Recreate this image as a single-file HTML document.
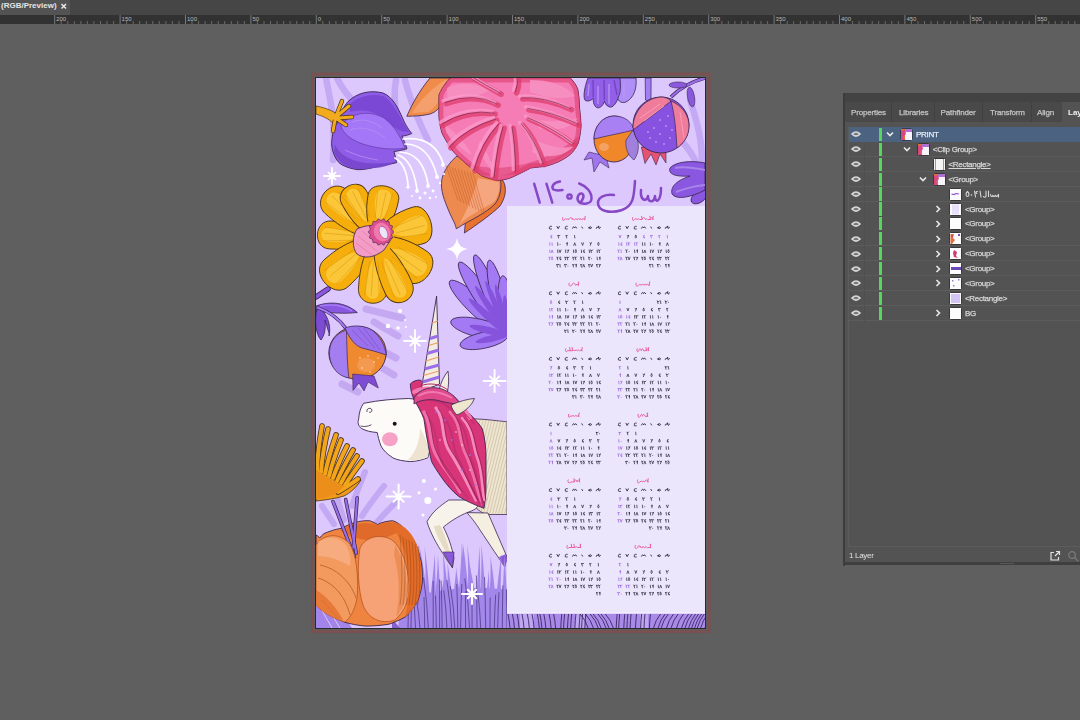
<!DOCTYPE html>
<html><head><meta charset="utf-8">
<style>
html,body{margin:0;padding:0;width:1080px;height:720px;overflow:hidden;background:#5f5f5f;font-family:"Liberation Sans",sans-serif;}
div,svg{position:absolute;}
</style></head><body>
<div style="left:0;top:0;width:1080px;height:720px;filter:blur(0.3px);">
<div style="left:0;top:0;width:1080px;height:15px;background:#464646;"></div>
<div style="left:0;top:0;width:70px;height:15px;background:#535353;"></div>
<div style="left:1px;top:-1.2px;font-size:8px;line-height:13px;font-weight:bold;color:#e4e4e4;white-space:nowrap;">(RGB/Preview)</div>
<svg width="8" height="8" style="left:59.5px;top:1.5px" viewBox="0 0 8 8"><path d="M1.5,2 L6,6.5 M6,2 L1.5,6.5" stroke="#e8e8e8" stroke-width="1.5"/></svg>
<svg width="1080" height="9" style="position:absolute;left:0;top:15px;background:#323232"><line x1="54.7" y1="0" x2="54.7" y2="9" stroke="#8a8a8a" stroke-width="0.8"/><text x="56.2" y="6.3" font-size="6" fill="#b8b8b8" font-family="Liberation Sans">200</text><line x1="61.2" y1="6" x2="61.2" y2="9" stroke="#7a7a7a" stroke-width="0.8"/><line x1="67.8" y1="6" x2="67.8" y2="9" stroke="#7a7a7a" stroke-width="0.8"/><line x1="74.3" y1="6" x2="74.3" y2="9" stroke="#7a7a7a" stroke-width="0.8"/><line x1="80.9" y1="6" x2="80.9" y2="9" stroke="#7a7a7a" stroke-width="0.8"/><line x1="87.4" y1="6" x2="87.4" y2="9" stroke="#7a7a7a" stroke-width="0.8"/><line x1="93.9" y1="6" x2="93.9" y2="9" stroke="#7a7a7a" stroke-width="0.8"/><line x1="100.5" y1="6" x2="100.5" y2="9" stroke="#7a7a7a" stroke-width="0.8"/><line x1="107.0" y1="6" x2="107.0" y2="9" stroke="#7a7a7a" stroke-width="0.8"/><line x1="113.6" y1="6" x2="113.6" y2="9" stroke="#7a7a7a" stroke-width="0.8"/><line x1="120.1" y1="0" x2="120.1" y2="9" stroke="#8a8a8a" stroke-width="0.8"/><text x="121.6" y="6.3" font-size="6" fill="#b8b8b8" font-family="Liberation Sans">150</text><line x1="126.6" y1="6" x2="126.6" y2="9" stroke="#7a7a7a" stroke-width="0.8"/><line x1="133.2" y1="6" x2="133.2" y2="9" stroke="#7a7a7a" stroke-width="0.8"/><line x1="139.7" y1="6" x2="139.7" y2="9" stroke="#7a7a7a" stroke-width="0.8"/><line x1="146.3" y1="6" x2="146.3" y2="9" stroke="#7a7a7a" stroke-width="0.8"/><line x1="152.8" y1="6" x2="152.8" y2="9" stroke="#7a7a7a" stroke-width="0.8"/><line x1="159.3" y1="6" x2="159.3" y2="9" stroke="#7a7a7a" stroke-width="0.8"/><line x1="165.9" y1="6" x2="165.9" y2="9" stroke="#7a7a7a" stroke-width="0.8"/><line x1="172.4" y1="6" x2="172.4" y2="9" stroke="#7a7a7a" stroke-width="0.8"/><line x1="179.0" y1="6" x2="179.0" y2="9" stroke="#7a7a7a" stroke-width="0.8"/><line x1="185.5" y1="0" x2="185.5" y2="9" stroke="#8a8a8a" stroke-width="0.8"/><text x="187.0" y="6.3" font-size="6" fill="#b8b8b8" font-family="Liberation Sans">100</text><line x1="192.0" y1="6" x2="192.0" y2="9" stroke="#7a7a7a" stroke-width="0.8"/><line x1="198.6" y1="6" x2="198.6" y2="9" stroke="#7a7a7a" stroke-width="0.8"/><line x1="205.1" y1="6" x2="205.1" y2="9" stroke="#7a7a7a" stroke-width="0.8"/><line x1="211.7" y1="6" x2="211.7" y2="9" stroke="#7a7a7a" stroke-width="0.8"/><line x1="218.2" y1="6" x2="218.2" y2="9" stroke="#7a7a7a" stroke-width="0.8"/><line x1="224.7" y1="6" x2="224.7" y2="9" stroke="#7a7a7a" stroke-width="0.8"/><line x1="231.3" y1="6" x2="231.3" y2="9" stroke="#7a7a7a" stroke-width="0.8"/><line x1="237.8" y1="6" x2="237.8" y2="9" stroke="#7a7a7a" stroke-width="0.8"/><line x1="244.4" y1="6" x2="244.4" y2="9" stroke="#7a7a7a" stroke-width="0.8"/><line x1="250.9" y1="0" x2="250.9" y2="9" stroke="#8a8a8a" stroke-width="0.8"/><text x="252.4" y="6.3" font-size="6" fill="#b8b8b8" font-family="Liberation Sans">50</text><line x1="257.4" y1="6" x2="257.4" y2="9" stroke="#7a7a7a" stroke-width="0.8"/><line x1="264.0" y1="6" x2="264.0" y2="9" stroke="#7a7a7a" stroke-width="0.8"/><line x1="270.5" y1="6" x2="270.5" y2="9" stroke="#7a7a7a" stroke-width="0.8"/><line x1="277.1" y1="6" x2="277.1" y2="9" stroke="#7a7a7a" stroke-width="0.8"/><line x1="283.6" y1="6" x2="283.6" y2="9" stroke="#7a7a7a" stroke-width="0.8"/><line x1="290.1" y1="6" x2="290.1" y2="9" stroke="#7a7a7a" stroke-width="0.8"/><line x1="296.7" y1="6" x2="296.7" y2="9" stroke="#7a7a7a" stroke-width="0.8"/><line x1="303.2" y1="6" x2="303.2" y2="9" stroke="#7a7a7a" stroke-width="0.8"/><line x1="309.8" y1="6" x2="309.8" y2="9" stroke="#7a7a7a" stroke-width="0.8"/><line x1="316.3" y1="0" x2="316.3" y2="9" stroke="#8a8a8a" stroke-width="0.8"/><text x="317.8" y="6.3" font-size="6" fill="#b8b8b8" font-family="Liberation Sans">0</text><line x1="322.8" y1="6" x2="322.8" y2="9" stroke="#7a7a7a" stroke-width="0.8"/><line x1="329.4" y1="6" x2="329.4" y2="9" stroke="#7a7a7a" stroke-width="0.8"/><line x1="335.9" y1="6" x2="335.9" y2="9" stroke="#7a7a7a" stroke-width="0.8"/><line x1="342.5" y1="6" x2="342.5" y2="9" stroke="#7a7a7a" stroke-width="0.8"/><line x1="349.0" y1="6" x2="349.0" y2="9" stroke="#7a7a7a" stroke-width="0.8"/><line x1="355.5" y1="6" x2="355.5" y2="9" stroke="#7a7a7a" stroke-width="0.8"/><line x1="362.1" y1="6" x2="362.1" y2="9" stroke="#7a7a7a" stroke-width="0.8"/><line x1="368.6" y1="6" x2="368.6" y2="9" stroke="#7a7a7a" stroke-width="0.8"/><line x1="375.2" y1="6" x2="375.2" y2="9" stroke="#7a7a7a" stroke-width="0.8"/><line x1="381.7" y1="0" x2="381.7" y2="9" stroke="#8a8a8a" stroke-width="0.8"/><text x="383.2" y="6.3" font-size="6" fill="#b8b8b8" font-family="Liberation Sans">50</text><line x1="388.2" y1="6" x2="388.2" y2="9" stroke="#7a7a7a" stroke-width="0.8"/><line x1="394.8" y1="6" x2="394.8" y2="9" stroke="#7a7a7a" stroke-width="0.8"/><line x1="401.3" y1="6" x2="401.3" y2="9" stroke="#7a7a7a" stroke-width="0.8"/><line x1="407.9" y1="6" x2="407.9" y2="9" stroke="#7a7a7a" stroke-width="0.8"/><line x1="414.4" y1="6" x2="414.4" y2="9" stroke="#7a7a7a" stroke-width="0.8"/><line x1="420.9" y1="6" x2="420.9" y2="9" stroke="#7a7a7a" stroke-width="0.8"/><line x1="427.5" y1="6" x2="427.5" y2="9" stroke="#7a7a7a" stroke-width="0.8"/><line x1="434.0" y1="6" x2="434.0" y2="9" stroke="#7a7a7a" stroke-width="0.8"/><line x1="440.6" y1="6" x2="440.6" y2="9" stroke="#7a7a7a" stroke-width="0.8"/><line x1="447.1" y1="0" x2="447.1" y2="9" stroke="#8a8a8a" stroke-width="0.8"/><text x="448.6" y="6.3" font-size="6" fill="#b8b8b8" font-family="Liberation Sans">100</text><line x1="453.6" y1="6" x2="453.6" y2="9" stroke="#7a7a7a" stroke-width="0.8"/><line x1="460.2" y1="6" x2="460.2" y2="9" stroke="#7a7a7a" stroke-width="0.8"/><line x1="466.7" y1="6" x2="466.7" y2="9" stroke="#7a7a7a" stroke-width="0.8"/><line x1="473.3" y1="6" x2="473.3" y2="9" stroke="#7a7a7a" stroke-width="0.8"/><line x1="479.8" y1="6" x2="479.8" y2="9" stroke="#7a7a7a" stroke-width="0.8"/><line x1="486.3" y1="6" x2="486.3" y2="9" stroke="#7a7a7a" stroke-width="0.8"/><line x1="492.9" y1="6" x2="492.9" y2="9" stroke="#7a7a7a" stroke-width="0.8"/><line x1="499.4" y1="6" x2="499.4" y2="9" stroke="#7a7a7a" stroke-width="0.8"/><line x1="506.0" y1="6" x2="506.0" y2="9" stroke="#7a7a7a" stroke-width="0.8"/><line x1="512.5" y1="0" x2="512.5" y2="9" stroke="#8a8a8a" stroke-width="0.8"/><text x="514.0" y="6.3" font-size="6" fill="#b8b8b8" font-family="Liberation Sans">150</text><line x1="519.0" y1="6" x2="519.0" y2="9" stroke="#7a7a7a" stroke-width="0.8"/><line x1="525.6" y1="6" x2="525.6" y2="9" stroke="#7a7a7a" stroke-width="0.8"/><line x1="532.1" y1="6" x2="532.1" y2="9" stroke="#7a7a7a" stroke-width="0.8"/><line x1="538.7" y1="6" x2="538.7" y2="9" stroke="#7a7a7a" stroke-width="0.8"/><line x1="545.2" y1="6" x2="545.2" y2="9" stroke="#7a7a7a" stroke-width="0.8"/><line x1="551.7" y1="6" x2="551.7" y2="9" stroke="#7a7a7a" stroke-width="0.8"/><line x1="558.3" y1="6" x2="558.3" y2="9" stroke="#7a7a7a" stroke-width="0.8"/><line x1="564.8" y1="6" x2="564.8" y2="9" stroke="#7a7a7a" stroke-width="0.8"/><line x1="571.4" y1="6" x2="571.4" y2="9" stroke="#7a7a7a" stroke-width="0.8"/><line x1="577.9" y1="0" x2="577.9" y2="9" stroke="#8a8a8a" stroke-width="0.8"/><text x="579.4" y="6.3" font-size="6" fill="#b8b8b8" font-family="Liberation Sans">200</text><line x1="584.4" y1="6" x2="584.4" y2="9" stroke="#7a7a7a" stroke-width="0.8"/><line x1="591.0" y1="6" x2="591.0" y2="9" stroke="#7a7a7a" stroke-width="0.8"/><line x1="597.5" y1="6" x2="597.5" y2="9" stroke="#7a7a7a" stroke-width="0.8"/><line x1="604.1" y1="6" x2="604.1" y2="9" stroke="#7a7a7a" stroke-width="0.8"/><line x1="610.6" y1="6" x2="610.6" y2="9" stroke="#7a7a7a" stroke-width="0.8"/><line x1="617.1" y1="6" x2="617.1" y2="9" stroke="#7a7a7a" stroke-width="0.8"/><line x1="623.7" y1="6" x2="623.7" y2="9" stroke="#7a7a7a" stroke-width="0.8"/><line x1="630.2" y1="6" x2="630.2" y2="9" stroke="#7a7a7a" stroke-width="0.8"/><line x1="636.8" y1="6" x2="636.8" y2="9" stroke="#7a7a7a" stroke-width="0.8"/><line x1="643.3" y1="0" x2="643.3" y2="9" stroke="#8a8a8a" stroke-width="0.8"/><text x="644.8" y="6.3" font-size="6" fill="#b8b8b8" font-family="Liberation Sans">250</text><line x1="649.8" y1="6" x2="649.8" y2="9" stroke="#7a7a7a" stroke-width="0.8"/><line x1="656.4" y1="6" x2="656.4" y2="9" stroke="#7a7a7a" stroke-width="0.8"/><line x1="662.9" y1="6" x2="662.9" y2="9" stroke="#7a7a7a" stroke-width="0.8"/><line x1="669.5" y1="6" x2="669.5" y2="9" stroke="#7a7a7a" stroke-width="0.8"/><line x1="676.0" y1="6" x2="676.0" y2="9" stroke="#7a7a7a" stroke-width="0.8"/><line x1="682.5" y1="6" x2="682.5" y2="9" stroke="#7a7a7a" stroke-width="0.8"/><line x1="689.1" y1="6" x2="689.1" y2="9" stroke="#7a7a7a" stroke-width="0.8"/><line x1="695.6" y1="6" x2="695.6" y2="9" stroke="#7a7a7a" stroke-width="0.8"/><line x1="702.2" y1="6" x2="702.2" y2="9" stroke="#7a7a7a" stroke-width="0.8"/><line x1="708.7" y1="0" x2="708.7" y2="9" stroke="#8a8a8a" stroke-width="0.8"/><text x="710.2" y="6.3" font-size="6" fill="#b8b8b8" font-family="Liberation Sans">300</text><line x1="715.2" y1="6" x2="715.2" y2="9" stroke="#7a7a7a" stroke-width="0.8"/><line x1="721.8" y1="6" x2="721.8" y2="9" stroke="#7a7a7a" stroke-width="0.8"/><line x1="728.3" y1="6" x2="728.3" y2="9" stroke="#7a7a7a" stroke-width="0.8"/><line x1="734.9" y1="6" x2="734.9" y2="9" stroke="#7a7a7a" stroke-width="0.8"/><line x1="741.4" y1="6" x2="741.4" y2="9" stroke="#7a7a7a" stroke-width="0.8"/><line x1="747.9" y1="6" x2="747.9" y2="9" stroke="#7a7a7a" stroke-width="0.8"/><line x1="754.5" y1="6" x2="754.5" y2="9" stroke="#7a7a7a" stroke-width="0.8"/><line x1="761.0" y1="6" x2="761.0" y2="9" stroke="#7a7a7a" stroke-width="0.8"/><line x1="767.6" y1="6" x2="767.6" y2="9" stroke="#7a7a7a" stroke-width="0.8"/><line x1="774.1" y1="0" x2="774.1" y2="9" stroke="#8a8a8a" stroke-width="0.8"/><text x="775.6" y="6.3" font-size="6" fill="#b8b8b8" font-family="Liberation Sans">350</text><line x1="780.6" y1="6" x2="780.6" y2="9" stroke="#7a7a7a" stroke-width="0.8"/><line x1="787.2" y1="6" x2="787.2" y2="9" stroke="#7a7a7a" stroke-width="0.8"/><line x1="793.7" y1="6" x2="793.7" y2="9" stroke="#7a7a7a" stroke-width="0.8"/><line x1="800.3" y1="6" x2="800.3" y2="9" stroke="#7a7a7a" stroke-width="0.8"/><line x1="806.8" y1="6" x2="806.8" y2="9" stroke="#7a7a7a" stroke-width="0.8"/><line x1="813.3" y1="6" x2="813.3" y2="9" stroke="#7a7a7a" stroke-width="0.8"/><line x1="819.9" y1="6" x2="819.9" y2="9" stroke="#7a7a7a" stroke-width="0.8"/><line x1="826.4" y1="6" x2="826.4" y2="9" stroke="#7a7a7a" stroke-width="0.8"/><line x1="833.0" y1="6" x2="833.0" y2="9" stroke="#7a7a7a" stroke-width="0.8"/><line x1="839.5" y1="0" x2="839.5" y2="9" stroke="#8a8a8a" stroke-width="0.8"/><text x="841.0" y="6.3" font-size="6" fill="#b8b8b8" font-family="Liberation Sans">400</text><line x1="846.0" y1="6" x2="846.0" y2="9" stroke="#7a7a7a" stroke-width="0.8"/><line x1="852.6" y1="6" x2="852.6" y2="9" stroke="#7a7a7a" stroke-width="0.8"/><line x1="859.1" y1="6" x2="859.1" y2="9" stroke="#7a7a7a" stroke-width="0.8"/><line x1="865.7" y1="6" x2="865.7" y2="9" stroke="#7a7a7a" stroke-width="0.8"/><line x1="872.2" y1="6" x2="872.2" y2="9" stroke="#7a7a7a" stroke-width="0.8"/><line x1="878.7" y1="6" x2="878.7" y2="9" stroke="#7a7a7a" stroke-width="0.8"/><line x1="885.3" y1="6" x2="885.3" y2="9" stroke="#7a7a7a" stroke-width="0.8"/><line x1="891.8" y1="6" x2="891.8" y2="9" stroke="#7a7a7a" stroke-width="0.8"/><line x1="898.4" y1="6" x2="898.4" y2="9" stroke="#7a7a7a" stroke-width="0.8"/><line x1="904.9" y1="0" x2="904.9" y2="9" stroke="#8a8a8a" stroke-width="0.8"/><text x="906.4" y="6.3" font-size="6" fill="#b8b8b8" font-family="Liberation Sans">450</text><line x1="911.4" y1="6" x2="911.4" y2="9" stroke="#7a7a7a" stroke-width="0.8"/><line x1="918.0" y1="6" x2="918.0" y2="9" stroke="#7a7a7a" stroke-width="0.8"/><line x1="924.5" y1="6" x2="924.5" y2="9" stroke="#7a7a7a" stroke-width="0.8"/><line x1="931.1" y1="6" x2="931.1" y2="9" stroke="#7a7a7a" stroke-width="0.8"/><line x1="937.6" y1="6" x2="937.6" y2="9" stroke="#7a7a7a" stroke-width="0.8"/><line x1="944.1" y1="6" x2="944.1" y2="9" stroke="#7a7a7a" stroke-width="0.8"/><line x1="950.7" y1="6" x2="950.7" y2="9" stroke="#7a7a7a" stroke-width="0.8"/><line x1="957.2" y1="6" x2="957.2" y2="9" stroke="#7a7a7a" stroke-width="0.8"/><line x1="963.8" y1="6" x2="963.8" y2="9" stroke="#7a7a7a" stroke-width="0.8"/><line x1="970.3" y1="0" x2="970.3" y2="9" stroke="#8a8a8a" stroke-width="0.8"/><text x="971.8" y="6.3" font-size="6" fill="#b8b8b8" font-family="Liberation Sans">500</text><line x1="976.8" y1="6" x2="976.8" y2="9" stroke="#7a7a7a" stroke-width="0.8"/><line x1="983.4" y1="6" x2="983.4" y2="9" stroke="#7a7a7a" stroke-width="0.8"/><line x1="989.9" y1="6" x2="989.9" y2="9" stroke="#7a7a7a" stroke-width="0.8"/><line x1="996.5" y1="6" x2="996.5" y2="9" stroke="#7a7a7a" stroke-width="0.8"/><line x1="1003.0" y1="6" x2="1003.0" y2="9" stroke="#7a7a7a" stroke-width="0.8"/><line x1="1009.5" y1="6" x2="1009.5" y2="9" stroke="#7a7a7a" stroke-width="0.8"/><line x1="1016.1" y1="6" x2="1016.1" y2="9" stroke="#7a7a7a" stroke-width="0.8"/><line x1="1022.6" y1="6" x2="1022.6" y2="9" stroke="#7a7a7a" stroke-width="0.8"/><line x1="1029.2" y1="6" x2="1029.2" y2="9" stroke="#7a7a7a" stroke-width="0.8"/><line x1="1035.7" y1="0" x2="1035.7" y2="9" stroke="#8a8a8a" stroke-width="0.8"/><text x="1037.2" y="6.3" font-size="6" fill="#b8b8b8" font-family="Liberation Sans">550</text><line x1="1042.2" y1="6" x2="1042.2" y2="9" stroke="#7a7a7a" stroke-width="0.8"/><line x1="1048.8" y1="6" x2="1048.8" y2="9" stroke="#7a7a7a" stroke-width="0.8"/><line x1="1055.3" y1="6" x2="1055.3" y2="9" stroke="#7a7a7a" stroke-width="0.8"/><line x1="1061.9" y1="6" x2="1061.9" y2="9" stroke="#7a7a7a" stroke-width="0.8"/><line x1="1068.4" y1="6" x2="1068.4" y2="9" stroke="#7a7a7a" stroke-width="0.8"/><line x1="1074.9" y1="6" x2="1074.9" y2="9" stroke="#7a7a7a" stroke-width="0.8"/><line x1="1081.5" y1="6" x2="1081.5" y2="9" stroke="#7a7a7a" stroke-width="0.8"/><line x1="1088.0" y1="6" x2="1088.0" y2="9" stroke="#7a7a7a" stroke-width="0.8"/><line x1="1094.6" y1="6" x2="1094.6" y2="9" stroke="#7a7a7a" stroke-width="0.8"/></svg>
<svg width="1080" height="720" style="left:0;top:0" viewBox="0 0 1080 720"><defs><clipPath id="ab"><rect x="316" y="78" width="389" height="550"/></clipPath></defs><rect x="312.6" y="74" width="396.6" height="557.5" fill="none" stroke="#7b5050" stroke-width="2.8"/><rect x="315.5" y="77.5" width="390" height="551" fill="none" stroke="#2a2a2a" stroke-width="1"/><g clip-path="url(#ab)"><rect x="316" y="78" width="389" height="550" fill="#dcc8fd"/><g fill="none" stroke="#c4a9f4" stroke-width="6.5" stroke-linecap="round"><path d="M326,78 C330,100 336,120 333,160"/><path d="M337,78 C345,95 356,104 362,110"/><path d="M396,80 C392,100 398,130 402,150"/><path d="M405,80 C410,100 420,125 428,140"/><path d="M640,110 C650,120 680,130 695,160"/><path d="M690,100 C700,130 705,150 700,190"/></g><path d="M348,101.6 C358,92 371,90 383,93 C393,97 398,108 403,119 C406,126 409,130 411.8,133.5 C408,135 405,136 402,136 C404,141 406,145 407,148.8 C402,150 398,151 394,151.6 C395,155 396,159 396.5,162.7 C391,164 386,165 381,165.5 C372,168 364,170 357.7,169.7 C347,168 340,165 336.8,160 C332,152 331,145 332,139 C333,131 334,127 336.8,123.8 C340,114 344,106 348,101.6Z" fill="#8f5ce8" stroke="#3a2550" stroke-width="0.9"/><path d="M350,104 C360,95 375,93 385,97 C394,103 400,118 409,132 C400,132 394,128 388,122 C378,112 365,108 350,112Z" fill="#7a48d4"/><path d="M341,126 C350,112 370,110 384,118 C395,126 401,138 405,148 C394,150 380,149 366,145 C352,141 343,134 341,126Z" fill="#a476f8" stroke="#5a3498" stroke-width="0.6"/><path d="M335,145 C340,155 350,161 366,163 C378,164 388,163 395,162 C388,167 374,169 358,169 C346,168 338,162 334,152Z" fill="#7646cc" opacity="0.9"/><g fill="none" stroke="#b892f0" stroke-width="1.2" opacity="0.7"><path d="M352,122 C362,118 372,120 382,128"/><path d="M350,130 C360,126 372,128 385,138"/><path d="M345,150 C355,155 365,158 378,160"/></g><path d="M316,106 C322,107 328,109 334,112 L340,118 L334,124 C328,118 322,116 316,114Z" fill="#f2ab1f" stroke="#4a3418" stroke-width="0.7"/><g fill="none" stroke="#4a3418" stroke-width="4.4" stroke-linecap="round"><path d="M336,116 L342,101"/><path d="M337,116 L349,106"/><path d="M338,118 L352,117"/><path d="M337,119 L346,125"/><path d="M335,120 L333,131"/></g><g fill="none" stroke="#f2ab1f" stroke-width="3" stroke-linecap="round"><path d="M336,116 L342,101"/><path d="M337,116 L349,106"/><path d="M338,118 L352,117"/><path d="M337,119 L346,125"/><path d="M335,120 L333,131"/></g><circle cx="336" cy="117" r="3.5" fill="#f2ab1f"/><path d="M406.8,116.3 C412,104 420,90 430,78 L452,78 C450,88 446,96 443,101 C440,108 436,112 430,114 C422,116 414,116 406.8,116.3Z" fill="#f08c4a" stroke="#3a2550" stroke-width="0.8"/><path d="M412,113 C420,100 432,88 445,80 L450,80 C445,92 438,106 428,112Z" fill="#f6a574" opacity="0.8"/><path d="M464.4,233 C475,226 492,214 500,206 C505,198 506,192 505,186 C504,182 503,180 501,179 L470,175 C468,195 466,215 464.4,233Z" fill="#e8722e" stroke="#3a2550" stroke-width="0.8"/><path d="M456.3,228.8 C455,222 452,220 446,204 C441,192 440,182 443.5,174 C447,166 452,160 457,156 L500,175 C502,186 501,196 495,204 C485,214 470,220 456.3,228.8Z" fill="#ec8a50" stroke="#3a2550" stroke-width="0.8"/><path d="M459,225 C470,214 485,208 494,202 C499,195 500,188 499,182 L478,178 C474,195 466,212 459,225Z" fill="#f6a67e"/><g stroke="#c85a24" stroke-width="0.6" opacity="0.8"><path d="M446,165.3 L458,200.5"/><path d="M449,166.2 L461,202.0"/><path d="M452,167.1 L464,203.5"/><path d="M455,168.0 L467,205.0"/><path d="M458,168.9 L470,206.5"/><path d="M461,169.8 L473,208.0"/><path d="M464,170.7 L476,209.5"/><path d="M467,171.6 L479,211.0"/><path d="M470,172.5 L482,212.5"/><path d="M473,173.4 L485,214.0"/></g><path d="M439,94.8 C441,90 443,87 445.2,84.1 C447,81 449,79 451.3,78 L570.4,78 C574,82 577,86 578,90.2 C579,96 579.5,102 579.6,108.5 C580.5,115 581,121 581,127 C580.5,133 579.5,139 578,143.7 C576,148 573,152 570.4,154.4 C566,158 562,160 558,162 C553,164 548,166 543,166.6 C539,167 535,167.5 530.7,168 C527,170 524,171.5 521.5,172.7 C517,175 512,177.5 507.8,178.8 C504,179.8 500,180.3 497,180.3 C491,179 486,177.5 481.8,175.8 C478,173 474,170.5 471,168 C467,164.5 463,161 459,157.4 C455,154 452,150 449.7,146.7 C447,142 444,137.5 442,133 C440.5,128 439.5,123 439,117.7 C438.8,113 438.8,109 439,105.5 C438.8,102 438.8,98 439,94.8Z" fill="#f67cb6" stroke="#5a1838" stroke-width="0.9"/><clipPath id="pfclip"><path d="M439,94.8 C441,90 443,87 445.2,84.1 C447,81 449,79 451.3,78 L570.4,78 C574,82 577,86 578,90.2 C579,96 579.5,102 579.6,108.5 C580.5,115 581,121 581,127 C580.5,133 579.5,139 578,143.7 C576,148 573,152 570.4,154.4 C566,158 562,160 558,162 C553,164 548,166 543,166.6 C539,167 535,167.5 530.7,168 C527,170 524,171.5 521.5,172.7 C517,175 512,177.5 507.8,178.8 C504,179.8 500,180.3 497,180.3 C491,179 486,177.5 481.8,175.8 C478,173 474,170.5 471,168 C467,164.5 463,161 459,157.4 C455,154 452,150 449.7,146.7 C447,142 444,137.5 442,133 C440.5,128 439.5,123 439,117.7 C438.8,113 438.8,109 439,105.5 C438.8,102 438.8,98 439,94.8Z"/></clipPath><g clip-path="url(#pfclip)"><path d="M439,94.8 C441,90 443,87 445.2,84.1 C447,81 449,79 451.3,78 L570.4,78 C574,82 577,86 578,90.2 C579,96 579.5,102 579.6,108.5 C580.5,115 581,121 581,127 C580.5,133 579.5,139 578,143.7 C576,148 573,152 570.4,154.4 C566,158 562,160 558,162 C553,164 548,166 543,166.6 C539,167 535,167.5 530.7,168 C527,170 524,171.5 521.5,172.7 C517,175 512,177.5 507.8,178.8 C504,179.8 500,180.3 497,180.3 C491,179 486,177.5 481.8,175.8 C478,173 474,170.5 471,168 C467,164.5 463,161 459,157.4 C455,154 452,150 449.7,146.7 C447,142 444,137.5 442,133 C440.5,128 439.5,123 439,117.7 C438.8,113 438.8,109 439,105.5 C438.8,102 438.8,98 439,94.8Z" fill="none" stroke="#e04474" stroke-width="9" opacity="0.65"/><path d="M440,150 C470,185 540,175 580,140" fill="none" stroke="#d8386a" stroke-width="8" opacity="0.5"/></g><g fill="#f891c2" opacity="0.9"><path d="M447,88 C458,82 475,82 490,90 C480,96 462,100 448,104Z"/><path d="M530,80 C548,80 565,84 575,96 C562,100 545,98 530,92Z"/><path d="M445,125 C455,132 465,142 472,155 C462,150 452,140 446,132Z"/><path d="M480,140 C486,150 492,162 496,175 C488,168 482,156 478,146Z"/><path d="M535,140 C548,146 562,150 574,146 C565,156 548,160 532,152Z"/><path d="M540,120 C552,122 566,122 578,118 C572,128 555,132 538,128Z"/></g><g fill="none" stroke="#e03c6c" stroke-width="5.5" stroke-linecap="round" opacity="0.75" transform="translate(1.2,1.2)"><path d="M497,104 Q474,91.7 445,102.4"/><path d="M494,113 Q466.5,108.5 442,124"/><path d="M495.6,119 Q466.5,128 449.7,146.7"/><path d="M498.6,124 Q481.8,142 474,169.6"/><path d="M503,127 Q497,146.7 494,177"/><path d="M512,127 Q515.4,146.7 515.4,171"/><path d="M521.5,124 Q535,139 543,163.5"/><path d="M527.6,117.7 Q550.6,127 573.5,143.7"/><path d="M527.6,108.5 Q550.6,111.6 578,124"/><path d="M521.5,97.8 Q543,96 570.4,108.5"/><path d="M515.4,91.7 Q518.5,84 517,78"/><path d="M500,93 Q486,85.6 474,78"/></g><g fill="none" stroke="#fd9fcf" stroke-width="3.5" stroke-linecap="round" opacity="0.7" transform="translate(-2,-1.5)"><path d="M497,104 Q474,91.7 445,102.4"/><path d="M494,113 Q466.5,108.5 442,124"/><path d="M495.6,119 Q466.5,128 449.7,146.7"/><path d="M498.6,124 Q481.8,142 474,169.6"/><path d="M503,127 Q497,146.7 494,177"/><path d="M512,127 Q515.4,146.7 515.4,171"/><path d="M521.5,124 Q535,139 543,163.5"/><path d="M527.6,117.7 Q550.6,127 573.5,143.7"/><path d="M527.6,108.5 Q550.6,111.6 578,124"/><path d="M521.5,97.8 Q543,96 570.4,108.5"/><path d="M515.4,91.7 Q518.5,84 517,78"/><path d="M500,93 Q486,85.6 474,78"/></g><g fill="none" stroke="#6a1c44" stroke-width="0.7" stroke-linecap="round" opacity="0.85"><path d="M497,104 Q474,91.7 445,102.4"/><path d="M494,113 Q466.5,108.5 442,124"/><path d="M495.6,119 Q466.5,128 449.7,146.7"/><path d="M498.6,124 Q481.8,142 474,169.6"/><path d="M503,127 Q497,146.7 494,177"/><path d="M512,127 Q515.4,146.7 515.4,171"/><path d="M521.5,124 Q535,139 543,163.5"/><path d="M527.6,117.7 Q550.6,127 573.5,143.7"/><path d="M527.6,108.5 Q550.6,111.6 578,124"/><path d="M521.5,97.8 Q543,96 570.4,108.5"/><path d="M515.4,91.7 Q518.5,84 517,78"/><path d="M500,93 Q486,85.6 474,78"/></g><g fill="none" stroke="#ffffff" stroke-width="1.7" stroke-linecap="round"><path d="M403,139 C420,137 436,142 443,163"/><path d="M405,144 C420,144 431,153 437,176"/><path d="M400,152 C415,153 424,162 428,184"/><path d="M398,155 C408,158 414,170 417,189"/><path d="M395,158 C402,162 407,172 408,185"/></g><g fill="#ffffff"><circle cx="443" cy="165" r="1.9"/><circle cx="437" cy="177" r="1.9"/><circle cx="428" cy="186" r="1.9"/><circle cx="417" cy="191" r="1.9"/><circle cx="408" cy="187" r="1.7"/><circle cx="425" cy="193" r="1.5"/><circle cx="433" cy="191" r="1.4"/><circle cx="440" cy="183" r="1.2"/><circle cx="430" cy="198" r="1.3"/><circle cx="420" cy="198" r="1.4"/><circle cx="412" cy="196" r="1.1"/><circle cx="444" cy="174" r="1.1"/><circle cx="436" cy="197" r="1"/></g><path d="M332.0,176.0 L340.0,176.0 M332.0,176.0 L335.4,179.4 M332.0,176.0 L332.0,184.0 M332.0,176.0 L328.6,179.4 M332.0,176.0 L324.0,176.0 M332.0,176.0 L328.6,172.6 M332.0,176.0 L332.0,168.0 M332.0,176.0 L335.4,172.6" stroke="#ffffff" stroke-width="1.9" stroke-linecap="round" fill="none"/><path d="M0.0,0 C9.1,-9.8 27.3,-14.0 45.5,-14.0 C62.5,-14.0 62.5,14.0 45.5,14.0 C27.3,14.0 9.1,9.8 0.0,0Z" transform="translate(375.6,237.8) rotate(-176.4)" fill="#f6ae0c" stroke="#4a3418" stroke-width="0.9"/><path d="M18.2,0 C23.9,-4.9 35.2,-7.0 46.5,-7.0 C57.0,-7.0 57.0,7.0 46.5,7.0 C35.2,7.0 23.9,4.9 18.2,0Z" transform="translate(375.6,237.8) rotate(-176.4)" fill="#fdd04a" stroke="none" stroke-width="0" opacity="0.7"/><path d="M0.0,0 C10.7,-11.2 32.0,-16.0 53.3,-16.0 C73.2,-16.0 73.2,16.0 53.3,16.0 C32.0,16.0 10.7,11.2 0.0,0Z" transform="translate(375.6,237.8) rotate(-137.7)" fill="#f6ae0c" stroke="#4a3418" stroke-width="0.9"/><path d="M21.3,0 C27.9,-5.6 41.2,-8.0 54.4,-8.0 C66.7,-8.0 66.7,8.0 54.4,8.0 C41.2,8.0 27.9,5.6 21.3,0Z" transform="translate(375.6,237.8) rotate(-137.7)" fill="#fdd04a" stroke="none" stroke-width="0" opacity="0.7"/><path d="M0.0,0 C9.1,-9.8 27.4,-14.0 45.7,-14.0 C62.8,-14.0 62.8,14.0 45.7,14.0 C27.4,14.0 9.1,9.8 0.0,0Z" transform="translate(375.6,237.8) rotate(-118.0)" fill="#f6ae0c" stroke="#4a3418" stroke-width="0.9"/><path d="M18.3,0 C23.9,-4.9 35.3,-7.0 46.6,-7.0 C57.2,-7.0 57.2,7.0 46.6,7.0 C35.3,7.0 23.9,4.9 18.3,0Z" transform="translate(375.6,237.8) rotate(-118.0)" fill="#fdd04a" stroke="none" stroke-width="0" opacity="0.7"/><path d="M0.0,0 C8.2,-10.8 24.7,-15.5 41.1,-15.5 C56.4,-15.5 56.4,15.5 41.1,15.5 C24.7,15.5 8.2,10.8 0.0,0Z" transform="translate(375.6,237.8) rotate(-79.1)" fill="#f6ae0c" stroke="#4a3418" stroke-width="0.9"/><path d="M16.4,0 C21.5,-5.4 31.7,-7.8 41.9,-7.8 C51.4,-7.8 51.4,7.8 41.9,7.8 C31.7,7.8 21.5,5.4 16.4,0Z" transform="translate(375.6,237.8) rotate(-79.1)" fill="#fdd04a" stroke="none" stroke-width="0" opacity="0.7"/><path d="M0.0,0 C9.0,-13.3 26.9,-19.0 44.9,-19.0 C61.6,-19.0 61.6,19.0 44.9,19.0 C26.9,19.0 9.0,13.3 0.0,0Z" transform="translate(375.6,237.8) rotate(-16.3)" fill="#f6ae0c" stroke="#4a3418" stroke-width="0.9"/><path d="M17.9,0 C23.5,-6.6 34.6,-9.5 45.8,-9.5 C56.1,-9.5 56.1,9.5 45.8,9.5 C34.6,9.5 23.5,6.6 17.9,0Z" transform="translate(375.6,237.8) rotate(-16.3)" fill="#fdd04a" stroke="none" stroke-width="0" opacity="0.7"/><path d="M0.0,0 C10.1,-12.6 30.3,-18.0 50.5,-18.0 C69.3,-18.0 69.3,18.0 50.5,18.0 C30.3,18.0 10.1,12.6 0.0,0Z" transform="translate(375.6,237.8) rotate(34.6)" fill="#f6ae0c" stroke="#4a3418" stroke-width="0.9"/><path d="M20.2,0 C26.4,-6.3 39.0,-9.0 51.5,-9.0 C63.2,-9.0 63.2,9.0 51.5,9.0 C39.0,9.0 26.4,6.3 20.2,0Z" transform="translate(375.6,237.8) rotate(34.6)" fill="#fdd04a" stroke="none" stroke-width="0" opacity="0.7"/><path d="M0.0,0 C10.6,-12.6 31.8,-18.0 53.0,-18.0 C72.8,-18.0 72.8,18.0 53.0,18.0 C31.8,18.0 10.6,12.6 0.0,0Z" transform="translate(375.6,237.8) rotate(138.1)" fill="#f6ae0c" stroke="#4a3418" stroke-width="0.9"/><path d="M21.2,0 C27.8,-6.3 40.9,-9.0 54.1,-9.0 C66.3,-9.0 66.3,9.0 54.1,9.0 C40.9,9.0 27.8,6.3 21.2,0Z" transform="translate(375.6,237.8) rotate(138.1)" fill="#fdd04a" stroke="none" stroke-width="0" opacity="0.7"/><path d="M0.0,0 C10.2,-10.1 30.7,-14.5 51.2,-14.5 C70.3,-14.5 70.3,14.5 51.2,14.5 C30.7,14.5 10.2,10.1 0.0,0Z" transform="translate(375.6,237.8) rotate(93.0)" fill="#f6ae0c" stroke="#4a3418" stroke-width="0.9"/><path d="M20.5,0 C26.8,-5.1 39.5,-7.2 52.2,-7.2 C64.1,-7.2 64.1,7.2 52.2,7.2 C39.5,7.2 26.8,5.1 20.5,0Z" transform="translate(375.6,237.8) rotate(93.0)" fill="#fdd04a" stroke="none" stroke-width="0" opacity="0.7"/><path d="M0.0,0 C10.9,-10.1 32.8,-14.5 54.6,-14.5 C75.0,-14.5 75.0,14.5 54.6,14.5 C32.8,14.5 10.9,10.1 0.0,0Z" transform="translate(375.6,237.8) rotate(65.3)" fill="#f6ae0c" stroke="#4a3418" stroke-width="0.9"/><path d="M21.9,0 C28.6,-5.1 42.2,-7.2 55.7,-7.2 C68.4,-7.2 68.4,7.2 55.7,7.2 C42.2,7.2 28.6,5.1 21.9,0Z" transform="translate(375.6,237.8) rotate(65.3)" fill="#fdd04a" stroke="none" stroke-width="0" opacity="0.7"/><circle cx="375.6" cy="237.8" r="18" fill="#f6ae0c"/><path d="M354.2,240.2 L323.7,240.9 M354.4,235.6 L324.2,233.2 M354.7,231.9 L324.6,226.9 M354.3,224.3 L326.0,202.5 M357.8,220.4 L332.0,196.0 M360.7,217.2 L336.8,190.7 M362.3,220.7 L345.7,195.0 M366.3,218.6 L352.5,191.4 M369.7,216.8 L358.1,188.5 M375.1,218.2 L377.6,190.7 M380.2,219.1 L386.0,192.4 M384.3,219.9 L392.8,193.7 M394.2,227.0 L422.0,215.3 M396.0,233.0 L424.9,225.3 M397.5,237.9 L427.3,233.5 M397.7,247.2 L427.3,263.6 M394.4,252.1 L421.7,271.8 M391.6,256.1 L417.1,278.4 M360.4,257.9 L336.3,283.9 M356.5,253.5 L329.7,276.6 M353.2,249.9 L324.3,270.6 M378.2,261.9 L379.1,296.1 M373.5,261.6 L371.1,295.7 M369.6,261.4 L364.6,295.3 M389.8,259.3 L407.4,291.3 M385.4,261.3 L400.1,294.7 M381.9,263.0 L394.2,297.4" stroke="#c98600" stroke-width="0.7" opacity="0.55" fill="none"/><path d="M357,229 C352,236 352,248 357,254 C364,259 374,258 384,250 L392,238 C385,226 372,222 357,229Z" fill="#f39cc6" stroke="#3a2550" stroke-width="0.8"/><g stroke="#e06aa0" stroke-width="0.6" opacity="0.8"><path d="M358,236 L378,252"/><path d="M356,243 L372,255"/><path d="M362,231 L382,247"/></g><path d="M393.8,232.0 L391.7,234.6 L392.6,237.9 L389.5,239.2 L389.0,242.6 L385.7,242.4 L383.9,245.2 L381.0,243.5 L378.1,245.2 L376.3,242.4 L373.0,242.6 L372.5,239.2 L369.4,237.9 L370.3,234.6 L368.2,232.0 L370.3,229.4 L369.4,226.1 L372.5,224.8 L373.0,221.4 L376.3,221.6 L378.1,218.8 L381.0,220.5 L383.9,218.8 L385.7,221.6 L389.0,221.4 L389.5,224.8 L392.6,226.1 L391.7,229.4Z" fill="#de4f92" stroke="#3a2550" stroke-width="0.6"/><ellipse cx="382" cy="232" rx="8" ry="9.5" transform="rotate(-25 382 232)" fill="#f07aae"/><ellipse cx="383.5" cy="232.5" rx="3.8" ry="6.5" transform="rotate(-25 383.5 232.5)" fill="#ece4f8" stroke="#9a3a70" stroke-width="0.5"/><ellipse cx="478.9" cy="308.0" rx="39.7" ry="9.0" transform="rotate(-137.1 478.9 308.0)" fill="#a47af4" stroke="#3a2550" stroke-width="0.8" /><ellipse cx="483.6" cy="298.6" rx="43.8" ry="8.0" transform="rotate(-123.9 483.6 298.6)" fill="#a47af4" stroke="#3a2550" stroke-width="0.8" /><ellipse cx="491.4" cy="295.0" rx="43.4" ry="7.0" transform="rotate(-112.6 491.4 295.0)" fill="#a47af4" stroke="#3a2550" stroke-width="0.8" /><ellipse cx="498.6" cy="297.6" rx="38.6" ry="7.0" transform="rotate(-104.0 498.6 297.6)" fill="#a47af4" stroke="#3a2550" stroke-width="0.8" /><ellipse cx="505.4" cy="305.4" rx="29.8" ry="7.0" transform="rotate(-95.0 505.4 305.4)" fill="#a47af4" stroke="#3a2550" stroke-width="0.8" /><ellipse cx="479.4" cy="328.2" rx="29.4" ry="9.0" transform="rotate(-166.7 479.4 328.2)" fill="#a47af4" stroke="#3a2550" stroke-width="0.8" /><ellipse cx="484.1" cy="340.2" rx="24.5" ry="8.0" transform="rotate(167.7 484.1 340.2)" fill="#a47af4" stroke="#3a2550" stroke-width="0.8" /><ellipse cx="488.4" cy="316.8" rx="26.7" ry="3.6" transform="rotate(-137.1 488.4 316.8)" fill="#8654dc" stroke="none" stroke-width="0" /><ellipse cx="491.6" cy="310.5" rx="29.5" ry="3.2" transform="rotate(-123.9 491.6 310.5)" fill="#8654dc" stroke="none" stroke-width="0" /><ellipse cx="496.8" cy="308.1" rx="29.2" ry="2.8" transform="rotate(-112.6 496.8 308.1)" fill="#8654dc" stroke="none" stroke-width="0" /><ellipse cx="501.7" cy="309.8" rx="26.0" ry="2.8" transform="rotate(-104.0 501.7 309.8)" fill="#8654dc" stroke="none" stroke-width="0" /><ellipse cx="506.2" cy="315.1" rx="20.0" ry="2.8" transform="rotate(-95.0 506.2 315.1)" fill="#8654dc" stroke="none" stroke-width="0" /><ellipse cx="488.8" cy="330.4" rx="19.8" ry="3.6" transform="rotate(-166.7 488.8 330.4)" fill="#8654dc" stroke="none" stroke-width="0" /><ellipse cx="491.9" cy="338.5" rx="16.5" ry="3.2" transform="rotate(167.7 491.9 338.5)" fill="#8654dc" stroke="none" stroke-width="0" /><path d="M457,238 Q458.1,247.9 468,249 Q458.1,250.1 457,260 Q455.9,250.1 446,249 Q455.9,247.9 457,238Z" fill="#ffffff"/><path d="M316,297 L328,289" fill="none" stroke="#3a2550" stroke-width="5.4" stroke-linecap="round"/><path d="M316,297 L328,289" fill="none" stroke="#8a58e0" stroke-width="3.8" stroke-linecap="round"/><path d="M316,306 C330,301 345,302 357.3,312.5 C345,314 330,313 316,311Z" fill="#8a58e0" stroke="#3a2550" stroke-width="0.8"/><path d="M320,306 C332,304 344,306 352,311" fill="none" stroke="#a47af4" stroke-width="1.5"/><path d="M317,309 C314,320 316,335 321,340 C324,336 326,330 325,320 C327,328 330,334 329,336 C331,328 329,318 322,310Z" fill="#7c4cd4" stroke="#3a2550" stroke-width="0.8"/><path d="M317.3,307.5 C330,312 340,320 345.7,328.3" fill="none" stroke="#3a2550" stroke-width="3.4"/><path d="M317.3,307.5 C330,312 340,320 345.7,328.3" fill="none" stroke="#a47af4" stroke-width="2"/><g fill="none" stroke="#c4a9f2" stroke-width="7" stroke-linecap="round"><path d="M366,309 L402,318"/><path d="M374,322 L398,336"/><path d="M384,352 L396,358"/><path d="M382,368 L394,375"/><path d="M342,384 L358,392"/></g><ellipse cx="357.5" cy="352.8" rx="28.7" ry="26.4" fill="#ef8a30" stroke="#3a2550" stroke-width="0.9"/><path d="M346.4,330 C347,345 347,365 349,378 C338,376 331,368 329.5,356 C328.5,344 334,334 346.4,330Z" fill="#a47ef0" stroke="#3a2550" stroke-width="0.7"/><path d="M345,328 C352,325 364,325 372,330 C380,336 385,345 386.3,355 C378,352 370,350 362,348 C356,346 350,340 345,328Z" fill="#9a70ec" stroke="#3a2550" stroke-width="0.7"/><g stroke="#7a50c4" stroke-width="0.6" fill="none"><path d="M352,330 L368,346"/><path d="M358,328 L375,348"/><path d="M364,328 L380,350"/></g><ellipse cx="366" cy="365" rx="9" ry="7" fill="#f6a466" opacity="0.6"/><g fill="#fde0c0"><circle cx="360" cy="358" r="0.8"/><circle cx="368" cy="356" r="0.8"/><circle cx="374" cy="362" r="0.8"/><circle cx="362" cy="368" r="0.8"/><circle cx="370" cy="372" r="0.8"/><circle cx="378" cy="358" r="0.7"/></g><path d="M352.7,374 L353,390.4 L359,383 L364,391 L368,382 L378.3,388 L374,376Z" fill="#7e4cd4" stroke="#3a2550" stroke-width="0.6"/><g fill="#ffffff"><circle cx="400" cy="311" r="2"/><circle cx="388" cy="326" r="2.2"/><circle cx="398" cy="328" r="1.8"/><circle cx="405" cy="320" r="1"/><circle cx="406" cy="327" r="1"/></g><path d="M415.0,341.0 L426.0,341.0 M415.0,341.0 L419.7,345.7 M415.0,341.0 L415.0,352.0 M415.0,341.0 L410.3,345.7 M415.0,341.0 L404.0,341.0 M415.0,341.0 L410.3,336.3 M415.0,341.0 L415.0,330.0 M415.0,341.0 L419.7,336.3" stroke="#ffffff" stroke-width="1.9" stroke-linecap="round" fill="none"/><path d="M494.6,381.0 L505.6,381.0 M494.6,381.0 L499.3,385.7 M494.6,381.0 L494.6,392.0 M494.6,381.0 L489.9,385.7 M494.6,381.0 L483.6,381.0 M494.6,381.0 L489.9,376.3 M494.6,381.0 L494.6,370.0 M494.6,381.0 L499.3,376.3" stroke="#ffffff" stroke-width="1.9" stroke-linecap="round" fill="none"/><path d="M474.4,418.9 C485,419 498,421 507,421.8 L507,514.5 L486,514.5 C476,510 466,500 460,480 C455,455 460,430 474.4,418.9Z" fill="#efe6d2" stroke="#3a2550" stroke-width="0.8"/><clipPath id="bodyclip"><path d="M474.4,418.9 C485,419 498,421 507,421.8 L507,514.5 L486,514.5 C476,510 466,500 460,480 C455,455 460,430 474.4,418.9Z"/></clipPath><g clip-path="url(#bodyclip)" stroke="#b8a888" stroke-width="0.6" opacity="0.8"><path d="M480,420 L455,520"/><path d="M483,420 L458,520"/><path d="M486,420 L461,520"/><path d="M489,420 L464,520"/><path d="M492,420 L467,520"/><path d="M495,420 L470,520"/><path d="M498,420 L473,520"/><path d="M501,420 L476,520"/><path d="M504,420 L479,520"/><path d="M507,420 L482,520"/><path d="M510,420 L485,520"/><path d="M513,420 L488,520"/><path d="M516,420 L491,520"/><path d="M519,420 L494,520"/><path d="M522,420 L497,520"/><path d="M525,420 L500,520"/><path d="M528,420 L503,520"/><path d="M531,420 L506,520"/><path d="M534,420 L509,520"/><path d="M537,420 L512,520"/></g><path d="M488,513 L506.6,556 L504.8,566.8 C500,560 490,545 480,530 C475,522 470,516 466.8,512.6Z" fill="#f5efe2" stroke="#3a2550" stroke-width="0.8"/><path d="M499,557 L504.8,567 L507,561 L506,554Z" fill="#8a58dc"/><path d="M448.8,500 C440,506 432,512 427,521.7 C430,532 437,545 443.4,554.2 C446,559 449,563 452.4,567.7 L454,558 C452,548 449,538 443.4,527 C452,520 462,514 472,510.8 C478,508 480,504 478,500Z" fill="#f8f3ea" stroke="#3a2550" stroke-width="0.8"/><path d="M440,525 C445,535 448,545 450,552 L446,552 C442,545 436,535 434,526Z" fill="#e6dbc4"/><path d="M443,552 L454,552 L452.4,567.7Z" fill="#8a58dc" stroke="#3a2550" stroke-width="0.6"/><path d="M363.6,403.3 C380,400 395,399 408.3,398.5 L414,399 C420,408 428,420 431.6,430.5 C432,440 430,450 427.8,457.8 C422,460 416,461.5 410.3,461.6 C403,461 397,460 392.8,457.8 C387,454 383,450 381,446 C379,441 378,436 377.2,432.5 C371,432 366,431 361.7,428.6 C358,426 357.5,422 358.7,418.9 C359,412 361,407 363.6,403.3Z" fill="#fdfbf7" stroke="#3a2550" stroke-width="0.9"/><path d="M420,428 C426,438 430,448 428,457 C422,460 414,461 408,460 C416,452 420,440 420,428Z" fill="#ebe0cb" opacity="0.9"/><ellipse cx="389.9" cy="439.3" rx="7.8" ry="7" fill="#f5a2c6"/><circle cx="394.7" cy="423.7" r="2" fill="#1a1020"/><path d="M367,412 C366,408 371,407 372,410 C372,412 370,413 369,412" fill="none" stroke="#3a2550" stroke-width="0.8"/><path d="M360.5,426 C364,427 368,426.5 371.4,424.7" fill="none" stroke="#3a2550" stroke-width="0.8"/><path d="M439,390 C441,382 444,376 448,371 C449,378 449,386 447,393Z" fill="#f3ece0" stroke="#3a2550" stroke-width="0.8"/><path d="M410.3,383.9 C413,381 417,380 420,380 C425,383 428,386 431.6,389.7 C439,391 446,393 453,395.6 C458,400 462,405 466.6,411 C472,416 478,422 482.2,428.6 C485,438 486,448 486,457.8 C486,468 486,478 486,487 C486,495 485,502 484,508.3 C475,505 466,501 458.9,496.6 C452,491 446,484 441.4,477.2 C437,471 434,466 431.6,461.6 C430,455 428.5,448 427.8,442.2 C426,434 425,426 423.9,418.9 C421,411 417,405 414,399.4 C412,395 410.5,390 410.3,383.9Z" fill="#d83478" stroke="#3a2550" stroke-width="0.9"/><path d="M436.6,296.2 L439.5,384 C434,387 427,388.5 421.4,388.8Z" fill="#f3ece0" stroke="#3a2550" stroke-width="0.9"/><g stroke="#9a6ee8" stroke-width="3"><path d="M430,338.5 L438.2,336"/><path d="M427,353.5 L438.7,350"/><path d="M424.5,369 L439,365"/><path d="M422.5,382 L439.3,377"/></g><g stroke="#f09a68" stroke-width="1.3"><path d="M432,323 L437.8,321"/><path d="M428.7,345.5 L438.5,342.5"/><path d="M425.7,361 L438.8,357"/><path d="M423.5,375.5 L439.1,371"/></g><g fill="none" stroke-linecap="round"><path d="M414,392 C425,386 440,388 452,398 C460,404 466,410 470,418" stroke="#f27ab2" stroke-width="4"/><path d="M416,402 C428,396 442,400 452,410" stroke="#c42e72" stroke-width="2.5"/><path d="M420,386 C430,382 440,384 448,390" stroke="#b8276a" stroke-width="1"/><path d="M418,396 C430,392 445,396 456,405 C462,410 468,416 474,424" stroke="#b8276a" stroke-width="1"/></g><g fill="none" stroke-linecap="round"><path d="M424,412 C432,425 428,440 436,455 C442,466 452,476 460,492" stroke="#f070a8" stroke-width="3.5"/><path d="M436,408 C446,420 440,438 450,452 C458,464 466,480 476,500" stroke="#f68cbd" stroke-width="3.2"/><path d="M450,412 C462,424 458,440 466,455 C472,468 476,486 482,504" stroke="#f070a8" stroke-width="3"/><path d="M462,418 C474,430 472,446 478,460 C482,472 482,488 484,500" stroke="#f68cbd" stroke-width="2.5"/><path d="M430,420 C440,436 434,450 444,466 C450,476 458,486 468,498" stroke="#c83274" stroke-width="2.2"/><path d="M444,418 C456,432 450,448 460,462 C466,474 472,490 480,504" stroke="#c42e72" stroke-width="2"/><path d="M458,420 C470,434 466,450 474,466 C478,478 480,492 483,506" stroke="#c42e72" stroke-width="1.8"/></g><g fill="none" stroke="#8a1c50" stroke-width="0.7" stroke-linecap="round" opacity="0.9"><path d="M424,412 C432,425 428,440 436,455 C442,466 452,476 460,492" transform="translate(2,0)"/><path d="M436,408 C446,420 440,438 450,452 C458,464 466,480 476,500" transform="translate(2,0)"/><path d="M450,412 C462,424 458,440 466,455 C472,468 476,486 482,504" transform="translate(2,0)"/><path d="M462,418 C474,430 472,446 478,460 C482,472 482,488 484,500" transform="translate(2,0)"/></g><g fill="#ffffff" opacity="0.8"><circle cx="456" cy="432" r="0.8"/><circle cx="462" cy="445" r="0.8"/><circle cx="470" cy="470" r="0.8"/><circle cx="440" cy="440" r="0.7"/></g><g fill="#9a6ae0"><circle cx="436" cy="412" r="1"/><circle cx="452" cy="440" r="1"/><circle cx="462" cy="470" r="1"/><circle cx="470" cy="455" r="1"/><circle cx="445" cy="420" r="1"/><circle cx="475" cy="485" r="1"/></g><path d="M414,398 C420,388 432,386 442,389 C450,392 456,397 460,404 C452,404 444,402 436,400 C428,399 420,400 414,404Z" fill="#e04a8a" stroke="#3a2550" stroke-width="0.8"/><path d="M418,396 C428,390 440,391 452,398" fill="none" stroke="#f27ab2" stroke-width="2"/><path d="M451,405 C460,401 468,399 474.4,398.5 C472,405 466,411 457,415 C454,412 452,409 451,405Z" fill="#efe6d0" stroke="#3a2550" stroke-width="0.8"/><g fill="none" stroke="#c3a8f3" stroke-width="6" stroke-linecap="round"><path d="M365,472 C360,484 356,494 352,506"/><path d="M384,486 C376,496 368,506 362,516"/><path d="M396,502 C388,510 380,518 374,526"/><path d="M322,506 C326,512 330,518 334,524"/><path d="M338,500 C340,508 342,514 344,520"/></g><path d="M316,458 L346,481 L361,480 C356,488 350,493 344,496 C334,499 325,500 316,501Z" fill="#ee9a1c" stroke="#4a3418" stroke-width="0.8"/><g fill="none" stroke="#4a3418" stroke-width="5.6" stroke-linecap="round"><path d="M317,472 Q317.5,451.0 322,426"/><path d="M321,472 Q322.5,452.5 328,429"/><path d="M325,474 Q328.5,456.5 336,435"/><path d="M329,476 Q333.0,460.0 341,440"/><path d="M333,478 Q338.0,464.0 347,446"/><path d="M337,481 Q343.0,467.5 353,450"/><path d="M341,483 Q347.0,471.5 357,456"/><path d="M345,485 Q351.5,475.0 362,461"/><path d="M338,492 Q346.0,487.5 358,479"/></g><g fill="none" stroke="#f2a41a" stroke-width="4" stroke-linecap="round"><path d="M317,472 Q317.5,451.0 322,426"/><path d="M321,472 Q322.5,452.5 328,429"/><path d="M325,474 Q328.5,456.5 336,435"/><path d="M329,476 Q333.0,460.0 341,440"/><path d="M333,478 Q338.0,464.0 347,446"/><path d="M337,481 Q343.0,467.5 353,450"/><path d="M341,483 Q347.0,471.5 357,456"/><path d="M345,485 Q351.5,475.0 362,461"/><path d="M338,492 Q346.0,487.5 358,479"/></g><path d="M316,470 L344,486 C338,494 328,498 316,499Z" fill="#ec8e1a"/><path d="M398.6,496.6 L410.6,496.6 M398.6,496.6 L403.7,501.7 M398.6,496.6 L398.6,508.6 M398.6,496.6 L393.5,501.7 M398.6,496.6 L386.6,496.6 M398.6,496.6 L393.5,491.5 M398.6,496.6 L398.6,484.6 M398.6,496.6 L403.7,491.5" stroke="#ffffff" stroke-width="2" stroke-linecap="round" fill="none"/><g fill="#ffffff"><circle cx="423.9" cy="481" r="2"/><circle cx="427.8" cy="500.5" r="3.5"/><circle cx="419" cy="492.8" r="1.5"/><circle cx="435.5" cy="488.9" r="1.5"/><circle cx="423" cy="515" r="1.5"/></g><path d="M403,628 L403,600 C430,590 470,585 507,590 L507,628Z" fill="#a283e8"/><g fill="#a487ea"><path d="M398.2,628 C400.5,600 403.8,573.6 403.6,553.6 C406.7,578.6 407.5,600 409.8,628Z"/><path d="M404.4,628 C406.0,600 408.3,575.2 408.3,555.2 C410.3,580.2 410.8,600 412.4,628Z"/><path d="M409.2,628 C410.7,600 413.9,578.9 414.9,558.9 C415.6,583.9 415.2,600 416.7,628Z"/><path d="M411.6,628 C413.7,600 417.9,562.7 418.9,542.7 C420.3,567.7 420.0,600 422.1,628Z"/><path d="M414.8,628 C416.9,600 421.8,589.5 423.6,569.5 C424.0,594.5 423.0,600 425.1,628Z"/><path d="M420.0,628 C421.9,600 421.9,564.7 419.0,544.7 C424.9,569.7 427.7,600 429.6,628Z"/><path d="M424.4,628 C425.8,600 426.2,565.7 424.4,545.7 C428.3,570.7 430.1,600 431.6,628Z"/><path d="M427.6,628 C429.5,600 433.6,573.2 434.8,553.2 C435.8,578.2 435.3,600 437.2,628Z"/><path d="M432.7,628 C434.5,600 437.6,575.0 437.9,555.0 C439.9,580.0 440.1,600 441.9,628Z"/><path d="M435.5,628 C437.8,600 443.1,589.9 445.1,569.9 C445.5,594.9 444.5,600 446.7,628Z"/><path d="M442.0,628 C443.7,600 444.4,569.5 442.6,549.5 C446.9,574.5 448.8,600 450.5,628Z"/><path d="M443.9,628 C446.1,600 448.5,583.0 447.5,563.0 C451.5,588.0 452.8,600 455.1,628Z"/><path d="M450.1,628 C451.5,600 454.9,588.7 456.1,568.7 C456.4,593.7 455.7,600 457.1,628Z"/><path d="M451.3,628 C453.7,600 456.6,587.3 456.0,567.3 C459.7,592.3 460.8,600 463.2,628Z"/><path d="M456.0,628 C458.2,600 461.6,562.2 461.8,542.2 C464.3,567.2 464.7,600 466.9,628Z"/><path d="M459.4,628 C461.7,600 463.9,562.6 462.6,542.6 C467.2,567.6 468.8,600 471.2,628Z"/><path d="M466.8,628 C468.3,600 468.8,563.5 467.0,543.5 C471.0,568.5 472.8,600 474.3,628Z"/><path d="M468.8,628 C470.8,600 471.6,583.9 469.5,563.9 C474.5,588.9 476.7,600 478.6,628Z"/><path d="M474.2,628 C475.8,600 478.7,565.7 479.4,545.7 C480.5,570.7 480.4,600 481.9,628Z"/><path d="M479.0,628 C480.6,600 482.1,563.5 481.2,543.5 C484.3,568.5 485.4,600 487.0,628Z"/><path d="M482.5,628 C484.2,600 487.8,589.1 488.8,569.1 C489.7,594.1 489.4,600 491.1,628Z"/><path d="M486.8,628 C489.1,600 491.4,576.3 490.4,556.3 C494.5,581.3 495.8,600 498.1,628Z"/><path d="M493.3,628 C495.0,600 499.3,573.0 501.3,553.0 C501.0,578.0 499.8,600 501.4,628Z"/><path d="M496.9,628 C498.6,600 499.8,593.2 498.4,573.2 C502.2,598.2 503.7,600 505.4,628Z"/><path d="M500.3,628 C501.9,600 504.3,572.7 504.2,552.7 C506.4,577.7 506.8,600 508.5,628Z"/><path d="M503.3,628 C505.6,600 508.4,581.2 507.7,561.2 C511.5,586.2 512.7,600 515.1,628Z"/></g><g stroke="#3a2870" stroke-width="0.7" fill="none" opacity="0.9"><path d="M408.0,628 Q408.2,608.7 409.1,589.4"/><path d="M411.0,628 Q411.2,603.4 412.3,578.9"/><path d="M415.5,628 Q414.8,604.6 411.8,581.2"/><path d="M419.9,628 Q419.1,613.3 416.2,598.5"/><path d="M424.7,628 Q424.6,612.5 424.0,597.1"/><path d="M428.3,628 Q427.3,602.8 423.5,577.6"/><path d="M433.2,628 Q433.2,604.5 433.1,581.0"/><path d="M436.3,628 Q436.2,611.8 435.5,595.6"/><path d="M439.6,628 Q439.6,603.7 439.6,579.4"/><path d="M442.2,628 Q442.0,604.4 441.1,580.7"/><path d="M446.9,628 Q446.3,609.2 443.8,590.4"/><path d="M451.7,628 Q450.7,604.0 446.8,580.1"/><path d="M454.8,628 Q453.9,607.1 450.3,586.1"/><path d="M457.8,628 Q457.6,606.1 456.8,584.2"/><path d="M460.6,628 Q460.8,606.0 461.8,584.1"/><path d="M465.6,628 Q465.5,609.7 465.4,591.4"/><path d="M469.5,628 Q468.6,603.3 464.8,578.5"/><path d="M472.1,628 Q472.0,612.9 472.0,597.8"/><path d="M477.0,628 Q476.9,601.8 476.4,575.5"/><path d="M480.7,628 Q480.1,610.6 477.9,593.3"/><path d="M485.7,628 Q485.4,602.4 484.5,576.9"/><path d="M490.0,628 Q490.0,612.8 490.2,597.5"/><path d="M494.3,628 Q494.6,611.4 495.7,594.8"/><path d="M497.7,628 Q497.9,610.1 499.0,592.1"/><path d="M502.3,628 Q502.4,606.7 502.9,585.4"/><path d="M507.0,628 Q506.9,608.7 506.4,589.3"/></g><path d="M472.0,594.0 L482.0,594.0 M472.0,594.0 L476.2,598.2 M472.0,594.0 L472.0,604.0 M472.0,594.0 L467.8,598.2 M472.0,594.0 L462.0,594.0 M472.0,594.0 L467.8,589.8 M472.0,594.0 L472.0,584.0 M472.0,594.0 L476.2,589.8" stroke="#ffffff" stroke-width="2" stroke-linecap="round" fill="none"/><path d="M316,585 L330,600 L340,610 L352,628 L316,628Z" fill="#a284ea"/><g stroke="#f0e8ff" stroke-width="1" opacity="0.7"><path d="M316,600 L332,628"/><path d="M320,596 L340,628"/></g><path d="M392,618 C395,622 398,626 400,628 L392,628Z" fill="#8660cc"/><path d="M316,535 C318,536 319,537 319.8,538 C322,535 324,533 327.5,532.2 C333,530 337,529 341,528.4 C346,526 350,524 354.4,522.6 C360,521 365,520.5 369.7,520.7 C373,522 375,523 377.4,524.5 C382,522 388,521 392.7,520.7 C397,522 401,525 404.2,528.4 C409,533 413,538 415.7,543.7 C418,550 420,556 421.5,562.9 C422.3,569 422.6,575 422.4,582 C421.5,589 420,595 417.6,601.2 C414,607 410,612 406,616.6 C400,620 394,622.5 388.9,624.2 C381,625.5 373,626 365.9,626.1 C358,625.5 351,624 344.8,622.3 C338,619.5 332,616 327.5,612.7 C323,610 319,607 316,605Z" fill="#ef8440" stroke="#3a2550" stroke-width="0.9"/><path d="M340,530 C352,523 366,521 378,525 C386,521 396,521 404,528 C396,534 386,538 376,540 C364,541 350,538 340,530Z" fill="#e06a2a"/><g stroke="#3a2550" stroke-width="3.6" stroke-linecap="round"><path d="M333,501.5 L354.4,557"/><path d="M345.7,499.6 L356.3,553"/><path d="M357.2,497.7 L353.4,547.5"/></g><g stroke="#9a6ee8" stroke-width="2.2" stroke-linecap="round"><path d="M333,501.5 L354.4,557"/><path d="M345.7,499.6 L356.3,553"/><path d="M357.2,497.7 L353.4,547.5"/></g><path d="M316,545 C324,534 338,532 349,543 C356,553 359,575 357,598 C355,610 350,618 345,622 C332,618 322,612 316,605Z" fill="#f39a5e" stroke="#b04e18" stroke-width="0.7"/><path d="M318,542 C326,536 338,536 346,545 C350,552 351,560 350,566 C340,560 328,556 318,556Z" fill="#f8b088" opacity="0.8"/><path d="M360,548 C365,537 380,533 392,540 C402,548 408,565 409,585 C410,600 404,612 395,620 C380,625 368,618 363,605 C358,590 357,565 360,548Z" fill="#f6a276" stroke="#b04e18" stroke-width="0.7"/><path d="M395,545 C402,555 406,570 407,588 C407,600 402,610 396,617 C400,600 400,575 394,555Z" fill="#e88848" opacity="0.7"/><path d="M394,522 C405,525 414,535 418,548 C422,565 423,585 418,600 C414,608 410,613 405,617 C410,600 410,570 404,550 C400,538 396,530 390,525Z" fill="#e26c28"/><g fill="none" stroke="#8a3a10" stroke-width="0.55" opacity="0.7"><path d="M400,535 C402,560 403,585 400,605"/><path d="M403,537 C405,560 406,585 403,605"/><path d="M406,539 C408,560 409,585 406,605"/><path d="M409,540 C411,560 412,585 409,605"/><path d="M412,542 C414,560 415,585 412,605"/><path d="M415,544 C417,560 418,585 415,605"/><path d="M418,546 C420,560 421,585 418,605"/></g><g fill="none" stroke="#9a4416" stroke-width="0.7" opacity="0.8"><path d="M320,565 C335,568 350,580 356,598"/><path d="M318,578 C332,582 345,595 350,615"/><path d="M322,600 L338,618"/></g><path d="M316,590 C326,596 336,606 344,622 C334,618 324,612 316,606Z" fill="#e47030" opacity="0.8"/><path d="M618,78 L636,78 C637,88 634,98 626,102 C620,104 617,100 617,94Z" fill="#b08ef8" stroke="#3a2550" stroke-width="0.8"/><path d="M588,78 L620,78 C621,88 620,96 618.5,96 C617,104 612,108 609.6,107 C606,106 605,103 604.4,101.2 C603,106 600,108 597.8,107.9 C594,107 593,102 593.3,98.2 C590,102 586,101 585.2,100.4 C583,98 584,88 588,78Z" fill="#9260e8" stroke="#3a2550" stroke-width="0.8"/><g fill="none" stroke="#6a3cb4" stroke-width="1.3" opacity="0.8"><path d="M593,80 L593.3,97"/><path d="M604,80 L604.4,100"/><path d="M614,80 L617,95"/></g><g fill="none" stroke="#b89af4" stroke-width="1.5" opacity="0.8"><path d="M589,84 L588,96"/><path d="M598,86 L598,104"/><path d="M609,84 L609,104"/><path d="M624,82 L624,98"/></g><path d="M645.2,78 L651.1,78 L651,100.4 C649,101 647,101 645.5,100Z" fill="#a27ef2" stroke="#3a2550" stroke-width="0.7"/><path d="M671,97 C680,88 690,82 705,78" fill="none" stroke="#3a2550" stroke-width="3.6"/><path d="M671,97 C680,88 690,82 705,78" fill="none" stroke="#9a6ee8" stroke-width="2.2"/><ellipse cx="678" cy="85" rx="9" ry="3" fill="#8a58dc" stroke="#3a2550" stroke-width="0.6"/><ellipse cx="691" cy="97" rx="3.5" ry="10" transform="rotate(-10 691 97)" fill="#8a58dc" stroke="#3a2550" stroke-width="0.6"/><path d="M589,152 L584,160 L592,158 L594,172 L600,162 L609,168 L606,156Z" fill="#a076ee" stroke="#3a2550" stroke-width="0.6"/><ellipse cx="614" cy="139" rx="20" ry="23" fill="#f0882a" stroke="#3a2550" stroke-width="0.9"/><path d="M594,139 C594,126 603,116 614,116 C625,116 632,122 634,130 C622,133 606,136 594,139Z" fill="#a97ff4" stroke="#3a2550" stroke-width="0.7"/><ellipse cx="604" cy="147" rx="5" ry="4" fill="#f5a870" opacity="0.8"/><path d="M633,130 C640,140 640,152 634,160 C628,156 625,148 626,140Z" fill="#a080dc" stroke="#3a2550" stroke-width="0.6"/><path d="M641.3,147 L645,163.5 L651,154 L656,165 L660,154 L666,163 L666,147Z" fill="#e65272" stroke="#3a2550" stroke-width="0.6"/><circle cx="661" cy="125" r="28" fill="#8852e0" stroke="#3a2550" stroke-width="0.9"/><path d="M633,128 C633,112 645,98 661,97 C665,97 668,98 671,101 C660,110 646,120 634,129.3Z" fill="#f07c9c" stroke="#3a2550" stroke-width="0.7"/><path d="M671,101 C683,106 689,116 689,126 C689,136 684,143 677,148 C676,132 675,116 671,101Z" fill="#f07c9c" stroke="#3a2550" stroke-width="0.7"/><g fill="none" stroke="#fba8c0" stroke-width="1" opacity="0.8"><path d="M640,118 L660,104"/><path d="M644,121 L664,106"/><path d="M680,112 L684,138"/></g><g fill="#f0e0ff" opacity="0.9"><circle cx="648" cy="132" r="0.7"/><circle cx="654" cy="128" r="0.7"/><circle cx="660" cy="134" r="0.7"/><circle cx="666" cy="126" r="0.7"/><circle cx="670" cy="138" r="0.7"/><circle cx="656" cy="142" r="0.7"/><circle cx="664" cy="144" r="0.7"/><circle cx="650" cy="138" r="0.7"/><circle cx="672" cy="130" r="0.7"/><circle cx="660" cy="120" r="0.7"/><circle cx="668" cy="116" r="0.7"/></g><ellipse cx="699" cy="197" rx="9" ry="5.5" transform="rotate(-35 699 197)" fill="#8a58e0" stroke="#3a2550" stroke-width="0.8"/><path d="M705,163 C690,160 675,162 670,168 C668,174 675,177 690,176 C678,180 670,186 672,194 C676,200 690,198 705,190Z" fill="#8a58e0" stroke="#3a2550" stroke-width="0.8"/><path d="M675,168 C685,166 695,168 705,170 M676,192 C686,188 696,186 705,185" fill="none" stroke="#a884e8" stroke-width="2"/><rect x="507" y="206" width="198" height="407" fill="#ece6fd"/><rect x="507" y="613" width="198" height="15" fill="#a98ae9"/><g fill="#c4aef4" opacity="0.8"><rect x="520" y="614" width="14" height="14"/><rect x="575" y="614" width="10" height="14"/><rect x="640" y="614" width="8" height="14"/></g><g stroke="#2c1c52" stroke-width="0.8" fill="none"><path d="M510.0,628 Q509.4,620 508.0,614"/><path d="M514.4,628 Q513.8,620 512.4,614"/><path d="M519.1,628 Q518.5,620 517.1,614"/><path d="M524.0,628 Q523.4,620 522.0,614"/><path d="M529.3,628 Q528.7,620 527.3,614"/><path d="M534.0,628 Q533.4,620 532.0,614"/><path d="M539.3,628 Q538.7,620 537.3,614"/><path d="M541.9,628 Q541.3,620 539.9,614"/><path d="M545.8,628 Q545.2,620 543.8,614"/><path d="M551.1,628 Q550.5,620 549.1,614"/><path d="M555.6,628 Q555.0,620 553.6,614"/><path d="M560.8,628 Q561.1,620 561.8,614"/><path d="M563.6,628 Q563.9,620 564.6,614"/><path d="M567.5,628 Q567.8,620 568.5,614"/><path d="M570.7,628 Q571.0,620 571.7,614"/><path d="M574.9,628 Q575.2,620 575.9,614"/><path d="M579.1,628 Q579.4,620 580.1,614"/><path d="M581.6,628 Q581.9,620 582.6,614"/><path d="M584.8,628 Q585.1,620 585.8,614"/><path d="M588.1,628 Q585.7,620 580.1,614"/><path d="M593.4,628 Q591.0,620 585.4,614"/><path d="M598.2,628 Q595.8,620 590.2,614"/><path d="M601.1,628 Q598.7,620 593.1,614"/><path d="M606.0,628 Q603.6,620 598.0,614"/><path d="M609.0,628 Q606.6,620 601.0,614"/><path d="M613.3,628 Q610.9,620 605.3,614"/><path d="M616.2,628 Q616.5,620 617.2,614"/><path d="M618.7,628 Q619.0,620 619.7,614"/><path d="M623.8,628 Q624.1,620 624.8,614"/><path d="M626.9,628 Q627.2,620 627.9,614"/><path d="M630.1,628 Q630.4,620 631.1,614"/><path d="M635.5,628 Q635.8,620 636.5,614"/><path d="M640.6,628 Q640.9,620 641.6,614"/><path d="M644.0,628 Q644.3,620 645.0,614"/><path d="M649.4,628 Q649.7,620 650.4,614"/><path d="M653.5,628 Q655.6,620 660.5,614"/><path d="M658.1,628 Q660.2,620 665.1,614"/><path d="M661.2,628 Q663.3,620 668.2,614"/><path d="M666.5,628 Q668.6,620 673.5,614"/><path d="M671.1,628 Q673.2,620 678.1,614"/><path d="M676.5,628 Q678.6,620 683.5,614"/><path d="M681.6,628 Q683.7,620 688.6,614"/><path d="M685.0,628 Q687.1,620 692.0,614"/><path d="M688.6,628 Q690.7,620 695.6,614"/><path d="M691.6,628 Q693.7,620 698.6,614"/><path d="M694.6,628 Q696.7,620 701.6,614"/><path d="M697.3,628 Q699.4,620 704.3,614"/><path d="M700.7,628 Q702.8,620 707.7,614"/><path d="M705.0,628 Q707.1,620 712.0,614"/></g><rect x="507" y="612.5" width="198" height="1.2" fill="#f8f4ff"/><g fill="none" stroke="#8648c6" stroke-width="2.5" stroke-linecap="round" stroke-linejoin="round"><path d="M534.2,183.8 L539.7,202.6"/><path d="M546.5,183.8 L552.3,202.6 M560,181.5 C553,182.5 551,187 553.5,189.5 C556,191 559.5,190.5 562.5,190"/><circle cx="569.5" cy="196.5" r="2.1"/><path d="M579.2,183.5 C586,186 592,192 591.5,199 C591,204 583,205 579,202 C576,199 578,193 582,193.5 C585,195 583,200 580,203"/><path d="M635,181 C634,195 634,206 622,210 C610,214 598,211 598,203 C598,197 605,194 614,195"/><path d="M641,190 C640,200 646,203 648,196 C648,203 654,203 655,196 C655,204 661,202 661,188"/></g><g fill="none" stroke-width="0.85" stroke-linecap="round" stroke-linejoin="round"><path d="M653.2,216.3 L652.7,219.5 M653.2,219.5 C652.7,217.0 650.9,217.0 650.4,219.5 L649.9,216.3 M650.1,219.5 L647.5,219.5 Q646.4,218.0 645.4,219.5 C644.9,217.0 642.6,217.0 642.1,219.5 L641.6,216.3 M641.8,219.5 L639.8,219.5 Q638.4,218.0 637.1,219.5 Q635.7,218.0 634.4,219.5 C633.2,222.0 631.7,219.5 632.7,217.5" stroke="#e8609e" stroke-width="1.0" fill="none"/><g transform="translate(664.80,225.10) scale(0.85)" stroke="#2a2433" stroke-width="1.05"><path d="M0.6,3.8 C0.6,2 2,1.8 2.4,3 L3.4,1 L3.6,3.5 C3.8,4.4 5,4.2 5.4,2.6"/></g><g transform="translate(656.90,225.10) scale(0.85)" stroke="#2a2433" stroke-width="1.05"><path d="M1.2,3.2 C1.2,1.6 4.2,1.6 4.2,3.2 C4.2,4.4 1.2,4.4 1.2,3.2Z"/></g><g transform="translate(649.00,225.10) scale(0.85)" stroke="#2a2433" stroke-width="1.05"><path d="M2.2,2.2 L3,3.6"/></g><g transform="translate(641.10,225.10) scale(0.85)" stroke="#2a2433" stroke-width="1.05"><path d="M0.5,3.6 C0.8,1.6 2.8,1.6 2.9,3.4 C3.2,1.8 5,1.8 5.4,3.4"/></g><g transform="translate(633.20,225.10) scale(0.85)" stroke="#2a2433" stroke-width="1.05"><path d="M3.6,1.4 C1.4,1 0.6,2.6 1.8,3.2 C0.4,3.6 0.8,5 3.6,4.6"/></g><g transform="translate(625.30,225.10) scale(0.85)" stroke="#2a2433" stroke-width="1.05"><path d="M0.8,1.6 L2.2,4.2 L3.6,1.6"/></g><g transform="translate(617.40,225.10) scale(0.85)" stroke="#2a2433" stroke-width="1.05"><path d="M3.6,1.4 C1.4,1 0.6,2.6 1.8,3.2 C0.4,3.6 0.8,5 3.6,4.6"/></g><g stroke="#9a62dc" stroke-width="1.1"><g transform="translate(666.08,234.98) scale(0.66)"><path d="M1.8,0.6 L2.2,4.6"/></g></g><g stroke="#9a62dc" stroke-width="1.1"><g transform="translate(658.18,234.98) scale(0.66)"><path d="M0.9,0.7 C1.4,1.6 2.6,1.6 3.2,0.5 M0.9,0.7 L1.9,4.6"/></g></g><g stroke="#9a62dc" stroke-width="1.1"><g transform="translate(650.28,234.98) scale(0.66)"><path d="M0.6,0.8 L1.2,1.6 L1.9,0.7 L2.6,1.6 L3.4,0.5 M0.6,0.8 L1.6,4.6"/></g></g><g stroke="#9a62dc" stroke-width="1.1"><g transform="translate(642.38,234.98) scale(0.66)"><path d="M3.3,0.6 C1.2,0.4 1.0,2.0 2.6,2.1 C0.6,2.2 0.8,4.2 3.4,3.9 M2.6,3.9 L2.8,4.6"/></g></g><g stroke="#2a2433" stroke-width="1.1"><g transform="translate(634.48,234.98) scale(0.66)"><path d="M2,0.6 C0.4,2.2 0.6,4.5 2,4.5 C3.4,4.5 3.6,2.2 2,0.6Z"/></g></g><g stroke="#2a2433" stroke-width="1.1"><g transform="translate(626.58,234.98) scale(0.66)"><path d="M0.8,0.8 C1.0,1.9 2.8,2.0 3.1,0.8 M3.1,0.8 L1.6,4.6"/></g></g><g stroke="#9a62dc" stroke-width="1.1"><g transform="translate(618.68,234.98) scale(0.66)"><path d="M0.6,0.6 L2,4.6 L3.4,0.6"/></g></g><g stroke="#2a2433" stroke-width="1.1"><g transform="translate(666.08,242.38) scale(0.66)"><path d="M0.6,4.6 L2,0.6 L3.4,4.6"/></g></g><g stroke="#2a2433" stroke-width="1.1"><g transform="translate(658.18,242.38) scale(0.66)"><path d="M2.6,0.6 C0.8,0.6 0.8,2.6 2.6,2.2 M2.6,0.6 L2.6,4.6"/></g></g><g stroke="#2a2433" stroke-width="1.1"><g transform="translate(649.13,242.38) scale(0.66)"><path d="M1.8,0.6 L2.2,4.6"/></g><g transform="translate(651.43,242.38) scale(0.66)"><circle cx="2" cy="3" r="0.75" fill="#2a2433" stroke="none"/></g></g><g stroke="#2a2433" stroke-width="1.1"><g transform="translate(641.23,242.38) scale(0.66)"><path d="M1.8,0.6 L2.2,4.6"/></g><g transform="translate(643.53,242.38) scale(0.66)"><path d="M1.8,0.6 L2.2,4.6"/></g></g><g stroke="#9a62dc" stroke-width="1.1"><g transform="translate(633.33,242.38) scale(0.66)"><path d="M1.8,0.6 L2.2,4.6"/></g><g transform="translate(635.63,242.38) scale(0.66)"><path d="M0.9,0.7 C1.4,1.6 2.6,1.6 3.2,0.5 M0.9,0.7 L1.9,4.6"/></g></g><g stroke="#9a62dc" stroke-width="1.1"><g transform="translate(625.43,242.38) scale(0.66)"><path d="M1.8,0.6 L2.2,4.6"/></g><g transform="translate(627.73,242.38) scale(0.66)"><path d="M0.6,0.8 L1.2,1.6 L1.9,0.7 L2.6,1.6 L3.4,0.5 M0.6,0.8 L1.6,4.6"/></g></g><g stroke="#9a62dc" stroke-width="1.1"><g transform="translate(617.53,242.38) scale(0.66)"><path d="M1.8,0.6 L2.2,4.6"/></g><g transform="translate(619.83,242.38) scale(0.66)"><path d="M3.3,0.6 C1.2,0.4 1.0,2.0 2.6,2.1 C0.6,2.2 0.8,4.2 3.4,3.9 M2.6,3.9 L2.8,4.6"/></g></g><g stroke="#2a2433" stroke-width="1.1"><g transform="translate(664.93,249.58) scale(0.66)"><path d="M1.8,0.6 L2.2,4.6"/></g><g transform="translate(667.23,249.58) scale(0.66)"><path d="M2,0.6 C0.4,2.2 0.6,4.5 2,4.5 C3.4,4.5 3.6,2.2 2,0.6Z"/></g></g><g stroke="#2a2433" stroke-width="1.1"><g transform="translate(657.03,249.58) scale(0.66)"><path d="M1.8,0.6 L2.2,4.6"/></g><g transform="translate(659.33,249.58) scale(0.66)"><path d="M0.8,0.8 C1.0,1.9 2.8,2.0 3.1,0.8 M3.1,0.8 L1.6,4.6"/></g></g><g stroke="#2a2433" stroke-width="1.1"><g transform="translate(649.13,249.58) scale(0.66)"><path d="M1.8,0.6 L2.2,4.6"/></g><g transform="translate(651.43,249.58) scale(0.66)"><path d="M0.6,0.6 L2,4.6 L3.4,0.6"/></g></g><g stroke="#2a2433" stroke-width="1.1"><g transform="translate(641.23,249.58) scale(0.66)"><path d="M1.8,0.6 L2.2,4.6"/></g><g transform="translate(643.53,249.58) scale(0.66)"><path d="M0.6,4.6 L2,0.6 L3.4,4.6"/></g></g><g stroke="#2a2433" stroke-width="1.1"><g transform="translate(633.33,249.58) scale(0.66)"><path d="M1.8,0.6 L2.2,4.6"/></g><g transform="translate(635.63,249.58) scale(0.66)"><path d="M2.6,0.6 C0.8,0.6 0.8,2.6 2.6,2.2 M2.6,0.6 L2.6,4.6"/></g></g><g stroke="#2a2433" stroke-width="1.1"><g transform="translate(625.43,249.58) scale(0.66)"><path d="M0.9,0.7 C1.4,1.6 2.6,1.6 3.2,0.5 M0.9,0.7 L1.9,4.6"/></g><g transform="translate(627.73,249.58) scale(0.66)"><circle cx="2" cy="3" r="0.75" fill="#2a2433" stroke="none"/></g></g><g stroke="#9a62dc" stroke-width="1.1"><g transform="translate(617.53,249.58) scale(0.66)"><path d="M0.9,0.7 C1.4,1.6 2.6,1.6 3.2,0.5 M0.9,0.7 L1.9,4.6"/></g><g transform="translate(619.83,249.58) scale(0.66)"><path d="M1.8,0.6 L2.2,4.6"/></g></g><g stroke="#2a2433" stroke-width="1.1"><g transform="translate(664.93,256.78) scale(0.66)"><path d="M0.9,0.7 C1.4,1.6 2.6,1.6 3.2,0.5 M0.9,0.7 L1.9,4.6"/></g><g transform="translate(667.23,256.78) scale(0.66)"><path d="M0.9,0.7 C1.4,1.6 2.6,1.6 3.2,0.5 M0.9,0.7 L1.9,4.6"/></g></g><g stroke="#2a2433" stroke-width="1.1"><g transform="translate(657.03,256.78) scale(0.66)"><path d="M0.9,0.7 C1.4,1.6 2.6,1.6 3.2,0.5 M0.9,0.7 L1.9,4.6"/></g><g transform="translate(659.33,256.78) scale(0.66)"><path d="M0.6,0.8 L1.2,1.6 L1.9,0.7 L2.6,1.6 L3.4,0.5 M0.6,0.8 L1.6,4.6"/></g></g><g stroke="#2a2433" stroke-width="1.1"><g transform="translate(649.13,256.78) scale(0.66)"><path d="M0.9,0.7 C1.4,1.6 2.6,1.6 3.2,0.5 M0.9,0.7 L1.9,4.6"/></g><g transform="translate(651.43,256.78) scale(0.66)"><path d="M3.3,0.6 C1.2,0.4 1.0,2.0 2.6,2.1 C0.6,2.2 0.8,4.2 3.4,3.9 M2.6,3.9 L2.8,4.6"/></g></g><g stroke="#2a2433" stroke-width="1.1"><g transform="translate(641.23,256.78) scale(0.66)"><path d="M0.9,0.7 C1.4,1.6 2.6,1.6 3.2,0.5 M0.9,0.7 L1.9,4.6"/></g><g transform="translate(643.53,256.78) scale(0.66)"><path d="M2,0.6 C0.4,2.2 0.6,4.5 2,4.5 C3.4,4.5 3.6,2.2 2,0.6Z"/></g></g><g stroke="#2a2433" stroke-width="1.1"><g transform="translate(633.33,256.78) scale(0.66)"><path d="M0.9,0.7 C1.4,1.6 2.6,1.6 3.2,0.5 M0.9,0.7 L1.9,4.6"/></g><g transform="translate(635.63,256.78) scale(0.66)"><path d="M0.8,0.8 C1.0,1.9 2.8,2.0 3.1,0.8 M3.1,0.8 L1.6,4.6"/></g></g><g stroke="#2a2433" stroke-width="1.1"><g transform="translate(625.43,256.78) scale(0.66)"><path d="M0.9,0.7 C1.4,1.6 2.6,1.6 3.2,0.5 M0.9,0.7 L1.9,4.6"/></g><g transform="translate(627.73,256.78) scale(0.66)"><path d="M0.6,0.6 L2,4.6 L3.4,0.6"/></g></g><g stroke="#9a62dc" stroke-width="1.1"><g transform="translate(617.53,256.78) scale(0.66)"><path d="M0.9,0.7 C1.4,1.6 2.6,1.6 3.2,0.5 M0.9,0.7 L1.9,4.6"/></g><g transform="translate(619.83,256.78) scale(0.66)"><path d="M0.6,4.6 L2,0.6 L3.4,4.6"/></g></g><g stroke="#2a2433" stroke-width="1.1"><g transform="translate(664.93,263.98) scale(0.66)"><path d="M0.9,0.7 C1.4,1.6 2.6,1.6 3.2,0.5 M0.9,0.7 L1.9,4.6"/></g><g transform="translate(667.23,263.98) scale(0.66)"><path d="M2.6,0.6 C0.8,0.6 0.8,2.6 2.6,2.2 M2.6,0.6 L2.6,4.6"/></g></g><g stroke="#2a2433" stroke-width="1.1"><g transform="translate(657.03,263.98) scale(0.66)"><path d="M0.6,0.8 L1.2,1.6 L1.9,0.7 L2.6,1.6 L3.4,0.5 M0.6,0.8 L1.6,4.6"/></g><g transform="translate(659.33,263.98) scale(0.66)"><circle cx="2" cy="3" r="0.75" fill="#2a2433" stroke="none"/></g></g><g stroke="#2a2433" stroke-width="1.1"><g transform="translate(649.13,263.98) scale(0.66)"><path d="M0.6,0.8 L1.2,1.6 L1.9,0.7 L2.6,1.6 L3.4,0.5 M0.6,0.8 L1.6,4.6"/></g><g transform="translate(651.43,263.98) scale(0.66)"><path d="M1.8,0.6 L2.2,4.6"/></g></g><path d="M585.2,216.3 L584.7,219.5 M585.2,219.5 C584.2,221.0 582.6,216.5 582.6,219.5 C581.6,221.0 580.2,216.5 580.2,219.5 Q578.6,218.0 577.0,219.5 Q575.9,218.0 574.8,219.5 C573.8,221.0 572.3,216.5 572.3,219.5 C571.8,217.0 569.4,217.0 568.9,219.5 Q567.8,218.0 566.8,219.5 Q565.5,218.0 564.2,219.5 C563.2,222.0 561.7,219.5 562.7,217.5" stroke="#e8609e" stroke-width="1.0" fill="none"/><g transform="translate(595.80,225.10) scale(0.85)" stroke="#2a2433" stroke-width="1.05"><path d="M0.6,3.8 C0.6,2 2,1.8 2.4,3 L3.4,1 L3.6,3.5 C3.8,4.4 5,4.2 5.4,2.6"/></g><g transform="translate(587.90,225.10) scale(0.85)" stroke="#2a2433" stroke-width="1.05"><path d="M1.2,3.2 C1.2,1.6 4.2,1.6 4.2,3.2 C4.2,4.4 1.2,4.4 1.2,3.2Z"/></g><g transform="translate(580.00,225.10) scale(0.85)" stroke="#2a2433" stroke-width="1.05"><path d="M2.2,2.2 L3,3.6"/></g><g transform="translate(572.10,225.10) scale(0.85)" stroke="#2a2433" stroke-width="1.05"><path d="M0.5,3.6 C0.8,1.6 2.8,1.6 2.9,3.4 C3.2,1.8 5,1.8 5.4,3.4"/></g><g transform="translate(564.20,225.10) scale(0.85)" stroke="#2a2433" stroke-width="1.05"><path d="M3.6,1.4 C1.4,1 0.6,2.6 1.8,3.2 C0.4,3.6 0.8,5 3.6,4.6"/></g><g transform="translate(556.30,225.10) scale(0.85)" stroke="#2a2433" stroke-width="1.05"><path d="M0.8,1.6 L2.2,4.2 L3.6,1.6"/></g><g transform="translate(548.40,225.10) scale(0.85)" stroke="#2a2433" stroke-width="1.05"><path d="M3.6,1.4 C1.4,1 0.6,2.6 1.8,3.2 C0.4,3.6 0.8,5 3.6,4.6"/></g><g stroke="#2a2433" stroke-width="1.1"><g transform="translate(573.38,234.98) scale(0.66)"><path d="M1.8,0.6 L2.2,4.6"/></g></g><g stroke="#2a2433" stroke-width="1.1"><g transform="translate(565.48,234.98) scale(0.66)"><path d="M0.9,0.7 C1.4,1.6 2.6,1.6 3.2,0.5 M0.9,0.7 L1.9,4.6"/></g></g><g stroke="#2a2433" stroke-width="1.1"><g transform="translate(557.58,234.98) scale(0.66)"><path d="M0.6,0.8 L1.2,1.6 L1.9,0.7 L2.6,1.6 L3.4,0.5 M0.6,0.8 L1.6,4.6"/></g></g><g stroke="#9a62dc" stroke-width="1.1"><g transform="translate(549.68,234.98) scale(0.66)"><path d="M3.3,0.6 C1.2,0.4 1.0,2.0 2.6,2.1 C0.6,2.2 0.8,4.2 3.4,3.9 M2.6,3.9 L2.8,4.6"/></g></g><g stroke="#2a2433" stroke-width="1.1"><g transform="translate(597.08,242.38) scale(0.66)"><path d="M2,0.6 C0.4,2.2 0.6,4.5 2,4.5 C3.4,4.5 3.6,2.2 2,0.6Z"/></g></g><g stroke="#2a2433" stroke-width="1.1"><g transform="translate(589.18,242.38) scale(0.66)"><path d="M0.8,0.8 C1.0,1.9 2.8,2.0 3.1,0.8 M3.1,0.8 L1.6,4.6"/></g></g><g stroke="#2a2433" stroke-width="1.1"><g transform="translate(581.28,242.38) scale(0.66)"><path d="M0.6,0.6 L2,4.6 L3.4,0.6"/></g></g><g stroke="#2a2433" stroke-width="1.1"><g transform="translate(573.38,242.38) scale(0.66)"><path d="M0.6,4.6 L2,0.6 L3.4,4.6"/></g></g><g stroke="#2a2433" stroke-width="1.1"><g transform="translate(565.48,242.38) scale(0.66)"><path d="M2.6,0.6 C0.8,0.6 0.8,2.6 2.6,2.2 M2.6,0.6 L2.6,4.6"/></g></g><g stroke="#2a2433" stroke-width="1.1"><g transform="translate(556.43,242.38) scale(0.66)"><path d="M1.8,0.6 L2.2,4.6"/></g><g transform="translate(558.73,242.38) scale(0.66)"><circle cx="2" cy="3" r="0.75" fill="#2a2433" stroke="none"/></g></g><g stroke="#9a62dc" stroke-width="1.1"><g transform="translate(548.53,242.38) scale(0.66)"><path d="M1.8,0.6 L2.2,4.6"/></g><g transform="translate(550.83,242.38) scale(0.66)"><path d="M1.8,0.6 L2.2,4.6"/></g></g><g stroke="#2a2433" stroke-width="1.1"><g transform="translate(595.93,249.58) scale(0.66)"><path d="M1.8,0.6 L2.2,4.6"/></g><g transform="translate(598.23,249.58) scale(0.66)"><path d="M0.9,0.7 C1.4,1.6 2.6,1.6 3.2,0.5 M0.9,0.7 L1.9,4.6"/></g></g><g stroke="#2a2433" stroke-width="1.1"><g transform="translate(588.03,249.58) scale(0.66)"><path d="M1.8,0.6 L2.2,4.6"/></g><g transform="translate(590.33,249.58) scale(0.66)"><path d="M0.6,0.8 L1.2,1.6 L1.9,0.7 L2.6,1.6 L3.4,0.5 M0.6,0.8 L1.6,4.6"/></g></g><g stroke="#2a2433" stroke-width="1.1"><g transform="translate(580.13,249.58) scale(0.66)"><path d="M1.8,0.6 L2.2,4.6"/></g><g transform="translate(582.43,249.58) scale(0.66)"><path d="M3.3,0.6 C1.2,0.4 1.0,2.0 2.6,2.1 C0.6,2.2 0.8,4.2 3.4,3.9 M2.6,3.9 L2.8,4.6"/></g></g><g stroke="#2a2433" stroke-width="1.1"><g transform="translate(572.23,249.58) scale(0.66)"><path d="M1.8,0.6 L2.2,4.6"/></g><g transform="translate(574.53,249.58) scale(0.66)"><path d="M2,0.6 C0.4,2.2 0.6,4.5 2,4.5 C3.4,4.5 3.6,2.2 2,0.6Z"/></g></g><g stroke="#2a2433" stroke-width="1.1"><g transform="translate(564.33,249.58) scale(0.66)"><path d="M1.8,0.6 L2.2,4.6"/></g><g transform="translate(566.63,249.58) scale(0.66)"><path d="M0.8,0.8 C1.0,1.9 2.8,2.0 3.1,0.8 M3.1,0.8 L1.6,4.6"/></g></g><g stroke="#2a2433" stroke-width="1.1"><g transform="translate(556.43,249.58) scale(0.66)"><path d="M1.8,0.6 L2.2,4.6"/></g><g transform="translate(558.73,249.58) scale(0.66)"><path d="M0.6,0.6 L2,4.6 L3.4,0.6"/></g></g><g stroke="#9a62dc" stroke-width="1.1"><g transform="translate(548.53,249.58) scale(0.66)"><path d="M1.8,0.6 L2.2,4.6"/></g><g transform="translate(550.83,249.58) scale(0.66)"><path d="M0.6,4.6 L2,0.6 L3.4,4.6"/></g></g><g stroke="#2a2433" stroke-width="1.1"><g transform="translate(595.93,256.78) scale(0.66)"><path d="M1.8,0.6 L2.2,4.6"/></g><g transform="translate(598.23,256.78) scale(0.66)"><path d="M2.6,0.6 C0.8,0.6 0.8,2.6 2.6,2.2 M2.6,0.6 L2.6,4.6"/></g></g><g stroke="#2a2433" stroke-width="1.1"><g transform="translate(588.03,256.78) scale(0.66)"><path d="M0.9,0.7 C1.4,1.6 2.6,1.6 3.2,0.5 M0.9,0.7 L1.9,4.6"/></g><g transform="translate(590.33,256.78) scale(0.66)"><circle cx="2" cy="3" r="0.75" fill="#2a2433" stroke="none"/></g></g><g stroke="#2a2433" stroke-width="1.1"><g transform="translate(580.13,256.78) scale(0.66)"><path d="M0.9,0.7 C1.4,1.6 2.6,1.6 3.2,0.5 M0.9,0.7 L1.9,4.6"/></g><g transform="translate(582.43,256.78) scale(0.66)"><path d="M1.8,0.6 L2.2,4.6"/></g></g><g stroke="#2a2433" stroke-width="1.1"><g transform="translate(572.23,256.78) scale(0.66)"><path d="M0.9,0.7 C1.4,1.6 2.6,1.6 3.2,0.5 M0.9,0.7 L1.9,4.6"/></g><g transform="translate(574.53,256.78) scale(0.66)"><path d="M0.9,0.7 C1.4,1.6 2.6,1.6 3.2,0.5 M0.9,0.7 L1.9,4.6"/></g></g><g stroke="#2a2433" stroke-width="1.1"><g transform="translate(564.33,256.78) scale(0.66)"><path d="M0.9,0.7 C1.4,1.6 2.6,1.6 3.2,0.5 M0.9,0.7 L1.9,4.6"/></g><g transform="translate(566.63,256.78) scale(0.66)"><path d="M0.6,0.8 L1.2,1.6 L1.9,0.7 L2.6,1.6 L3.4,0.5 M0.6,0.8 L1.6,4.6"/></g></g><g stroke="#2a2433" stroke-width="1.1"><g transform="translate(556.43,256.78) scale(0.66)"><path d="M0.9,0.7 C1.4,1.6 2.6,1.6 3.2,0.5 M0.9,0.7 L1.9,4.6"/></g><g transform="translate(558.73,256.78) scale(0.66)"><path d="M3.3,0.6 C1.2,0.4 1.0,2.0 2.6,2.1 C0.6,2.2 0.8,4.2 3.4,3.9 M2.6,3.9 L2.8,4.6"/></g></g><g stroke="#9a62dc" stroke-width="1.1"><g transform="translate(548.53,256.78) scale(0.66)"><path d="M0.9,0.7 C1.4,1.6 2.6,1.6 3.2,0.5 M0.9,0.7 L1.9,4.6"/></g><g transform="translate(550.83,256.78) scale(0.66)"><path d="M2,0.6 C0.4,2.2 0.6,4.5 2,4.5 C3.4,4.5 3.6,2.2 2,0.6Z"/></g></g><g stroke="#2a2433" stroke-width="1.1"><g transform="translate(595.93,263.98) scale(0.66)"><path d="M0.9,0.7 C1.4,1.6 2.6,1.6 3.2,0.5 M0.9,0.7 L1.9,4.6"/></g><g transform="translate(598.23,263.98) scale(0.66)"><path d="M0.8,0.8 C1.0,1.9 2.8,2.0 3.1,0.8 M3.1,0.8 L1.6,4.6"/></g></g><g stroke="#2a2433" stroke-width="1.1"><g transform="translate(588.03,263.98) scale(0.66)"><path d="M0.9,0.7 C1.4,1.6 2.6,1.6 3.2,0.5 M0.9,0.7 L1.9,4.6"/></g><g transform="translate(590.33,263.98) scale(0.66)"><path d="M0.6,0.6 L2,4.6 L3.4,0.6"/></g></g><g stroke="#2a2433" stroke-width="1.1"><g transform="translate(580.13,263.98) scale(0.66)"><path d="M0.9,0.7 C1.4,1.6 2.6,1.6 3.2,0.5 M0.9,0.7 L1.9,4.6"/></g><g transform="translate(582.43,263.98) scale(0.66)"><path d="M0.6,4.6 L2,0.6 L3.4,4.6"/></g></g><g stroke="#2a2433" stroke-width="1.1"><g transform="translate(572.23,263.98) scale(0.66)"><path d="M0.9,0.7 C1.4,1.6 2.6,1.6 3.2,0.5 M0.9,0.7 L1.9,4.6"/></g><g transform="translate(574.53,263.98) scale(0.66)"><path d="M2.6,0.6 C0.8,0.6 0.8,2.6 2.6,2.2 M2.6,0.6 L2.6,4.6"/></g></g><g stroke="#2a2433" stroke-width="1.1"><g transform="translate(564.33,263.98) scale(0.66)"><path d="M0.6,0.8 L1.2,1.6 L1.9,0.7 L2.6,1.6 L3.4,0.5 M0.6,0.8 L1.6,4.6"/></g><g transform="translate(566.63,263.98) scale(0.66)"><circle cx="2" cy="3" r="0.75" fill="#2a2433" stroke="none"/></g></g><g stroke="#2a2433" stroke-width="1.1"><g transform="translate(556.43,263.98) scale(0.66)"><path d="M0.6,0.8 L1.2,1.6 L1.9,0.7 L2.6,1.6 L3.4,0.5 M0.6,0.8 L1.6,4.6"/></g><g transform="translate(558.73,263.98) scale(0.66)"><path d="M1.8,0.6 L2.2,4.6"/></g></g><path d="M649.7,281.9 L649.2,285.1 M649.7,285.1 C648.7,286.6 646.5,282.1 646.5,285.1 Q645.3,283.6 644.1,285.1 Q642.5,283.6 641.0,285.1 Q639.9,283.6 638.8,285.1 C636.7,287.6 635.2,285.1 636.2,283.1" stroke="#e8609e" stroke-width="1.0" fill="none"/><g transform="translate(664.80,290.70) scale(0.85)" stroke="#2a2433" stroke-width="1.05"><path d="M0.6,3.8 C0.6,2 2,1.8 2.4,3 L3.4,1 L3.6,3.5 C3.8,4.4 5,4.2 5.4,2.6"/></g><g transform="translate(656.90,290.70) scale(0.85)" stroke="#2a2433" stroke-width="1.05"><path d="M1.2,3.2 C1.2,1.6 4.2,1.6 4.2,3.2 C4.2,4.4 1.2,4.4 1.2,3.2Z"/></g><g transform="translate(649.00,290.70) scale(0.85)" stroke="#2a2433" stroke-width="1.05"><path d="M2.2,2.2 L3,3.6"/></g><g transform="translate(641.10,290.70) scale(0.85)" stroke="#2a2433" stroke-width="1.05"><path d="M0.5,3.6 C0.8,1.6 2.8,1.6 2.9,3.4 C3.2,1.8 5,1.8 5.4,3.4"/></g><g transform="translate(633.20,290.70) scale(0.85)" stroke="#2a2433" stroke-width="1.05"><path d="M3.6,1.4 C1.4,1 0.6,2.6 1.8,3.2 C0.4,3.6 0.8,5 3.6,4.6"/></g><g transform="translate(625.30,290.70) scale(0.85)" stroke="#2a2433" stroke-width="1.05"><path d="M0.8,1.6 L2.2,4.2 L3.6,1.6"/></g><g transform="translate(617.40,290.70) scale(0.85)" stroke="#2a2433" stroke-width="1.05"><path d="M3.6,1.4 C1.4,1 0.6,2.6 1.8,3.2 C0.4,3.6 0.8,5 3.6,4.6"/></g><g stroke="#9a62dc" stroke-width="1.1"><g transform="translate(618.68,300.58) scale(0.66)"><path d="M1.8,0.6 L2.2,4.6"/></g></g><g stroke="#2a2433" stroke-width="1.1"><g transform="translate(666.08,307.98) scale(0.66)"><path d="M0.9,0.7 C1.4,1.6 2.6,1.6 3.2,0.5 M0.9,0.7 L1.9,4.6"/></g></g><g stroke="#2a2433" stroke-width="1.1"><g transform="translate(658.18,307.98) scale(0.66)"><path d="M0.6,0.8 L1.2,1.6 L1.9,0.7 L2.6,1.6 L3.4,0.5 M0.6,0.8 L1.6,4.6"/></g></g><g stroke="#2a2433" stroke-width="1.1"><g transform="translate(650.28,307.98) scale(0.66)"><path d="M3.3,0.6 C1.2,0.4 1.0,2.0 2.6,2.1 C0.6,2.2 0.8,4.2 3.4,3.9 M2.6,3.9 L2.8,4.6"/></g></g><g stroke="#2a2433" stroke-width="1.1"><g transform="translate(642.38,307.98) scale(0.66)"><path d="M2,0.6 C0.4,2.2 0.6,4.5 2,4.5 C3.4,4.5 3.6,2.2 2,0.6Z"/></g></g><g stroke="#2a2433" stroke-width="1.1"><g transform="translate(634.48,307.98) scale(0.66)"><path d="M0.8,0.8 C1.0,1.9 2.8,2.0 3.1,0.8 M3.1,0.8 L1.6,4.6"/></g></g><g stroke="#2a2433" stroke-width="1.1"><g transform="translate(626.58,307.98) scale(0.66)"><path d="M0.6,0.6 L2,4.6 L3.4,0.6"/></g></g><g stroke="#9a62dc" stroke-width="1.1"><g transform="translate(618.68,307.98) scale(0.66)"><path d="M0.6,4.6 L2,0.6 L3.4,4.6"/></g></g><g stroke="#2a2433" stroke-width="1.1"><g transform="translate(666.08,315.18) scale(0.66)"><path d="M2.6,0.6 C0.8,0.6 0.8,2.6 2.6,2.2 M2.6,0.6 L2.6,4.6"/></g></g><g stroke="#2a2433" stroke-width="1.1"><g transform="translate(657.03,315.18) scale(0.66)"><path d="M1.8,0.6 L2.2,4.6"/></g><g transform="translate(659.33,315.18) scale(0.66)"><circle cx="2" cy="3" r="0.75" fill="#2a2433" stroke="none"/></g></g><g stroke="#2a2433" stroke-width="1.1"><g transform="translate(649.13,315.18) scale(0.66)"><path d="M1.8,0.6 L2.2,4.6"/></g><g transform="translate(651.43,315.18) scale(0.66)"><path d="M1.8,0.6 L2.2,4.6"/></g></g><g stroke="#2a2433" stroke-width="1.1"><g transform="translate(641.23,315.18) scale(0.66)"><path d="M1.8,0.6 L2.2,4.6"/></g><g transform="translate(643.53,315.18) scale(0.66)"><path d="M0.9,0.7 C1.4,1.6 2.6,1.6 3.2,0.5 M0.9,0.7 L1.9,4.6"/></g></g><g stroke="#2a2433" stroke-width="1.1"><g transform="translate(633.33,315.18) scale(0.66)"><path d="M1.8,0.6 L2.2,4.6"/></g><g transform="translate(635.63,315.18) scale(0.66)"><path d="M0.6,0.8 L1.2,1.6 L1.9,0.7 L2.6,1.6 L3.4,0.5 M0.6,0.8 L1.6,4.6"/></g></g><g stroke="#9a62dc" stroke-width="1.1"><g transform="translate(625.43,315.18) scale(0.66)"><path d="M1.8,0.6 L2.2,4.6"/></g><g transform="translate(627.73,315.18) scale(0.66)"><path d="M3.3,0.6 C1.2,0.4 1.0,2.0 2.6,2.1 C0.6,2.2 0.8,4.2 3.4,3.9 M2.6,3.9 L2.8,4.6"/></g></g><g stroke="#9a62dc" stroke-width="1.1"><g transform="translate(617.53,315.18) scale(0.66)"><path d="M1.8,0.6 L2.2,4.6"/></g><g transform="translate(619.83,315.18) scale(0.66)"><path d="M2,0.6 C0.4,2.2 0.6,4.5 2,4.5 C3.4,4.5 3.6,2.2 2,0.6Z"/></g></g><g stroke="#2a2433" stroke-width="1.1"><g transform="translate(664.93,322.38) scale(0.66)"><path d="M1.8,0.6 L2.2,4.6"/></g><g transform="translate(667.23,322.38) scale(0.66)"><path d="M0.8,0.8 C1.0,1.9 2.8,2.0 3.1,0.8 M3.1,0.8 L1.6,4.6"/></g></g><g stroke="#2a2433" stroke-width="1.1"><g transform="translate(657.03,322.38) scale(0.66)"><path d="M1.8,0.6 L2.2,4.6"/></g><g transform="translate(659.33,322.38) scale(0.66)"><path d="M0.6,0.6 L2,4.6 L3.4,0.6"/></g></g><g stroke="#2a2433" stroke-width="1.1"><g transform="translate(649.13,322.38) scale(0.66)"><path d="M1.8,0.6 L2.2,4.6"/></g><g transform="translate(651.43,322.38) scale(0.66)"><path d="M0.6,4.6 L2,0.6 L3.4,4.6"/></g></g><g stroke="#2a2433" stroke-width="1.1"><g transform="translate(641.23,322.38) scale(0.66)"><path d="M1.8,0.6 L2.2,4.6"/></g><g transform="translate(643.53,322.38) scale(0.66)"><path d="M2.6,0.6 C0.8,0.6 0.8,2.6 2.6,2.2 M2.6,0.6 L2.6,4.6"/></g></g><g stroke="#2a2433" stroke-width="1.1"><g transform="translate(633.33,322.38) scale(0.66)"><path d="M0.9,0.7 C1.4,1.6 2.6,1.6 3.2,0.5 M0.9,0.7 L1.9,4.6"/></g><g transform="translate(635.63,322.38) scale(0.66)"><circle cx="2" cy="3" r="0.75" fill="#2a2433" stroke="none"/></g></g><g stroke="#2a2433" stroke-width="1.1"><g transform="translate(625.43,322.38) scale(0.66)"><path d="M0.9,0.7 C1.4,1.6 2.6,1.6 3.2,0.5 M0.9,0.7 L1.9,4.6"/></g><g transform="translate(627.73,322.38) scale(0.66)"><path d="M1.8,0.6 L2.2,4.6"/></g></g><g stroke="#9a62dc" stroke-width="1.1"><g transform="translate(617.53,322.38) scale(0.66)"><path d="M0.9,0.7 C1.4,1.6 2.6,1.6 3.2,0.5 M0.9,0.7 L1.9,4.6"/></g><g transform="translate(619.83,322.38) scale(0.66)"><path d="M0.9,0.7 C1.4,1.6 2.6,1.6 3.2,0.5 M0.9,0.7 L1.9,4.6"/></g></g><g stroke="#2a2433" stroke-width="1.1"><g transform="translate(664.93,329.58) scale(0.66)"><path d="M0.9,0.7 C1.4,1.6 2.6,1.6 3.2,0.5 M0.9,0.7 L1.9,4.6"/></g><g transform="translate(667.23,329.58) scale(0.66)"><path d="M0.6,0.8 L1.2,1.6 L1.9,0.7 L2.6,1.6 L3.4,0.5 M0.6,0.8 L1.6,4.6"/></g></g><g stroke="#2a2433" stroke-width="1.1"><g transform="translate(657.03,329.58) scale(0.66)"><path d="M0.9,0.7 C1.4,1.6 2.6,1.6 3.2,0.5 M0.9,0.7 L1.9,4.6"/></g><g transform="translate(659.33,329.58) scale(0.66)"><path d="M3.3,0.6 C1.2,0.4 1.0,2.0 2.6,2.1 C0.6,2.2 0.8,4.2 3.4,3.9 M2.6,3.9 L2.8,4.6"/></g></g><g stroke="#2a2433" stroke-width="1.1"><g transform="translate(649.13,329.58) scale(0.66)"><path d="M0.9,0.7 C1.4,1.6 2.6,1.6 3.2,0.5 M0.9,0.7 L1.9,4.6"/></g><g transform="translate(651.43,329.58) scale(0.66)"><path d="M2,0.6 C0.4,2.2 0.6,4.5 2,4.5 C3.4,4.5 3.6,2.2 2,0.6Z"/></g></g><g stroke="#2a2433" stroke-width="1.1"><g transform="translate(641.23,329.58) scale(0.66)"><path d="M0.9,0.7 C1.4,1.6 2.6,1.6 3.2,0.5 M0.9,0.7 L1.9,4.6"/></g><g transform="translate(643.53,329.58) scale(0.66)"><path d="M0.8,0.8 C1.0,1.9 2.8,2.0 3.1,0.8 M3.1,0.8 L1.6,4.6"/></g></g><g stroke="#2a2433" stroke-width="1.1"><g transform="translate(633.33,329.58) scale(0.66)"><path d="M0.9,0.7 C1.4,1.6 2.6,1.6 3.2,0.5 M0.9,0.7 L1.9,4.6"/></g><g transform="translate(635.63,329.58) scale(0.66)"><path d="M0.6,0.6 L2,4.6 L3.4,0.6"/></g></g><g stroke="#2a2433" stroke-width="1.1"><g transform="translate(625.43,329.58) scale(0.66)"><path d="M0.9,0.7 C1.4,1.6 2.6,1.6 3.2,0.5 M0.9,0.7 L1.9,4.6"/></g><g transform="translate(627.73,329.58) scale(0.66)"><path d="M0.6,4.6 L2,0.6 L3.4,4.6"/></g></g><g stroke="#9a62dc" stroke-width="1.1"><g transform="translate(617.53,329.58) scale(0.66)"><path d="M0.9,0.7 C1.4,1.6 2.6,1.6 3.2,0.5 M0.9,0.7 L1.9,4.6"/></g><g transform="translate(619.83,329.58) scale(0.66)"><path d="M2.6,0.6 C0.8,0.6 0.8,2.6 2.6,2.2 M2.6,0.6 L2.6,4.6"/></g></g><g stroke="#2a2433" stroke-width="1.1"><g transform="translate(664.93,300.58) scale(0.66)"><path d="M0.6,0.8 L1.2,1.6 L1.9,0.7 L2.6,1.6 L3.4,0.5 M0.6,0.8 L1.6,4.6"/></g><g transform="translate(667.23,300.58) scale(0.66)"><circle cx="2" cy="3" r="0.75" fill="#2a2433" stroke="none"/></g></g><g stroke="#2a2433" stroke-width="1.1"><g transform="translate(657.03,300.58) scale(0.66)"><path d="M0.6,0.8 L1.2,1.6 L1.9,0.7 L2.6,1.6 L3.4,0.5 M0.6,0.8 L1.6,4.6"/></g><g transform="translate(659.33,300.58) scale(0.66)"><path d="M1.8,0.6 L2.2,4.6"/></g></g><path d="M578.7,281.9 L578.2,285.1 M578.7,285.1 Q577.1,283.6 575.4,285.1 C574.9,282.6 572.4,282.6 571.9,285.1 C569.7,287.6 568.2,285.1 569.2,283.1" stroke="#e8609e" stroke-width="1.0" fill="none"/><g transform="translate(595.80,290.70) scale(0.85)" stroke="#2a2433" stroke-width="1.05"><path d="M0.6,3.8 C0.6,2 2,1.8 2.4,3 L3.4,1 L3.6,3.5 C3.8,4.4 5,4.2 5.4,2.6"/></g><g transform="translate(587.90,290.70) scale(0.85)" stroke="#2a2433" stroke-width="1.05"><path d="M1.2,3.2 C1.2,1.6 4.2,1.6 4.2,3.2 C4.2,4.4 1.2,4.4 1.2,3.2Z"/></g><g transform="translate(580.00,290.70) scale(0.85)" stroke="#2a2433" stroke-width="1.05"><path d="M2.2,2.2 L3,3.6"/></g><g transform="translate(572.10,290.70) scale(0.85)" stroke="#2a2433" stroke-width="1.05"><path d="M0.5,3.6 C0.8,1.6 2.8,1.6 2.9,3.4 C3.2,1.8 5,1.8 5.4,3.4"/></g><g transform="translate(564.20,290.70) scale(0.85)" stroke="#2a2433" stroke-width="1.05"><path d="M3.6,1.4 C1.4,1 0.6,2.6 1.8,3.2 C0.4,3.6 0.8,5 3.6,4.6"/></g><g transform="translate(556.30,290.70) scale(0.85)" stroke="#2a2433" stroke-width="1.05"><path d="M0.8,1.6 L2.2,4.2 L3.6,1.6"/></g><g transform="translate(548.40,290.70) scale(0.85)" stroke="#2a2433" stroke-width="1.05"><path d="M3.6,1.4 C1.4,1 0.6,2.6 1.8,3.2 C0.4,3.6 0.8,5 3.6,4.6"/></g><g stroke="#2a2433" stroke-width="1.1"><g transform="translate(581.28,300.58) scale(0.66)"><path d="M1.8,0.6 L2.2,4.6"/></g></g><g stroke="#2a2433" stroke-width="1.1"><g transform="translate(573.38,300.58) scale(0.66)"><path d="M0.9,0.7 C1.4,1.6 2.6,1.6 3.2,0.5 M0.9,0.7 L1.9,4.6"/></g></g><g stroke="#2a2433" stroke-width="1.1"><g transform="translate(565.48,300.58) scale(0.66)"><path d="M0.6,0.8 L1.2,1.6 L1.9,0.7 L2.6,1.6 L3.4,0.5 M0.6,0.8 L1.6,4.6"/></g></g><g stroke="#2a2433" stroke-width="1.1"><g transform="translate(557.58,300.58) scale(0.66)"><path d="M3.3,0.6 C1.2,0.4 1.0,2.0 2.6,2.1 C0.6,2.2 0.8,4.2 3.4,3.9 M2.6,3.9 L2.8,4.6"/></g></g><g stroke="#9a62dc" stroke-width="1.1"><g transform="translate(549.68,300.58) scale(0.66)"><path d="M2,0.6 C0.4,2.2 0.6,4.5 2,4.5 C3.4,4.5 3.6,2.2 2,0.6Z"/></g></g><g stroke="#2a2433" stroke-width="1.1"><g transform="translate(597.08,307.98) scale(0.66)"><path d="M0.8,0.8 C1.0,1.9 2.8,2.0 3.1,0.8 M3.1,0.8 L1.6,4.6"/></g></g><g stroke="#2a2433" stroke-width="1.1"><g transform="translate(589.18,307.98) scale(0.66)"><path d="M0.6,0.6 L2,4.6 L3.4,0.6"/></g></g><g stroke="#2a2433" stroke-width="1.1"><g transform="translate(581.28,307.98) scale(0.66)"><path d="M0.6,4.6 L2,0.6 L3.4,4.6"/></g></g><g stroke="#2a2433" stroke-width="1.1"><g transform="translate(573.38,307.98) scale(0.66)"><path d="M2.6,0.6 C0.8,0.6 0.8,2.6 2.6,2.2 M2.6,0.6 L2.6,4.6"/></g></g><g stroke="#2a2433" stroke-width="1.1"><g transform="translate(564.33,307.98) scale(0.66)"><path d="M1.8,0.6 L2.2,4.6"/></g><g transform="translate(566.63,307.98) scale(0.66)"><circle cx="2" cy="3" r="0.75" fill="#2a2433" stroke="none"/></g></g><g stroke="#2a2433" stroke-width="1.1"><g transform="translate(556.43,307.98) scale(0.66)"><path d="M1.8,0.6 L2.2,4.6"/></g><g transform="translate(558.73,307.98) scale(0.66)"><path d="M1.8,0.6 L2.2,4.6"/></g></g><g stroke="#9a62dc" stroke-width="1.1"><g transform="translate(548.53,307.98) scale(0.66)"><path d="M1.8,0.6 L2.2,4.6"/></g><g transform="translate(550.83,307.98) scale(0.66)"><path d="M0.9,0.7 C1.4,1.6 2.6,1.6 3.2,0.5 M0.9,0.7 L1.9,4.6"/></g></g><g stroke="#2a2433" stroke-width="1.1"><g transform="translate(595.93,315.18) scale(0.66)"><path d="M1.8,0.6 L2.2,4.6"/></g><g transform="translate(598.23,315.18) scale(0.66)"><path d="M0.6,0.8 L1.2,1.6 L1.9,0.7 L2.6,1.6 L3.4,0.5 M0.6,0.8 L1.6,4.6"/></g></g><g stroke="#2a2433" stroke-width="1.1"><g transform="translate(588.03,315.18) scale(0.66)"><path d="M1.8,0.6 L2.2,4.6"/></g><g transform="translate(590.33,315.18) scale(0.66)"><path d="M3.3,0.6 C1.2,0.4 1.0,2.0 2.6,2.1 C0.6,2.2 0.8,4.2 3.4,3.9 M2.6,3.9 L2.8,4.6"/></g></g><g stroke="#2a2433" stroke-width="1.1"><g transform="translate(580.13,315.18) scale(0.66)"><path d="M1.8,0.6 L2.2,4.6"/></g><g transform="translate(582.43,315.18) scale(0.66)"><path d="M2,0.6 C0.4,2.2 0.6,4.5 2,4.5 C3.4,4.5 3.6,2.2 2,0.6Z"/></g></g><g stroke="#2a2433" stroke-width="1.1"><g transform="translate(572.23,315.18) scale(0.66)"><path d="M1.8,0.6 L2.2,4.6"/></g><g transform="translate(574.53,315.18) scale(0.66)"><path d="M0.8,0.8 C1.0,1.9 2.8,2.0 3.1,0.8 M3.1,0.8 L1.6,4.6"/></g></g><g stroke="#2a2433" stroke-width="1.1"><g transform="translate(564.33,315.18) scale(0.66)"><path d="M1.8,0.6 L2.2,4.6"/></g><g transform="translate(566.63,315.18) scale(0.66)"><path d="M0.6,0.6 L2,4.6 L3.4,0.6"/></g></g><g stroke="#2a2433" stroke-width="1.1"><g transform="translate(556.43,315.18) scale(0.66)"><path d="M1.8,0.6 L2.2,4.6"/></g><g transform="translate(558.73,315.18) scale(0.66)"><path d="M0.6,4.6 L2,0.6 L3.4,4.6"/></g></g><g stroke="#9a62dc" stroke-width="1.1"><g transform="translate(548.53,315.18) scale(0.66)"><path d="M1.8,0.6 L2.2,4.6"/></g><g transform="translate(550.83,315.18) scale(0.66)"><path d="M2.6,0.6 C0.8,0.6 0.8,2.6 2.6,2.2 M2.6,0.6 L2.6,4.6"/></g></g><g stroke="#2a2433" stroke-width="1.1"><g transform="translate(595.93,322.38) scale(0.66)"><path d="M0.9,0.7 C1.4,1.6 2.6,1.6 3.2,0.5 M0.9,0.7 L1.9,4.6"/></g><g transform="translate(598.23,322.38) scale(0.66)"><circle cx="2" cy="3" r="0.75" fill="#2a2433" stroke="none"/></g></g><g stroke="#2a2433" stroke-width="1.1"><g transform="translate(588.03,322.38) scale(0.66)"><path d="M0.9,0.7 C1.4,1.6 2.6,1.6 3.2,0.5 M0.9,0.7 L1.9,4.6"/></g><g transform="translate(590.33,322.38) scale(0.66)"><path d="M1.8,0.6 L2.2,4.6"/></g></g><g stroke="#2a2433" stroke-width="1.1"><g transform="translate(580.13,322.38) scale(0.66)"><path d="M0.9,0.7 C1.4,1.6 2.6,1.6 3.2,0.5 M0.9,0.7 L1.9,4.6"/></g><g transform="translate(582.43,322.38) scale(0.66)"><path d="M0.9,0.7 C1.4,1.6 2.6,1.6 3.2,0.5 M0.9,0.7 L1.9,4.6"/></g></g><g stroke="#2a2433" stroke-width="1.1"><g transform="translate(572.23,322.38) scale(0.66)"><path d="M0.9,0.7 C1.4,1.6 2.6,1.6 3.2,0.5 M0.9,0.7 L1.9,4.6"/></g><g transform="translate(574.53,322.38) scale(0.66)"><path d="M0.6,0.8 L1.2,1.6 L1.9,0.7 L2.6,1.6 L3.4,0.5 M0.6,0.8 L1.6,4.6"/></g></g><g stroke="#2a2433" stroke-width="1.1"><g transform="translate(564.33,322.38) scale(0.66)"><path d="M0.9,0.7 C1.4,1.6 2.6,1.6 3.2,0.5 M0.9,0.7 L1.9,4.6"/></g><g transform="translate(566.63,322.38) scale(0.66)"><path d="M3.3,0.6 C1.2,0.4 1.0,2.0 2.6,2.1 C0.6,2.2 0.8,4.2 3.4,3.9 M2.6,3.9 L2.8,4.6"/></g></g><g stroke="#2a2433" stroke-width="1.1"><g transform="translate(556.43,322.38) scale(0.66)"><path d="M0.9,0.7 C1.4,1.6 2.6,1.6 3.2,0.5 M0.9,0.7 L1.9,4.6"/></g><g transform="translate(558.73,322.38) scale(0.66)"><path d="M2,0.6 C0.4,2.2 0.6,4.5 2,4.5 C3.4,4.5 3.6,2.2 2,0.6Z"/></g></g><g stroke="#9a62dc" stroke-width="1.1"><g transform="translate(548.53,322.38) scale(0.66)"><path d="M0.9,0.7 C1.4,1.6 2.6,1.6 3.2,0.5 M0.9,0.7 L1.9,4.6"/></g><g transform="translate(550.83,322.38) scale(0.66)"><path d="M0.8,0.8 C1.0,1.9 2.8,2.0 3.1,0.8 M3.1,0.8 L1.6,4.6"/></g></g><g stroke="#2a2433" stroke-width="1.1"><g transform="translate(595.93,329.58) scale(0.66)"><path d="M0.9,0.7 C1.4,1.6 2.6,1.6 3.2,0.5 M0.9,0.7 L1.9,4.6"/></g><g transform="translate(598.23,329.58) scale(0.66)"><path d="M0.6,0.6 L2,4.6 L3.4,0.6"/></g></g><g stroke="#2a2433" stroke-width="1.1"><g transform="translate(588.03,329.58) scale(0.66)"><path d="M0.9,0.7 C1.4,1.6 2.6,1.6 3.2,0.5 M0.9,0.7 L1.9,4.6"/></g><g transform="translate(590.33,329.58) scale(0.66)"><path d="M0.6,4.6 L2,0.6 L3.4,4.6"/></g></g><g stroke="#2a2433" stroke-width="1.1"><g transform="translate(580.13,329.58) scale(0.66)"><path d="M0.9,0.7 C1.4,1.6 2.6,1.6 3.2,0.5 M0.9,0.7 L1.9,4.6"/></g><g transform="translate(582.43,329.58) scale(0.66)"><path d="M2.6,0.6 C0.8,0.6 0.8,2.6 2.6,2.2 M2.6,0.6 L2.6,4.6"/></g></g><g stroke="#2a2433" stroke-width="1.1"><g transform="translate(572.23,329.58) scale(0.66)"><path d="M0.6,0.8 L1.2,1.6 L1.9,0.7 L2.6,1.6 L3.4,0.5 M0.6,0.8 L1.6,4.6"/></g><g transform="translate(574.53,329.58) scale(0.66)"><circle cx="2" cy="3" r="0.75" fill="#2a2433" stroke="none"/></g></g><g stroke="#2a2433" stroke-width="1.1"><g transform="translate(564.33,329.58) scale(0.66)"><path d="M0.6,0.8 L1.2,1.6 L1.9,0.7 L2.6,1.6 L3.4,0.5 M0.6,0.8 L1.6,4.6"/></g><g transform="translate(566.63,329.58) scale(0.66)"><path d="M1.8,0.6 L2.2,4.6"/></g></g><path d="M648.7,347.5 L648.2,350.7 M648.7,350.7 C648.2,348.2 647.0,348.2 646.5,350.7 L646.0,347.5 M646.2,350.7 L643.5,350.7 C643.0,348.2 641.8,348.2 641.3,350.7 C640.8,348.2 639.2,348.2 638.7,350.7 C637.7,353.2 636.2,350.7 637.2,348.7" stroke="#e8609e" stroke-width="1.0" fill="none"/><g transform="translate(664.80,356.30) scale(0.85)" stroke="#2a2433" stroke-width="1.05"><path d="M0.6,3.8 C0.6,2 2,1.8 2.4,3 L3.4,1 L3.6,3.5 C3.8,4.4 5,4.2 5.4,2.6"/></g><g transform="translate(656.90,356.30) scale(0.85)" stroke="#2a2433" stroke-width="1.05"><path d="M1.2,3.2 C1.2,1.6 4.2,1.6 4.2,3.2 C4.2,4.4 1.2,4.4 1.2,3.2Z"/></g><g transform="translate(649.00,356.30) scale(0.85)" stroke="#2a2433" stroke-width="1.05"><path d="M2.2,2.2 L3,3.6"/></g><g transform="translate(641.10,356.30) scale(0.85)" stroke="#2a2433" stroke-width="1.05"><path d="M0.5,3.6 C0.8,1.6 2.8,1.6 2.9,3.4 C3.2,1.8 5,1.8 5.4,3.4"/></g><g transform="translate(633.20,356.30) scale(0.85)" stroke="#2a2433" stroke-width="1.05"><path d="M3.6,1.4 C1.4,1 0.6,2.6 1.8,3.2 C0.4,3.6 0.8,5 3.6,4.6"/></g><g transform="translate(625.30,356.30) scale(0.85)" stroke="#2a2433" stroke-width="1.05"><path d="M0.8,1.6 L2.2,4.2 L3.6,1.6"/></g><g transform="translate(617.40,356.30) scale(0.85)" stroke="#2a2433" stroke-width="1.05"><path d="M3.6,1.4 C1.4,1 0.6,2.6 1.8,3.2 C0.4,3.6 0.8,5 3.6,4.6"/></g><g stroke="#2a2433" stroke-width="1.1"><g transform="translate(626.58,366.18) scale(0.66)"><path d="M1.8,0.6 L2.2,4.6"/></g></g><g stroke="#9a62dc" stroke-width="1.1"><g transform="translate(618.68,366.18) scale(0.66)"><path d="M0.9,0.7 C1.4,1.6 2.6,1.6 3.2,0.5 M0.9,0.7 L1.9,4.6"/></g></g><g stroke="#2a2433" stroke-width="1.1"><g transform="translate(666.08,373.58) scale(0.66)"><path d="M0.6,0.8 L1.2,1.6 L1.9,0.7 L2.6,1.6 L3.4,0.5 M0.6,0.8 L1.6,4.6"/></g></g><g stroke="#2a2433" stroke-width="1.1"><g transform="translate(658.18,373.58) scale(0.66)"><path d="M3.3,0.6 C1.2,0.4 1.0,2.0 2.6,2.1 C0.6,2.2 0.8,4.2 3.4,3.9 M2.6,3.9 L2.8,4.6"/></g></g><g stroke="#2a2433" stroke-width="1.1"><g transform="translate(650.28,373.58) scale(0.66)"><path d="M2,0.6 C0.4,2.2 0.6,4.5 2,4.5 C3.4,4.5 3.6,2.2 2,0.6Z"/></g></g><g stroke="#2a2433" stroke-width="1.1"><g transform="translate(642.38,373.58) scale(0.66)"><path d="M0.8,0.8 C1.0,1.9 2.8,2.0 3.1,0.8 M3.1,0.8 L1.6,4.6"/></g></g><g stroke="#2a2433" stroke-width="1.1"><g transform="translate(634.48,373.58) scale(0.66)"><path d="M0.6,0.6 L2,4.6 L3.4,0.6"/></g></g><g stroke="#2a2433" stroke-width="1.1"><g transform="translate(626.58,373.58) scale(0.66)"><path d="M0.6,4.6 L2,0.6 L3.4,4.6"/></g></g><g stroke="#9a62dc" stroke-width="1.1"><g transform="translate(618.68,373.58) scale(0.66)"><path d="M2.6,0.6 C0.8,0.6 0.8,2.6 2.6,2.2 M2.6,0.6 L2.6,4.6"/></g></g><g stroke="#2a2433" stroke-width="1.1"><g transform="translate(664.93,380.78) scale(0.66)"><path d="M1.8,0.6 L2.2,4.6"/></g><g transform="translate(667.23,380.78) scale(0.66)"><circle cx="2" cy="3" r="0.75" fill="#2a2433" stroke="none"/></g></g><g stroke="#2a2433" stroke-width="1.1"><g transform="translate(657.03,380.78) scale(0.66)"><path d="M1.8,0.6 L2.2,4.6"/></g><g transform="translate(659.33,380.78) scale(0.66)"><path d="M1.8,0.6 L2.2,4.6"/></g></g><g stroke="#2a2433" stroke-width="1.1"><g transform="translate(649.13,380.78) scale(0.66)"><path d="M1.8,0.6 L2.2,4.6"/></g><g transform="translate(651.43,380.78) scale(0.66)"><path d="M0.9,0.7 C1.4,1.6 2.6,1.6 3.2,0.5 M0.9,0.7 L1.9,4.6"/></g></g><g stroke="#2a2433" stroke-width="1.1"><g transform="translate(641.23,380.78) scale(0.66)"><path d="M1.8,0.6 L2.2,4.6"/></g><g transform="translate(643.53,380.78) scale(0.66)"><path d="M0.6,0.8 L1.2,1.6 L1.9,0.7 L2.6,1.6 L3.4,0.5 M0.6,0.8 L1.6,4.6"/></g></g><g stroke="#2a2433" stroke-width="1.1"><g transform="translate(633.33,380.78) scale(0.66)"><path d="M1.8,0.6 L2.2,4.6"/></g><g transform="translate(635.63,380.78) scale(0.66)"><path d="M3.3,0.6 C1.2,0.4 1.0,2.0 2.6,2.1 C0.6,2.2 0.8,4.2 3.4,3.9 M2.6,3.9 L2.8,4.6"/></g></g><g stroke="#2a2433" stroke-width="1.1"><g transform="translate(625.43,380.78) scale(0.66)"><path d="M1.8,0.6 L2.2,4.6"/></g><g transform="translate(627.73,380.78) scale(0.66)"><path d="M2,0.6 C0.4,2.2 0.6,4.5 2,4.5 C3.4,4.5 3.6,2.2 2,0.6Z"/></g></g><g stroke="#9a62dc" stroke-width="1.1"><g transform="translate(617.53,380.78) scale(0.66)"><path d="M1.8,0.6 L2.2,4.6"/></g><g transform="translate(619.83,380.78) scale(0.66)"><path d="M0.8,0.8 C1.0,1.9 2.8,2.0 3.1,0.8 M3.1,0.8 L1.6,4.6"/></g></g><g stroke="#2a2433" stroke-width="1.1"><g transform="translate(664.93,387.98) scale(0.66)"><path d="M1.8,0.6 L2.2,4.6"/></g><g transform="translate(667.23,387.98) scale(0.66)"><path d="M0.6,0.6 L2,4.6 L3.4,0.6"/></g></g><g stroke="#2a2433" stroke-width="1.1"><g transform="translate(657.03,387.98) scale(0.66)"><path d="M1.8,0.6 L2.2,4.6"/></g><g transform="translate(659.33,387.98) scale(0.66)"><path d="M0.6,4.6 L2,0.6 L3.4,4.6"/></g></g><g stroke="#2a2433" stroke-width="1.1"><g transform="translate(649.13,387.98) scale(0.66)"><path d="M1.8,0.6 L2.2,4.6"/></g><g transform="translate(651.43,387.98) scale(0.66)"><path d="M2.6,0.6 C0.8,0.6 0.8,2.6 2.6,2.2 M2.6,0.6 L2.6,4.6"/></g></g><g stroke="#2a2433" stroke-width="1.1"><g transform="translate(641.23,387.98) scale(0.66)"><path d="M0.9,0.7 C1.4,1.6 2.6,1.6 3.2,0.5 M0.9,0.7 L1.9,4.6"/></g><g transform="translate(643.53,387.98) scale(0.66)"><circle cx="2" cy="3" r="0.75" fill="#2a2433" stroke="none"/></g></g><g stroke="#2a2433" stroke-width="1.1"><g transform="translate(633.33,387.98) scale(0.66)"><path d="M0.9,0.7 C1.4,1.6 2.6,1.6 3.2,0.5 M0.9,0.7 L1.9,4.6"/></g><g transform="translate(635.63,387.98) scale(0.66)"><path d="M1.8,0.6 L2.2,4.6"/></g></g><g stroke="#2a2433" stroke-width="1.1"><g transform="translate(625.43,387.98) scale(0.66)"><path d="M0.9,0.7 C1.4,1.6 2.6,1.6 3.2,0.5 M0.9,0.7 L1.9,4.6"/></g><g transform="translate(627.73,387.98) scale(0.66)"><path d="M0.9,0.7 C1.4,1.6 2.6,1.6 3.2,0.5 M0.9,0.7 L1.9,4.6"/></g></g><g stroke="#9a62dc" stroke-width="1.1"><g transform="translate(617.53,387.98) scale(0.66)"><path d="M0.9,0.7 C1.4,1.6 2.6,1.6 3.2,0.5 M0.9,0.7 L1.9,4.6"/></g><g transform="translate(619.83,387.98) scale(0.66)"><path d="M0.6,0.8 L1.2,1.6 L1.9,0.7 L2.6,1.6 L3.4,0.5 M0.6,0.8 L1.6,4.6"/></g></g><g stroke="#2a2433" stroke-width="1.1"><g transform="translate(664.93,395.18) scale(0.66)"><path d="M0.9,0.7 C1.4,1.6 2.6,1.6 3.2,0.5 M0.9,0.7 L1.9,4.6"/></g><g transform="translate(667.23,395.18) scale(0.66)"><path d="M3.3,0.6 C1.2,0.4 1.0,2.0 2.6,2.1 C0.6,2.2 0.8,4.2 3.4,3.9 M2.6,3.9 L2.8,4.6"/></g></g><g stroke="#2a2433" stroke-width="1.1"><g transform="translate(657.03,395.18) scale(0.66)"><path d="M0.9,0.7 C1.4,1.6 2.6,1.6 3.2,0.5 M0.9,0.7 L1.9,4.6"/></g><g transform="translate(659.33,395.18) scale(0.66)"><path d="M2,0.6 C0.4,2.2 0.6,4.5 2,4.5 C3.4,4.5 3.6,2.2 2,0.6Z"/></g></g><g stroke="#2a2433" stroke-width="1.1"><g transform="translate(649.13,395.18) scale(0.66)"><path d="M0.9,0.7 C1.4,1.6 2.6,1.6 3.2,0.5 M0.9,0.7 L1.9,4.6"/></g><g transform="translate(651.43,395.18) scale(0.66)"><path d="M0.8,0.8 C1.0,1.9 2.8,2.0 3.1,0.8 M3.1,0.8 L1.6,4.6"/></g></g><g stroke="#2a2433" stroke-width="1.1"><g transform="translate(641.23,395.18) scale(0.66)"><path d="M0.9,0.7 C1.4,1.6 2.6,1.6 3.2,0.5 M0.9,0.7 L1.9,4.6"/></g><g transform="translate(643.53,395.18) scale(0.66)"><path d="M0.6,0.6 L2,4.6 L3.4,0.6"/></g></g><g stroke="#2a2433" stroke-width="1.1"><g transform="translate(633.33,395.18) scale(0.66)"><path d="M0.9,0.7 C1.4,1.6 2.6,1.6 3.2,0.5 M0.9,0.7 L1.9,4.6"/></g><g transform="translate(635.63,395.18) scale(0.66)"><path d="M0.6,4.6 L2,0.6 L3.4,4.6"/></g></g><g stroke="#2a2433" stroke-width="1.1"><g transform="translate(625.43,395.18) scale(0.66)"><path d="M0.9,0.7 C1.4,1.6 2.6,1.6 3.2,0.5 M0.9,0.7 L1.9,4.6"/></g><g transform="translate(627.73,395.18) scale(0.66)"><path d="M2.6,0.6 C0.8,0.6 0.8,2.6 2.6,2.2 M2.6,0.6 L2.6,4.6"/></g></g><g stroke="#9a62dc" stroke-width="1.1"><g transform="translate(617.53,395.18) scale(0.66)"><path d="M0.6,0.8 L1.2,1.6 L1.9,0.7 L2.6,1.6 L3.4,0.5 M0.6,0.8 L1.6,4.6"/></g><g transform="translate(619.83,395.18) scale(0.66)"><circle cx="2" cy="3" r="0.75" fill="#9a62dc" stroke="none"/></g></g><g stroke="#2a2433" stroke-width="1.1"><g transform="translate(664.93,366.18) scale(0.66)"><path d="M0.6,0.8 L1.2,1.6 L1.9,0.7 L2.6,1.6 L3.4,0.5 M0.6,0.8 L1.6,4.6"/></g><g transform="translate(667.23,366.18) scale(0.66)"><path d="M1.8,0.6 L2.2,4.6"/></g></g><path d="M582.2,347.5 L581.7,350.7 M582.2,350.7 Q580.9,349.2 579.6,350.7 Q578.5,349.2 577.5,350.7 Q576.2,349.2 574.9,350.7 Q573.8,349.2 572.6,350.7 L572.1,347.5 M572.3,350.7 L570.2,350.7 L569.7,347.5 M569.9,350.7 L567.2,350.7 C566.2,353.2 564.7,350.7 565.7,348.7" stroke="#e8609e" stroke-width="1.0" fill="none"/><g transform="translate(595.80,356.30) scale(0.85)" stroke="#2a2433" stroke-width="1.05"><path d="M0.6,3.8 C0.6,2 2,1.8 2.4,3 L3.4,1 L3.6,3.5 C3.8,4.4 5,4.2 5.4,2.6"/></g><g transform="translate(587.90,356.30) scale(0.85)" stroke="#2a2433" stroke-width="1.05"><path d="M1.2,3.2 C1.2,1.6 4.2,1.6 4.2,3.2 C4.2,4.4 1.2,4.4 1.2,3.2Z"/></g><g transform="translate(580.00,356.30) scale(0.85)" stroke="#2a2433" stroke-width="1.05"><path d="M2.2,2.2 L3,3.6"/></g><g transform="translate(572.10,356.30) scale(0.85)" stroke="#2a2433" stroke-width="1.05"><path d="M0.5,3.6 C0.8,1.6 2.8,1.6 2.9,3.4 C3.2,1.8 5,1.8 5.4,3.4"/></g><g transform="translate(564.20,356.30) scale(0.85)" stroke="#2a2433" stroke-width="1.05"><path d="M3.6,1.4 C1.4,1 0.6,2.6 1.8,3.2 C0.4,3.6 0.8,5 3.6,4.6"/></g><g transform="translate(556.30,356.30) scale(0.85)" stroke="#2a2433" stroke-width="1.05"><path d="M0.8,1.6 L2.2,4.2 L3.6,1.6"/></g><g transform="translate(548.40,356.30) scale(0.85)" stroke="#2a2433" stroke-width="1.05"><path d="M3.6,1.4 C1.4,1 0.6,2.6 1.8,3.2 C0.4,3.6 0.8,5 3.6,4.6"/></g><g stroke="#2a2433" stroke-width="1.1"><g transform="translate(589.18,366.18) scale(0.66)"><path d="M1.8,0.6 L2.2,4.6"/></g></g><g stroke="#2a2433" stroke-width="1.1"><g transform="translate(581.28,366.18) scale(0.66)"><path d="M0.9,0.7 C1.4,1.6 2.6,1.6 3.2,0.5 M0.9,0.7 L1.9,4.6"/></g></g><g stroke="#2a2433" stroke-width="1.1"><g transform="translate(573.38,366.18) scale(0.66)"><path d="M0.6,0.8 L1.2,1.6 L1.9,0.7 L2.6,1.6 L3.4,0.5 M0.6,0.8 L1.6,4.6"/></g></g><g stroke="#2a2433" stroke-width="1.1"><g transform="translate(565.48,366.18) scale(0.66)"><path d="M3.3,0.6 C1.2,0.4 1.0,2.0 2.6,2.1 C0.6,2.2 0.8,4.2 3.4,3.9 M2.6,3.9 L2.8,4.6"/></g></g><g stroke="#2a2433" stroke-width="1.1"><g transform="translate(557.58,366.18) scale(0.66)"><path d="M2,0.6 C0.4,2.2 0.6,4.5 2,4.5 C3.4,4.5 3.6,2.2 2,0.6Z"/></g></g><g stroke="#9a62dc" stroke-width="1.1"><g transform="translate(549.68,366.18) scale(0.66)"><path d="M0.8,0.8 C1.0,1.9 2.8,2.0 3.1,0.8 M3.1,0.8 L1.6,4.6"/></g></g><g stroke="#2a2433" stroke-width="1.1"><g transform="translate(597.08,373.58) scale(0.66)"><path d="M0.6,0.6 L2,4.6 L3.4,0.6"/></g></g><g stroke="#2a2433" stroke-width="1.1"><g transform="translate(589.18,373.58) scale(0.66)"><path d="M0.6,4.6 L2,0.6 L3.4,4.6"/></g></g><g stroke="#2a2433" stroke-width="1.1"><g transform="translate(581.28,373.58) scale(0.66)"><path d="M2.6,0.6 C0.8,0.6 0.8,2.6 2.6,2.2 M2.6,0.6 L2.6,4.6"/></g></g><g stroke="#2a2433" stroke-width="1.1"><g transform="translate(572.23,373.58) scale(0.66)"><path d="M1.8,0.6 L2.2,4.6"/></g><g transform="translate(574.53,373.58) scale(0.66)"><circle cx="2" cy="3" r="0.75" fill="#2a2433" stroke="none"/></g></g><g stroke="#2a2433" stroke-width="1.1"><g transform="translate(564.33,373.58) scale(0.66)"><path d="M1.8,0.6 L2.2,4.6"/></g><g transform="translate(566.63,373.58) scale(0.66)"><path d="M1.8,0.6 L2.2,4.6"/></g></g><g stroke="#2a2433" stroke-width="1.1"><g transform="translate(556.43,373.58) scale(0.66)"><path d="M1.8,0.6 L2.2,4.6"/></g><g transform="translate(558.73,373.58) scale(0.66)"><path d="M0.9,0.7 C1.4,1.6 2.6,1.6 3.2,0.5 M0.9,0.7 L1.9,4.6"/></g></g><g stroke="#9a62dc" stroke-width="1.1"><g transform="translate(548.53,373.58) scale(0.66)"><path d="M1.8,0.6 L2.2,4.6"/></g><g transform="translate(550.83,373.58) scale(0.66)"><path d="M0.6,0.8 L1.2,1.6 L1.9,0.7 L2.6,1.6 L3.4,0.5 M0.6,0.8 L1.6,4.6"/></g></g><g stroke="#2a2433" stroke-width="1.1"><g transform="translate(595.93,380.78) scale(0.66)"><path d="M1.8,0.6 L2.2,4.6"/></g><g transform="translate(598.23,380.78) scale(0.66)"><path d="M3.3,0.6 C1.2,0.4 1.0,2.0 2.6,2.1 C0.6,2.2 0.8,4.2 3.4,3.9 M2.6,3.9 L2.8,4.6"/></g></g><g stroke="#2a2433" stroke-width="1.1"><g transform="translate(588.03,380.78) scale(0.66)"><path d="M1.8,0.6 L2.2,4.6"/></g><g transform="translate(590.33,380.78) scale(0.66)"><path d="M2,0.6 C0.4,2.2 0.6,4.5 2,4.5 C3.4,4.5 3.6,2.2 2,0.6Z"/></g></g><g stroke="#2a2433" stroke-width="1.1"><g transform="translate(580.13,380.78) scale(0.66)"><path d="M1.8,0.6 L2.2,4.6"/></g><g transform="translate(582.43,380.78) scale(0.66)"><path d="M0.8,0.8 C1.0,1.9 2.8,2.0 3.1,0.8 M3.1,0.8 L1.6,4.6"/></g></g><g stroke="#2a2433" stroke-width="1.1"><g transform="translate(572.23,380.78) scale(0.66)"><path d="M1.8,0.6 L2.2,4.6"/></g><g transform="translate(574.53,380.78) scale(0.66)"><path d="M0.6,0.6 L2,4.6 L3.4,0.6"/></g></g><g stroke="#2a2433" stroke-width="1.1"><g transform="translate(564.33,380.78) scale(0.66)"><path d="M1.8,0.6 L2.2,4.6"/></g><g transform="translate(566.63,380.78) scale(0.66)"><path d="M0.6,4.6 L2,0.6 L3.4,4.6"/></g></g><g stroke="#2a2433" stroke-width="1.1"><g transform="translate(556.43,380.78) scale(0.66)"><path d="M1.8,0.6 L2.2,4.6"/></g><g transform="translate(558.73,380.78) scale(0.66)"><path d="M2.6,0.6 C0.8,0.6 0.8,2.6 2.6,2.2 M2.6,0.6 L2.6,4.6"/></g></g><g stroke="#9a62dc" stroke-width="1.1"><g transform="translate(548.53,380.78) scale(0.66)"><path d="M0.9,0.7 C1.4,1.6 2.6,1.6 3.2,0.5 M0.9,0.7 L1.9,4.6"/></g><g transform="translate(550.83,380.78) scale(0.66)"><circle cx="2" cy="3" r="0.75" fill="#9a62dc" stroke="none"/></g></g><g stroke="#2a2433" stroke-width="1.1"><g transform="translate(595.93,387.98) scale(0.66)"><path d="M0.9,0.7 C1.4,1.6 2.6,1.6 3.2,0.5 M0.9,0.7 L1.9,4.6"/></g><g transform="translate(598.23,387.98) scale(0.66)"><path d="M1.8,0.6 L2.2,4.6"/></g></g><g stroke="#2a2433" stroke-width="1.1"><g transform="translate(588.03,387.98) scale(0.66)"><path d="M0.9,0.7 C1.4,1.6 2.6,1.6 3.2,0.5 M0.9,0.7 L1.9,4.6"/></g><g transform="translate(590.33,387.98) scale(0.66)"><path d="M0.9,0.7 C1.4,1.6 2.6,1.6 3.2,0.5 M0.9,0.7 L1.9,4.6"/></g></g><g stroke="#2a2433" stroke-width="1.1"><g transform="translate(580.13,387.98) scale(0.66)"><path d="M0.9,0.7 C1.4,1.6 2.6,1.6 3.2,0.5 M0.9,0.7 L1.9,4.6"/></g><g transform="translate(582.43,387.98) scale(0.66)"><path d="M0.6,0.8 L1.2,1.6 L1.9,0.7 L2.6,1.6 L3.4,0.5 M0.6,0.8 L1.6,4.6"/></g></g><g stroke="#2a2433" stroke-width="1.1"><g transform="translate(572.23,387.98) scale(0.66)"><path d="M0.9,0.7 C1.4,1.6 2.6,1.6 3.2,0.5 M0.9,0.7 L1.9,4.6"/></g><g transform="translate(574.53,387.98) scale(0.66)"><path d="M3.3,0.6 C1.2,0.4 1.0,2.0 2.6,2.1 C0.6,2.2 0.8,4.2 3.4,3.9 M2.6,3.9 L2.8,4.6"/></g></g><g stroke="#2a2433" stroke-width="1.1"><g transform="translate(564.33,387.98) scale(0.66)"><path d="M0.9,0.7 C1.4,1.6 2.6,1.6 3.2,0.5 M0.9,0.7 L1.9,4.6"/></g><g transform="translate(566.63,387.98) scale(0.66)"><path d="M2,0.6 C0.4,2.2 0.6,4.5 2,4.5 C3.4,4.5 3.6,2.2 2,0.6Z"/></g></g><g stroke="#2a2433" stroke-width="1.1"><g transform="translate(556.43,387.98) scale(0.66)"><path d="M0.9,0.7 C1.4,1.6 2.6,1.6 3.2,0.5 M0.9,0.7 L1.9,4.6"/></g><g transform="translate(558.73,387.98) scale(0.66)"><path d="M0.8,0.8 C1.0,1.9 2.8,2.0 3.1,0.8 M3.1,0.8 L1.6,4.6"/></g></g><g stroke="#9a62dc" stroke-width="1.1"><g transform="translate(548.53,387.98) scale(0.66)"><path d="M0.9,0.7 C1.4,1.6 2.6,1.6 3.2,0.5 M0.9,0.7 L1.9,4.6"/></g><g transform="translate(550.83,387.98) scale(0.66)"><path d="M0.6,0.6 L2,4.6 L3.4,0.6"/></g></g><g stroke="#2a2433" stroke-width="1.1"><g transform="translate(595.93,395.18) scale(0.66)"><path d="M0.9,0.7 C1.4,1.6 2.6,1.6 3.2,0.5 M0.9,0.7 L1.9,4.6"/></g><g transform="translate(598.23,395.18) scale(0.66)"><path d="M0.6,4.6 L2,0.6 L3.4,4.6"/></g></g><g stroke="#2a2433" stroke-width="1.1"><g transform="translate(588.03,395.18) scale(0.66)"><path d="M0.9,0.7 C1.4,1.6 2.6,1.6 3.2,0.5 M0.9,0.7 L1.9,4.6"/></g><g transform="translate(590.33,395.18) scale(0.66)"><path d="M2.6,0.6 C0.8,0.6 0.8,2.6 2.6,2.2 M2.6,0.6 L2.6,4.6"/></g></g><g stroke="#2a2433" stroke-width="1.1"><g transform="translate(580.13,395.18) scale(0.66)"><path d="M0.6,0.8 L1.2,1.6 L1.9,0.7 L2.6,1.6 L3.4,0.5 M0.6,0.8 L1.6,4.6"/></g><g transform="translate(582.43,395.18) scale(0.66)"><circle cx="2" cy="3" r="0.75" fill="#2a2433" stroke="none"/></g></g><g stroke="#2a2433" stroke-width="1.1"><g transform="translate(572.23,395.18) scale(0.66)"><path d="M0.6,0.8 L1.2,1.6 L1.9,0.7 L2.6,1.6 L3.4,0.5 M0.6,0.8 L1.6,4.6"/></g><g transform="translate(574.53,395.18) scale(0.66)"><path d="M1.8,0.6 L2.2,4.6"/></g></g><path d="M647.7,413.1 L647.2,416.3 M647.7,416.3 L647.2,413.1 M647.4,416.3 L645.0,416.3 C644.5,413.8 643.0,413.8 642.5,416.3 C642.0,413.8 640.9,413.8 640.4,416.3 C638.7,418.8 637.2,416.3 638.2,414.3" stroke="#e8609e" stroke-width="1.0" fill="none"/><g transform="translate(664.80,421.90) scale(0.85)" stroke="#2a2433" stroke-width="1.05"><path d="M0.6,3.8 C0.6,2 2,1.8 2.4,3 L3.4,1 L3.6,3.5 C3.8,4.4 5,4.2 5.4,2.6"/></g><g transform="translate(656.90,421.90) scale(0.85)" stroke="#2a2433" stroke-width="1.05"><path d="M1.2,3.2 C1.2,1.6 4.2,1.6 4.2,3.2 C4.2,4.4 1.2,4.4 1.2,3.2Z"/></g><g transform="translate(649.00,421.90) scale(0.85)" stroke="#2a2433" stroke-width="1.05"><path d="M2.2,2.2 L3,3.6"/></g><g transform="translate(641.10,421.90) scale(0.85)" stroke="#2a2433" stroke-width="1.05"><path d="M0.5,3.6 C0.8,1.6 2.8,1.6 2.9,3.4 C3.2,1.8 5,1.8 5.4,3.4"/></g><g transform="translate(633.20,421.90) scale(0.85)" stroke="#2a2433" stroke-width="1.05"><path d="M3.6,1.4 C1.4,1 0.6,2.6 1.8,3.2 C0.4,3.6 0.8,5 3.6,4.6"/></g><g transform="translate(625.30,421.90) scale(0.85)" stroke="#2a2433" stroke-width="1.05"><path d="M0.8,1.6 L2.2,4.2 L3.6,1.6"/></g><g transform="translate(617.40,421.90) scale(0.85)" stroke="#2a2433" stroke-width="1.05"><path d="M3.6,1.4 C1.4,1 0.6,2.6 1.8,3.2 C0.4,3.6 0.8,5 3.6,4.6"/></g><g stroke="#2a2433" stroke-width="1.1"><g transform="translate(634.48,431.78) scale(0.66)"><path d="M1.8,0.6 L2.2,4.6"/></g></g><g stroke="#2a2433" stroke-width="1.1"><g transform="translate(626.58,431.78) scale(0.66)"><path d="M0.9,0.7 C1.4,1.6 2.6,1.6 3.2,0.5 M0.9,0.7 L1.9,4.6"/></g></g><g stroke="#9a62dc" stroke-width="1.1"><g transform="translate(618.68,431.78) scale(0.66)"><path d="M0.6,0.8 L1.2,1.6 L1.9,0.7 L2.6,1.6 L3.4,0.5 M0.6,0.8 L1.6,4.6"/></g></g><g stroke="#2a2433" stroke-width="1.1"><g transform="translate(666.08,439.18) scale(0.66)"><path d="M3.3,0.6 C1.2,0.4 1.0,2.0 2.6,2.1 C0.6,2.2 0.8,4.2 3.4,3.9 M2.6,3.9 L2.8,4.6"/></g></g><g stroke="#2a2433" stroke-width="1.1"><g transform="translate(658.18,439.18) scale(0.66)"><path d="M2,0.6 C0.4,2.2 0.6,4.5 2,4.5 C3.4,4.5 3.6,2.2 2,0.6Z"/></g></g><g stroke="#2a2433" stroke-width="1.1"><g transform="translate(650.28,439.18) scale(0.66)"><path d="M0.8,0.8 C1.0,1.9 2.8,2.0 3.1,0.8 M3.1,0.8 L1.6,4.6"/></g></g><g stroke="#2a2433" stroke-width="1.1"><g transform="translate(642.38,439.18) scale(0.66)"><path d="M0.6,0.6 L2,4.6 L3.4,0.6"/></g></g><g stroke="#2a2433" stroke-width="1.1"><g transform="translate(634.48,439.18) scale(0.66)"><path d="M0.6,4.6 L2,0.6 L3.4,4.6"/></g></g><g stroke="#2a2433" stroke-width="1.1"><g transform="translate(626.58,439.18) scale(0.66)"><path d="M2.6,0.6 C0.8,0.6 0.8,2.6 2.6,2.2 M2.6,0.6 L2.6,4.6"/></g></g><g stroke="#9a62dc" stroke-width="1.1"><g transform="translate(617.53,439.18) scale(0.66)"><path d="M1.8,0.6 L2.2,4.6"/></g><g transform="translate(619.83,439.18) scale(0.66)"><circle cx="2" cy="3" r="0.75" fill="#9a62dc" stroke="none"/></g></g><g stroke="#2a2433" stroke-width="1.1"><g transform="translate(664.93,446.38) scale(0.66)"><path d="M1.8,0.6 L2.2,4.6"/></g><g transform="translate(667.23,446.38) scale(0.66)"><path d="M1.8,0.6 L2.2,4.6"/></g></g><g stroke="#2a2433" stroke-width="1.1"><g transform="translate(657.03,446.38) scale(0.66)"><path d="M1.8,0.6 L2.2,4.6"/></g><g transform="translate(659.33,446.38) scale(0.66)"><path d="M0.9,0.7 C1.4,1.6 2.6,1.6 3.2,0.5 M0.9,0.7 L1.9,4.6"/></g></g><g stroke="#2a2433" stroke-width="1.1"><g transform="translate(649.13,446.38) scale(0.66)"><path d="M1.8,0.6 L2.2,4.6"/></g><g transform="translate(651.43,446.38) scale(0.66)"><path d="M0.6,0.8 L1.2,1.6 L1.9,0.7 L2.6,1.6 L3.4,0.5 M0.6,0.8 L1.6,4.6"/></g></g><g stroke="#2a2433" stroke-width="1.1"><g transform="translate(641.23,446.38) scale(0.66)"><path d="M1.8,0.6 L2.2,4.6"/></g><g transform="translate(643.53,446.38) scale(0.66)"><path d="M3.3,0.6 C1.2,0.4 1.0,2.0 2.6,2.1 C0.6,2.2 0.8,4.2 3.4,3.9 M2.6,3.9 L2.8,4.6"/></g></g><g stroke="#2a2433" stroke-width="1.1"><g transform="translate(633.33,446.38) scale(0.66)"><path d="M1.8,0.6 L2.2,4.6"/></g><g transform="translate(635.63,446.38) scale(0.66)"><path d="M2,0.6 C0.4,2.2 0.6,4.5 2,4.5 C3.4,4.5 3.6,2.2 2,0.6Z"/></g></g><g stroke="#2a2433" stroke-width="1.1"><g transform="translate(625.43,446.38) scale(0.66)"><path d="M1.8,0.6 L2.2,4.6"/></g><g transform="translate(627.73,446.38) scale(0.66)"><path d="M0.8,0.8 C1.0,1.9 2.8,2.0 3.1,0.8 M3.1,0.8 L1.6,4.6"/></g></g><g stroke="#9a62dc" stroke-width="1.1"><g transform="translate(617.53,446.38) scale(0.66)"><path d="M1.8,0.6 L2.2,4.6"/></g><g transform="translate(619.83,446.38) scale(0.66)"><path d="M0.6,0.6 L2,4.6 L3.4,0.6"/></g></g><g stroke="#2a2433" stroke-width="1.1"><g transform="translate(664.93,453.58) scale(0.66)"><path d="M1.8,0.6 L2.2,4.6"/></g><g transform="translate(667.23,453.58) scale(0.66)"><path d="M0.6,4.6 L2,0.6 L3.4,4.6"/></g></g><g stroke="#2a2433" stroke-width="1.1"><g transform="translate(657.03,453.58) scale(0.66)"><path d="M1.8,0.6 L2.2,4.6"/></g><g transform="translate(659.33,453.58) scale(0.66)"><path d="M2.6,0.6 C0.8,0.6 0.8,2.6 2.6,2.2 M2.6,0.6 L2.6,4.6"/></g></g><g stroke="#2a2433" stroke-width="1.1"><g transform="translate(649.13,453.58) scale(0.66)"><path d="M0.9,0.7 C1.4,1.6 2.6,1.6 3.2,0.5 M0.9,0.7 L1.9,4.6"/></g><g transform="translate(651.43,453.58) scale(0.66)"><circle cx="2" cy="3" r="0.75" fill="#2a2433" stroke="none"/></g></g><g stroke="#2a2433" stroke-width="1.1"><g transform="translate(641.23,453.58) scale(0.66)"><path d="M0.9,0.7 C1.4,1.6 2.6,1.6 3.2,0.5 M0.9,0.7 L1.9,4.6"/></g><g transform="translate(643.53,453.58) scale(0.66)"><path d="M1.8,0.6 L2.2,4.6"/></g></g><g stroke="#2a2433" stroke-width="1.1"><g transform="translate(633.33,453.58) scale(0.66)"><path d="M0.9,0.7 C1.4,1.6 2.6,1.6 3.2,0.5 M0.9,0.7 L1.9,4.6"/></g><g transform="translate(635.63,453.58) scale(0.66)"><path d="M0.9,0.7 C1.4,1.6 2.6,1.6 3.2,0.5 M0.9,0.7 L1.9,4.6"/></g></g><g stroke="#2a2433" stroke-width="1.1"><g transform="translate(625.43,453.58) scale(0.66)"><path d="M0.9,0.7 C1.4,1.6 2.6,1.6 3.2,0.5 M0.9,0.7 L1.9,4.6"/></g><g transform="translate(627.73,453.58) scale(0.66)"><path d="M0.6,0.8 L1.2,1.6 L1.9,0.7 L2.6,1.6 L3.4,0.5 M0.6,0.8 L1.6,4.6"/></g></g><g stroke="#9a62dc" stroke-width="1.1"><g transform="translate(617.53,453.58) scale(0.66)"><path d="M0.9,0.7 C1.4,1.6 2.6,1.6 3.2,0.5 M0.9,0.7 L1.9,4.6"/></g><g transform="translate(619.83,453.58) scale(0.66)"><path d="M3.3,0.6 C1.2,0.4 1.0,2.0 2.6,2.1 C0.6,2.2 0.8,4.2 3.4,3.9 M2.6,3.9 L2.8,4.6"/></g></g><g stroke="#2a2433" stroke-width="1.1"><g transform="translate(664.93,460.78) scale(0.66)"><path d="M0.9,0.7 C1.4,1.6 2.6,1.6 3.2,0.5 M0.9,0.7 L1.9,4.6"/></g><g transform="translate(667.23,460.78) scale(0.66)"><path d="M2,0.6 C0.4,2.2 0.6,4.5 2,4.5 C3.4,4.5 3.6,2.2 2,0.6Z"/></g></g><g stroke="#2a2433" stroke-width="1.1"><g transform="translate(657.03,460.78) scale(0.66)"><path d="M0.9,0.7 C1.4,1.6 2.6,1.6 3.2,0.5 M0.9,0.7 L1.9,4.6"/></g><g transform="translate(659.33,460.78) scale(0.66)"><path d="M0.8,0.8 C1.0,1.9 2.8,2.0 3.1,0.8 M3.1,0.8 L1.6,4.6"/></g></g><g stroke="#2a2433" stroke-width="1.1"><g transform="translate(649.13,460.78) scale(0.66)"><path d="M0.9,0.7 C1.4,1.6 2.6,1.6 3.2,0.5 M0.9,0.7 L1.9,4.6"/></g><g transform="translate(651.43,460.78) scale(0.66)"><path d="M0.6,0.6 L2,4.6 L3.4,0.6"/></g></g><g stroke="#2a2433" stroke-width="1.1"><g transform="translate(641.23,460.78) scale(0.66)"><path d="M0.9,0.7 C1.4,1.6 2.6,1.6 3.2,0.5 M0.9,0.7 L1.9,4.6"/></g><g transform="translate(643.53,460.78) scale(0.66)"><path d="M0.6,4.6 L2,0.6 L3.4,4.6"/></g></g><g stroke="#2a2433" stroke-width="1.1"><g transform="translate(633.33,460.78) scale(0.66)"><path d="M0.9,0.7 C1.4,1.6 2.6,1.6 3.2,0.5 M0.9,0.7 L1.9,4.6"/></g><g transform="translate(635.63,460.78) scale(0.66)"><path d="M2.6,0.6 C0.8,0.6 0.8,2.6 2.6,2.2 M2.6,0.6 L2.6,4.6"/></g></g><g stroke="#2a2433" stroke-width="1.1"><g transform="translate(625.43,460.78) scale(0.66)"><path d="M0.6,0.8 L1.2,1.6 L1.9,0.7 L2.6,1.6 L3.4,0.5 M0.6,0.8 L1.6,4.6"/></g><g transform="translate(627.73,460.78) scale(0.66)"><circle cx="2" cy="3" r="0.75" fill="#2a2433" stroke="none"/></g></g><path d="M579.2,413.1 L578.7,416.3 M579.2,416.3 Q578.2,414.8 577.1,416.3 Q575.8,414.8 574.4,416.3 Q573.1,414.8 571.8,416.3 Q571.0,414.8 570.2,416.3 C569.2,418.8 567.7,416.3 568.7,414.3" stroke="#e8609e" stroke-width="1.0" fill="none"/><g transform="translate(595.80,421.90) scale(0.85)" stroke="#2a2433" stroke-width="1.05"><path d="M0.6,3.8 C0.6,2 2,1.8 2.4,3 L3.4,1 L3.6,3.5 C3.8,4.4 5,4.2 5.4,2.6"/></g><g transform="translate(587.90,421.90) scale(0.85)" stroke="#2a2433" stroke-width="1.05"><path d="M1.2,3.2 C1.2,1.6 4.2,1.6 4.2,3.2 C4.2,4.4 1.2,4.4 1.2,3.2Z"/></g><g transform="translate(580.00,421.90) scale(0.85)" stroke="#2a2433" stroke-width="1.05"><path d="M2.2,2.2 L3,3.6"/></g><g transform="translate(572.10,421.90) scale(0.85)" stroke="#2a2433" stroke-width="1.05"><path d="M0.5,3.6 C0.8,1.6 2.8,1.6 2.9,3.4 C3.2,1.8 5,1.8 5.4,3.4"/></g><g transform="translate(564.20,421.90) scale(0.85)" stroke="#2a2433" stroke-width="1.05"><path d="M3.6,1.4 C1.4,1 0.6,2.6 1.8,3.2 C0.4,3.6 0.8,5 3.6,4.6"/></g><g transform="translate(556.30,421.90) scale(0.85)" stroke="#2a2433" stroke-width="1.05"><path d="M0.8,1.6 L2.2,4.2 L3.6,1.6"/></g><g transform="translate(548.40,421.90) scale(0.85)" stroke="#2a2433" stroke-width="1.05"><path d="M3.6,1.4 C1.4,1 0.6,2.6 1.8,3.2 C0.4,3.6 0.8,5 3.6,4.6"/></g><g stroke="#9a62dc" stroke-width="1.1"><g transform="translate(549.68,431.78) scale(0.66)"><path d="M1.8,0.6 L2.2,4.6"/></g></g><g stroke="#2a2433" stroke-width="1.1"><g transform="translate(597.08,439.18) scale(0.66)"><path d="M0.9,0.7 C1.4,1.6 2.6,1.6 3.2,0.5 M0.9,0.7 L1.9,4.6"/></g></g><g stroke="#2a2433" stroke-width="1.1"><g transform="translate(589.18,439.18) scale(0.66)"><path d="M0.6,0.8 L1.2,1.6 L1.9,0.7 L2.6,1.6 L3.4,0.5 M0.6,0.8 L1.6,4.6"/></g></g><g stroke="#2a2433" stroke-width="1.1"><g transform="translate(581.28,439.18) scale(0.66)"><path d="M3.3,0.6 C1.2,0.4 1.0,2.0 2.6,2.1 C0.6,2.2 0.8,4.2 3.4,3.9 M2.6,3.9 L2.8,4.6"/></g></g><g stroke="#2a2433" stroke-width="1.1"><g transform="translate(573.38,439.18) scale(0.66)"><path d="M2,0.6 C0.4,2.2 0.6,4.5 2,4.5 C3.4,4.5 3.6,2.2 2,0.6Z"/></g></g><g stroke="#2a2433" stroke-width="1.1"><g transform="translate(565.48,439.18) scale(0.66)"><path d="M0.8,0.8 C1.0,1.9 2.8,2.0 3.1,0.8 M3.1,0.8 L1.6,4.6"/></g></g><g stroke="#2a2433" stroke-width="1.1"><g transform="translate(557.58,439.18) scale(0.66)"><path d="M0.6,0.6 L2,4.6 L3.4,0.6"/></g></g><g stroke="#9a62dc" stroke-width="1.1"><g transform="translate(549.68,439.18) scale(0.66)"><path d="M0.6,4.6 L2,0.6 L3.4,4.6"/></g></g><g stroke="#2a2433" stroke-width="1.1"><g transform="translate(597.08,446.38) scale(0.66)"><path d="M2.6,0.6 C0.8,0.6 0.8,2.6 2.6,2.2 M2.6,0.6 L2.6,4.6"/></g></g><g stroke="#2a2433" stroke-width="1.1"><g transform="translate(588.03,446.38) scale(0.66)"><path d="M1.8,0.6 L2.2,4.6"/></g><g transform="translate(590.33,446.38) scale(0.66)"><circle cx="2" cy="3" r="0.75" fill="#2a2433" stroke="none"/></g></g><g stroke="#2a2433" stroke-width="1.1"><g transform="translate(580.13,446.38) scale(0.66)"><path d="M1.8,0.6 L2.2,4.6"/></g><g transform="translate(582.43,446.38) scale(0.66)"><path d="M1.8,0.6 L2.2,4.6"/></g></g><g stroke="#2a2433" stroke-width="1.1"><g transform="translate(572.23,446.38) scale(0.66)"><path d="M1.8,0.6 L2.2,4.6"/></g><g transform="translate(574.53,446.38) scale(0.66)"><path d="M0.9,0.7 C1.4,1.6 2.6,1.6 3.2,0.5 M0.9,0.7 L1.9,4.6"/></g></g><g stroke="#2a2433" stroke-width="1.1"><g transform="translate(564.33,446.38) scale(0.66)"><path d="M1.8,0.6 L2.2,4.6"/></g><g transform="translate(566.63,446.38) scale(0.66)"><path d="M0.6,0.8 L1.2,1.6 L1.9,0.7 L2.6,1.6 L3.4,0.5 M0.6,0.8 L1.6,4.6"/></g></g><g stroke="#2a2433" stroke-width="1.1"><g transform="translate(556.43,446.38) scale(0.66)"><path d="M1.8,0.6 L2.2,4.6"/></g><g transform="translate(558.73,446.38) scale(0.66)"><path d="M3.3,0.6 C1.2,0.4 1.0,2.0 2.6,2.1 C0.6,2.2 0.8,4.2 3.4,3.9 M2.6,3.9 L2.8,4.6"/></g></g><g stroke="#9a62dc" stroke-width="1.1"><g transform="translate(548.53,446.38) scale(0.66)"><path d="M1.8,0.6 L2.2,4.6"/></g><g transform="translate(550.83,446.38) scale(0.66)"><path d="M2,0.6 C0.4,2.2 0.6,4.5 2,4.5 C3.4,4.5 3.6,2.2 2,0.6Z"/></g></g><g stroke="#2a2433" stroke-width="1.1"><g transform="translate(595.93,453.58) scale(0.66)"><path d="M1.8,0.6 L2.2,4.6"/></g><g transform="translate(598.23,453.58) scale(0.66)"><path d="M0.8,0.8 C1.0,1.9 2.8,2.0 3.1,0.8 M3.1,0.8 L1.6,4.6"/></g></g><g stroke="#2a2433" stroke-width="1.1"><g transform="translate(588.03,453.58) scale(0.66)"><path d="M1.8,0.6 L2.2,4.6"/></g><g transform="translate(590.33,453.58) scale(0.66)"><path d="M0.6,0.6 L2,4.6 L3.4,0.6"/></g></g><g stroke="#2a2433" stroke-width="1.1"><g transform="translate(580.13,453.58) scale(0.66)"><path d="M1.8,0.6 L2.2,4.6"/></g><g transform="translate(582.43,453.58) scale(0.66)"><path d="M0.6,4.6 L2,0.6 L3.4,4.6"/></g></g><g stroke="#2a2433" stroke-width="1.1"><g transform="translate(572.23,453.58) scale(0.66)"><path d="M1.8,0.6 L2.2,4.6"/></g><g transform="translate(574.53,453.58) scale(0.66)"><path d="M2.6,0.6 C0.8,0.6 0.8,2.6 2.6,2.2 M2.6,0.6 L2.6,4.6"/></g></g><g stroke="#2a2433" stroke-width="1.1"><g transform="translate(564.33,453.58) scale(0.66)"><path d="M0.9,0.7 C1.4,1.6 2.6,1.6 3.2,0.5 M0.9,0.7 L1.9,4.6"/></g><g transform="translate(566.63,453.58) scale(0.66)"><circle cx="2" cy="3" r="0.75" fill="#2a2433" stroke="none"/></g></g><g stroke="#2a2433" stroke-width="1.1"><g transform="translate(556.43,453.58) scale(0.66)"><path d="M0.9,0.7 C1.4,1.6 2.6,1.6 3.2,0.5 M0.9,0.7 L1.9,4.6"/></g><g transform="translate(558.73,453.58) scale(0.66)"><path d="M1.8,0.6 L2.2,4.6"/></g></g><g stroke="#9a62dc" stroke-width="1.1"><g transform="translate(548.53,453.58) scale(0.66)"><path d="M0.9,0.7 C1.4,1.6 2.6,1.6 3.2,0.5 M0.9,0.7 L1.9,4.6"/></g><g transform="translate(550.83,453.58) scale(0.66)"><path d="M0.9,0.7 C1.4,1.6 2.6,1.6 3.2,0.5 M0.9,0.7 L1.9,4.6"/></g></g><g stroke="#2a2433" stroke-width="1.1"><g transform="translate(595.93,460.78) scale(0.66)"><path d="M0.9,0.7 C1.4,1.6 2.6,1.6 3.2,0.5 M0.9,0.7 L1.9,4.6"/></g><g transform="translate(598.23,460.78) scale(0.66)"><path d="M0.6,0.8 L1.2,1.6 L1.9,0.7 L2.6,1.6 L3.4,0.5 M0.6,0.8 L1.6,4.6"/></g></g><g stroke="#2a2433" stroke-width="1.1"><g transform="translate(588.03,460.78) scale(0.66)"><path d="M0.9,0.7 C1.4,1.6 2.6,1.6 3.2,0.5 M0.9,0.7 L1.9,4.6"/></g><g transform="translate(590.33,460.78) scale(0.66)"><path d="M3.3,0.6 C1.2,0.4 1.0,2.0 2.6,2.1 C0.6,2.2 0.8,4.2 3.4,3.9 M2.6,3.9 L2.8,4.6"/></g></g><g stroke="#2a2433" stroke-width="1.1"><g transform="translate(580.13,460.78) scale(0.66)"><path d="M0.9,0.7 C1.4,1.6 2.6,1.6 3.2,0.5 M0.9,0.7 L1.9,4.6"/></g><g transform="translate(582.43,460.78) scale(0.66)"><path d="M2,0.6 C0.4,2.2 0.6,4.5 2,4.5 C3.4,4.5 3.6,2.2 2,0.6Z"/></g></g><g stroke="#2a2433" stroke-width="1.1"><g transform="translate(572.23,460.78) scale(0.66)"><path d="M0.9,0.7 C1.4,1.6 2.6,1.6 3.2,0.5 M0.9,0.7 L1.9,4.6"/></g><g transform="translate(574.53,460.78) scale(0.66)"><path d="M0.8,0.8 C1.0,1.9 2.8,2.0 3.1,0.8 M3.1,0.8 L1.6,4.6"/></g></g><g stroke="#2a2433" stroke-width="1.1"><g transform="translate(564.33,460.78) scale(0.66)"><path d="M0.9,0.7 C1.4,1.6 2.6,1.6 3.2,0.5 M0.9,0.7 L1.9,4.6"/></g><g transform="translate(566.63,460.78) scale(0.66)"><path d="M0.6,0.6 L2,4.6 L3.4,0.6"/></g></g><g stroke="#2a2433" stroke-width="1.1"><g transform="translate(556.43,460.78) scale(0.66)"><path d="M0.9,0.7 C1.4,1.6 2.6,1.6 3.2,0.5 M0.9,0.7 L1.9,4.6"/></g><g transform="translate(558.73,460.78) scale(0.66)"><path d="M0.6,4.6 L2,0.6 L3.4,4.6"/></g></g><g stroke="#9a62dc" stroke-width="1.1"><g transform="translate(548.53,460.78) scale(0.66)"><path d="M0.9,0.7 C1.4,1.6 2.6,1.6 3.2,0.5 M0.9,0.7 L1.9,4.6"/></g><g transform="translate(550.83,460.78) scale(0.66)"><path d="M2.6,0.6 C0.8,0.6 0.8,2.6 2.6,2.2 M2.6,0.6 L2.6,4.6"/></g></g><g stroke="#2a2433" stroke-width="1.1"><g transform="translate(595.93,431.78) scale(0.66)"><path d="M0.6,0.8 L1.2,1.6 L1.9,0.7 L2.6,1.6 L3.4,0.5 M0.6,0.8 L1.6,4.6"/></g><g transform="translate(598.23,431.78) scale(0.66)"><circle cx="2" cy="3" r="0.75" fill="#2a2433" stroke="none"/></g></g><path d="M648.2,478.7 L647.7,481.9 M648.2,481.9 C647.7,479.4 645.3,479.4 644.8,481.9 Q643.8,480.4 642.8,481.9 Q641.2,480.4 639.7,481.9 C638.2,484.4 636.7,481.9 637.7,479.9" stroke="#e8609e" stroke-width="1.0" fill="none"/><g transform="translate(664.80,487.50) scale(0.85)" stroke="#2a2433" stroke-width="1.05"><path d="M0.6,3.8 C0.6,2 2,1.8 2.4,3 L3.4,1 L3.6,3.5 C3.8,4.4 5,4.2 5.4,2.6"/></g><g transform="translate(656.90,487.50) scale(0.85)" stroke="#2a2433" stroke-width="1.05"><path d="M1.2,3.2 C1.2,1.6 4.2,1.6 4.2,3.2 C4.2,4.4 1.2,4.4 1.2,3.2Z"/></g><g transform="translate(649.00,487.50) scale(0.85)" stroke="#2a2433" stroke-width="1.05"><path d="M2.2,2.2 L3,3.6"/></g><g transform="translate(641.10,487.50) scale(0.85)" stroke="#2a2433" stroke-width="1.05"><path d="M0.5,3.6 C0.8,1.6 2.8,1.6 2.9,3.4 C3.2,1.8 5,1.8 5.4,3.4"/></g><g transform="translate(633.20,487.50) scale(0.85)" stroke="#2a2433" stroke-width="1.05"><path d="M3.6,1.4 C1.4,1 0.6,2.6 1.8,3.2 C0.4,3.6 0.8,5 3.6,4.6"/></g><g transform="translate(625.30,487.50) scale(0.85)" stroke="#2a2433" stroke-width="1.05"><path d="M0.8,1.6 L2.2,4.2 L3.6,1.6"/></g><g transform="translate(617.40,487.50) scale(0.85)" stroke="#2a2433" stroke-width="1.05"><path d="M3.6,1.4 C1.4,1 0.6,2.6 1.8,3.2 C0.4,3.6 0.8,5 3.6,4.6"/></g><g stroke="#2a2433" stroke-width="1.1"><g transform="translate(658.18,497.38) scale(0.66)"><path d="M1.8,0.6 L2.2,4.6"/></g></g><g stroke="#2a2433" stroke-width="1.1"><g transform="translate(650.28,497.38) scale(0.66)"><path d="M0.9,0.7 C1.4,1.6 2.6,1.6 3.2,0.5 M0.9,0.7 L1.9,4.6"/></g></g><g stroke="#2a2433" stroke-width="1.1"><g transform="translate(642.38,497.38) scale(0.66)"><path d="M0.6,0.8 L1.2,1.6 L1.9,0.7 L2.6,1.6 L3.4,0.5 M0.6,0.8 L1.6,4.6"/></g></g><g stroke="#2a2433" stroke-width="1.1"><g transform="translate(634.48,497.38) scale(0.66)"><path d="M3.3,0.6 C1.2,0.4 1.0,2.0 2.6,2.1 C0.6,2.2 0.8,4.2 3.4,3.9 M2.6,3.9 L2.8,4.6"/></g></g><g stroke="#2a2433" stroke-width="1.1"><g transform="translate(626.58,497.38) scale(0.66)"><path d="M2,0.6 C0.4,2.2 0.6,4.5 2,4.5 C3.4,4.5 3.6,2.2 2,0.6Z"/></g></g><g stroke="#9a62dc" stroke-width="1.1"><g transform="translate(618.68,497.38) scale(0.66)"><path d="M0.8,0.8 C1.0,1.9 2.8,2.0 3.1,0.8 M3.1,0.8 L1.6,4.6"/></g></g><g stroke="#2a2433" stroke-width="1.1"><g transform="translate(666.08,504.78) scale(0.66)"><path d="M0.6,0.6 L2,4.6 L3.4,0.6"/></g></g><g stroke="#2a2433" stroke-width="1.1"><g transform="translate(658.18,504.78) scale(0.66)"><path d="M0.6,4.6 L2,0.6 L3.4,4.6"/></g></g><g stroke="#2a2433" stroke-width="1.1"><g transform="translate(650.28,504.78) scale(0.66)"><path d="M2.6,0.6 C0.8,0.6 0.8,2.6 2.6,2.2 M2.6,0.6 L2.6,4.6"/></g></g><g stroke="#2a2433" stroke-width="1.1"><g transform="translate(641.23,504.78) scale(0.66)"><path d="M1.8,0.6 L2.2,4.6"/></g><g transform="translate(643.53,504.78) scale(0.66)"><circle cx="2" cy="3" r="0.75" fill="#2a2433" stroke="none"/></g></g><g stroke="#2a2433" stroke-width="1.1"><g transform="translate(633.33,504.78) scale(0.66)"><path d="M1.8,0.6 L2.2,4.6"/></g><g transform="translate(635.63,504.78) scale(0.66)"><path d="M1.8,0.6 L2.2,4.6"/></g></g><g stroke="#2a2433" stroke-width="1.1"><g transform="translate(625.43,504.78) scale(0.66)"><path d="M1.8,0.6 L2.2,4.6"/></g><g transform="translate(627.73,504.78) scale(0.66)"><path d="M0.9,0.7 C1.4,1.6 2.6,1.6 3.2,0.5 M0.9,0.7 L1.9,4.6"/></g></g><g stroke="#9a62dc" stroke-width="1.1"><g transform="translate(617.53,504.78) scale(0.66)"><path d="M1.8,0.6 L2.2,4.6"/></g><g transform="translate(619.83,504.78) scale(0.66)"><path d="M0.6,0.8 L1.2,1.6 L1.9,0.7 L2.6,1.6 L3.4,0.5 M0.6,0.8 L1.6,4.6"/></g></g><g stroke="#2a2433" stroke-width="1.1"><g transform="translate(664.93,511.98) scale(0.66)"><path d="M1.8,0.6 L2.2,4.6"/></g><g transform="translate(667.23,511.98) scale(0.66)"><path d="M3.3,0.6 C1.2,0.4 1.0,2.0 2.6,2.1 C0.6,2.2 0.8,4.2 3.4,3.9 M2.6,3.9 L2.8,4.6"/></g></g><g stroke="#2a2433" stroke-width="1.1"><g transform="translate(657.03,511.98) scale(0.66)"><path d="M1.8,0.6 L2.2,4.6"/></g><g transform="translate(659.33,511.98) scale(0.66)"><path d="M2,0.6 C0.4,2.2 0.6,4.5 2,4.5 C3.4,4.5 3.6,2.2 2,0.6Z"/></g></g><g stroke="#2a2433" stroke-width="1.1"><g transform="translate(649.13,511.98) scale(0.66)"><path d="M1.8,0.6 L2.2,4.6"/></g><g transform="translate(651.43,511.98) scale(0.66)"><path d="M0.8,0.8 C1.0,1.9 2.8,2.0 3.1,0.8 M3.1,0.8 L1.6,4.6"/></g></g><g stroke="#2a2433" stroke-width="1.1"><g transform="translate(641.23,511.98) scale(0.66)"><path d="M1.8,0.6 L2.2,4.6"/></g><g transform="translate(643.53,511.98) scale(0.66)"><path d="M0.6,0.6 L2,4.6 L3.4,0.6"/></g></g><g stroke="#2a2433" stroke-width="1.1"><g transform="translate(633.33,511.98) scale(0.66)"><path d="M1.8,0.6 L2.2,4.6"/></g><g transform="translate(635.63,511.98) scale(0.66)"><path d="M0.6,4.6 L2,0.6 L3.4,4.6"/></g></g><g stroke="#2a2433" stroke-width="1.1"><g transform="translate(625.43,511.98) scale(0.66)"><path d="M1.8,0.6 L2.2,4.6"/></g><g transform="translate(627.73,511.98) scale(0.66)"><path d="M2.6,0.6 C0.8,0.6 0.8,2.6 2.6,2.2 M2.6,0.6 L2.6,4.6"/></g></g><g stroke="#9a62dc" stroke-width="1.1"><g transform="translate(617.53,511.98) scale(0.66)"><path d="M0.9,0.7 C1.4,1.6 2.6,1.6 3.2,0.5 M0.9,0.7 L1.9,4.6"/></g><g transform="translate(619.83,511.98) scale(0.66)"><circle cx="2" cy="3" r="0.75" fill="#9a62dc" stroke="none"/></g></g><g stroke="#2a2433" stroke-width="1.1"><g transform="translate(664.93,519.18) scale(0.66)"><path d="M0.9,0.7 C1.4,1.6 2.6,1.6 3.2,0.5 M0.9,0.7 L1.9,4.6"/></g><g transform="translate(667.23,519.18) scale(0.66)"><path d="M1.8,0.6 L2.2,4.6"/></g></g><g stroke="#2a2433" stroke-width="1.1"><g transform="translate(657.03,519.18) scale(0.66)"><path d="M0.9,0.7 C1.4,1.6 2.6,1.6 3.2,0.5 M0.9,0.7 L1.9,4.6"/></g><g transform="translate(659.33,519.18) scale(0.66)"><path d="M0.9,0.7 C1.4,1.6 2.6,1.6 3.2,0.5 M0.9,0.7 L1.9,4.6"/></g></g><g stroke="#2a2433" stroke-width="1.1"><g transform="translate(649.13,519.18) scale(0.66)"><path d="M0.9,0.7 C1.4,1.6 2.6,1.6 3.2,0.5 M0.9,0.7 L1.9,4.6"/></g><g transform="translate(651.43,519.18) scale(0.66)"><path d="M0.6,0.8 L1.2,1.6 L1.9,0.7 L2.6,1.6 L3.4,0.5 M0.6,0.8 L1.6,4.6"/></g></g><g stroke="#2a2433" stroke-width="1.1"><g transform="translate(641.23,519.18) scale(0.66)"><path d="M0.9,0.7 C1.4,1.6 2.6,1.6 3.2,0.5 M0.9,0.7 L1.9,4.6"/></g><g transform="translate(643.53,519.18) scale(0.66)"><path d="M3.3,0.6 C1.2,0.4 1.0,2.0 2.6,2.1 C0.6,2.2 0.8,4.2 3.4,3.9 M2.6,3.9 L2.8,4.6"/></g></g><g stroke="#2a2433" stroke-width="1.1"><g transform="translate(633.33,519.18) scale(0.66)"><path d="M0.9,0.7 C1.4,1.6 2.6,1.6 3.2,0.5 M0.9,0.7 L1.9,4.6"/></g><g transform="translate(635.63,519.18) scale(0.66)"><path d="M2,0.6 C0.4,2.2 0.6,4.5 2,4.5 C3.4,4.5 3.6,2.2 2,0.6Z"/></g></g><g stroke="#2a2433" stroke-width="1.1"><g transform="translate(625.43,519.18) scale(0.66)"><path d="M0.9,0.7 C1.4,1.6 2.6,1.6 3.2,0.5 M0.9,0.7 L1.9,4.6"/></g><g transform="translate(627.73,519.18) scale(0.66)"><path d="M0.8,0.8 C1.0,1.9 2.8,2.0 3.1,0.8 M3.1,0.8 L1.6,4.6"/></g></g><g stroke="#9a62dc" stroke-width="1.1"><g transform="translate(617.53,519.18) scale(0.66)"><path d="M0.9,0.7 C1.4,1.6 2.6,1.6 3.2,0.5 M0.9,0.7 L1.9,4.6"/></g><g transform="translate(619.83,519.18) scale(0.66)"><path d="M0.6,0.6 L2,4.6 L3.4,0.6"/></g></g><g stroke="#2a2433" stroke-width="1.1"><g transform="translate(664.93,526.38) scale(0.66)"><path d="M0.9,0.7 C1.4,1.6 2.6,1.6 3.2,0.5 M0.9,0.7 L1.9,4.6"/></g><g transform="translate(667.23,526.38) scale(0.66)"><path d="M0.6,4.6 L2,0.6 L3.4,4.6"/></g></g><g stroke="#2a2433" stroke-width="1.1"><g transform="translate(657.03,526.38) scale(0.66)"><path d="M0.9,0.7 C1.4,1.6 2.6,1.6 3.2,0.5 M0.9,0.7 L1.9,4.6"/></g><g transform="translate(659.33,526.38) scale(0.66)"><path d="M2.6,0.6 C0.8,0.6 0.8,2.6 2.6,2.2 M2.6,0.6 L2.6,4.6"/></g></g><g stroke="#2a2433" stroke-width="1.1"><g transform="translate(649.13,526.38) scale(0.66)"><path d="M0.6,0.8 L1.2,1.6 L1.9,0.7 L2.6,1.6 L3.4,0.5 M0.6,0.8 L1.6,4.6"/></g><g transform="translate(651.43,526.38) scale(0.66)"><circle cx="2" cy="3" r="0.75" fill="#2a2433" stroke="none"/></g></g><path d="M579.7,478.7 L579.2,481.9 M579.7,481.9 C579.2,479.4 577.5,479.4 577.0,481.9 C576.5,479.4 574.9,479.4 574.4,481.9 L573.9,478.7 M574.1,481.9 L571.1,481.9 C568.7,484.4 567.2,481.9 568.2,479.9" stroke="#e8609e" stroke-width="1.0" fill="none"/><g transform="translate(595.80,487.50) scale(0.85)" stroke="#2a2433" stroke-width="1.05"><path d="M0.6,3.8 C0.6,2 2,1.8 2.4,3 L3.4,1 L3.6,3.5 C3.8,4.4 5,4.2 5.4,2.6"/></g><g transform="translate(587.90,487.50) scale(0.85)" stroke="#2a2433" stroke-width="1.05"><path d="M1.2,3.2 C1.2,1.6 4.2,1.6 4.2,3.2 C4.2,4.4 1.2,4.4 1.2,3.2Z"/></g><g transform="translate(580.00,487.50) scale(0.85)" stroke="#2a2433" stroke-width="1.05"><path d="M2.2,2.2 L3,3.6"/></g><g transform="translate(572.10,487.50) scale(0.85)" stroke="#2a2433" stroke-width="1.05"><path d="M0.5,3.6 C0.8,1.6 2.8,1.6 2.9,3.4 C3.2,1.8 5,1.8 5.4,3.4"/></g><g transform="translate(564.20,487.50) scale(0.85)" stroke="#2a2433" stroke-width="1.05"><path d="M3.6,1.4 C1.4,1 0.6,2.6 1.8,3.2 C0.4,3.6 0.8,5 3.6,4.6"/></g><g transform="translate(556.30,487.50) scale(0.85)" stroke="#2a2433" stroke-width="1.05"><path d="M0.8,1.6 L2.2,4.2 L3.6,1.6"/></g><g transform="translate(548.40,487.50) scale(0.85)" stroke="#2a2433" stroke-width="1.05"><path d="M3.6,1.4 C1.4,1 0.6,2.6 1.8,3.2 C0.4,3.6 0.8,5 3.6,4.6"/></g><g stroke="#2a2433" stroke-width="1.1"><g transform="translate(573.38,497.38) scale(0.66)"><path d="M1.8,0.6 L2.2,4.6"/></g></g><g stroke="#2a2433" stroke-width="1.1"><g transform="translate(565.48,497.38) scale(0.66)"><path d="M0.9,0.7 C1.4,1.6 2.6,1.6 3.2,0.5 M0.9,0.7 L1.9,4.6"/></g></g><g stroke="#2a2433" stroke-width="1.1"><g transform="translate(557.58,497.38) scale(0.66)"><path d="M0.6,0.8 L1.2,1.6 L1.9,0.7 L2.6,1.6 L3.4,0.5 M0.6,0.8 L1.6,4.6"/></g></g><g stroke="#9a62dc" stroke-width="1.1"><g transform="translate(549.68,497.38) scale(0.66)"><path d="M3.3,0.6 C1.2,0.4 1.0,2.0 2.6,2.1 C0.6,2.2 0.8,4.2 3.4,3.9 M2.6,3.9 L2.8,4.6"/></g></g><g stroke="#2a2433" stroke-width="1.1"><g transform="translate(597.08,504.78) scale(0.66)"><path d="M2,0.6 C0.4,2.2 0.6,4.5 2,4.5 C3.4,4.5 3.6,2.2 2,0.6Z"/></g></g><g stroke="#2a2433" stroke-width="1.1"><g transform="translate(589.18,504.78) scale(0.66)"><path d="M0.8,0.8 C1.0,1.9 2.8,2.0 3.1,0.8 M3.1,0.8 L1.6,4.6"/></g></g><g stroke="#2a2433" stroke-width="1.1"><g transform="translate(581.28,504.78) scale(0.66)"><path d="M0.6,0.6 L2,4.6 L3.4,0.6"/></g></g><g stroke="#2a2433" stroke-width="1.1"><g transform="translate(573.38,504.78) scale(0.66)"><path d="M0.6,4.6 L2,0.6 L3.4,4.6"/></g></g><g stroke="#2a2433" stroke-width="1.1"><g transform="translate(565.48,504.78) scale(0.66)"><path d="M2.6,0.6 C0.8,0.6 0.8,2.6 2.6,2.2 M2.6,0.6 L2.6,4.6"/></g></g><g stroke="#2a2433" stroke-width="1.1"><g transform="translate(556.43,504.78) scale(0.66)"><path d="M1.8,0.6 L2.2,4.6"/></g><g transform="translate(558.73,504.78) scale(0.66)"><circle cx="2" cy="3" r="0.75" fill="#2a2433" stroke="none"/></g></g><g stroke="#9a62dc" stroke-width="1.1"><g transform="translate(548.53,504.78) scale(0.66)"><path d="M1.8,0.6 L2.2,4.6"/></g><g transform="translate(550.83,504.78) scale(0.66)"><path d="M1.8,0.6 L2.2,4.6"/></g></g><g stroke="#2a2433" stroke-width="1.1"><g transform="translate(595.93,511.98) scale(0.66)"><path d="M1.8,0.6 L2.2,4.6"/></g><g transform="translate(598.23,511.98) scale(0.66)"><path d="M0.9,0.7 C1.4,1.6 2.6,1.6 3.2,0.5 M0.9,0.7 L1.9,4.6"/></g></g><g stroke="#2a2433" stroke-width="1.1"><g transform="translate(588.03,511.98) scale(0.66)"><path d="M1.8,0.6 L2.2,4.6"/></g><g transform="translate(590.33,511.98) scale(0.66)"><path d="M0.6,0.8 L1.2,1.6 L1.9,0.7 L2.6,1.6 L3.4,0.5 M0.6,0.8 L1.6,4.6"/></g></g><g stroke="#2a2433" stroke-width="1.1"><g transform="translate(580.13,511.98) scale(0.66)"><path d="M1.8,0.6 L2.2,4.6"/></g><g transform="translate(582.43,511.98) scale(0.66)"><path d="M3.3,0.6 C1.2,0.4 1.0,2.0 2.6,2.1 C0.6,2.2 0.8,4.2 3.4,3.9 M2.6,3.9 L2.8,4.6"/></g></g><g stroke="#2a2433" stroke-width="1.1"><g transform="translate(572.23,511.98) scale(0.66)"><path d="M1.8,0.6 L2.2,4.6"/></g><g transform="translate(574.53,511.98) scale(0.66)"><path d="M2,0.6 C0.4,2.2 0.6,4.5 2,4.5 C3.4,4.5 3.6,2.2 2,0.6Z"/></g></g><g stroke="#2a2433" stroke-width="1.1"><g transform="translate(564.33,511.98) scale(0.66)"><path d="M1.8,0.6 L2.2,4.6"/></g><g transform="translate(566.63,511.98) scale(0.66)"><path d="M0.8,0.8 C1.0,1.9 2.8,2.0 3.1,0.8 M3.1,0.8 L1.6,4.6"/></g></g><g stroke="#2a2433" stroke-width="1.1"><g transform="translate(556.43,511.98) scale(0.66)"><path d="M1.8,0.6 L2.2,4.6"/></g><g transform="translate(558.73,511.98) scale(0.66)"><path d="M0.6,0.6 L2,4.6 L3.4,0.6"/></g></g><g stroke="#9a62dc" stroke-width="1.1"><g transform="translate(548.53,511.98) scale(0.66)"><path d="M1.8,0.6 L2.2,4.6"/></g><g transform="translate(550.83,511.98) scale(0.66)"><path d="M0.6,4.6 L2,0.6 L3.4,4.6"/></g></g><g stroke="#2a2433" stroke-width="1.1"><g transform="translate(595.93,519.18) scale(0.66)"><path d="M1.8,0.6 L2.2,4.6"/></g><g transform="translate(598.23,519.18) scale(0.66)"><path d="M2.6,0.6 C0.8,0.6 0.8,2.6 2.6,2.2 M2.6,0.6 L2.6,4.6"/></g></g><g stroke="#2a2433" stroke-width="1.1"><g transform="translate(588.03,519.18) scale(0.66)"><path d="M0.9,0.7 C1.4,1.6 2.6,1.6 3.2,0.5 M0.9,0.7 L1.9,4.6"/></g><g transform="translate(590.33,519.18) scale(0.66)"><circle cx="2" cy="3" r="0.75" fill="#2a2433" stroke="none"/></g></g><g stroke="#2a2433" stroke-width="1.1"><g transform="translate(580.13,519.18) scale(0.66)"><path d="M0.9,0.7 C1.4,1.6 2.6,1.6 3.2,0.5 M0.9,0.7 L1.9,4.6"/></g><g transform="translate(582.43,519.18) scale(0.66)"><path d="M1.8,0.6 L2.2,4.6"/></g></g><g stroke="#2a2433" stroke-width="1.1"><g transform="translate(572.23,519.18) scale(0.66)"><path d="M0.9,0.7 C1.4,1.6 2.6,1.6 3.2,0.5 M0.9,0.7 L1.9,4.6"/></g><g transform="translate(574.53,519.18) scale(0.66)"><path d="M0.9,0.7 C1.4,1.6 2.6,1.6 3.2,0.5 M0.9,0.7 L1.9,4.6"/></g></g><g stroke="#2a2433" stroke-width="1.1"><g transform="translate(564.33,519.18) scale(0.66)"><path d="M0.9,0.7 C1.4,1.6 2.6,1.6 3.2,0.5 M0.9,0.7 L1.9,4.6"/></g><g transform="translate(566.63,519.18) scale(0.66)"><path d="M0.6,0.8 L1.2,1.6 L1.9,0.7 L2.6,1.6 L3.4,0.5 M0.6,0.8 L1.6,4.6"/></g></g><g stroke="#2a2433" stroke-width="1.1"><g transform="translate(556.43,519.18) scale(0.66)"><path d="M0.9,0.7 C1.4,1.6 2.6,1.6 3.2,0.5 M0.9,0.7 L1.9,4.6"/></g><g transform="translate(558.73,519.18) scale(0.66)"><path d="M3.3,0.6 C1.2,0.4 1.0,2.0 2.6,2.1 C0.6,2.2 0.8,4.2 3.4,3.9 M2.6,3.9 L2.8,4.6"/></g></g><g stroke="#9a62dc" stroke-width="1.1"><g transform="translate(548.53,519.18) scale(0.66)"><path d="M0.9,0.7 C1.4,1.6 2.6,1.6 3.2,0.5 M0.9,0.7 L1.9,4.6"/></g><g transform="translate(550.83,519.18) scale(0.66)"><path d="M2,0.6 C0.4,2.2 0.6,4.5 2,4.5 C3.4,4.5 3.6,2.2 2,0.6Z"/></g></g><g stroke="#2a2433" stroke-width="1.1"><g transform="translate(595.93,526.38) scale(0.66)"><path d="M0.9,0.7 C1.4,1.6 2.6,1.6 3.2,0.5 M0.9,0.7 L1.9,4.6"/></g><g transform="translate(598.23,526.38) scale(0.66)"><path d="M0.8,0.8 C1.0,1.9 2.8,2.0 3.1,0.8 M3.1,0.8 L1.6,4.6"/></g></g><g stroke="#2a2433" stroke-width="1.1"><g transform="translate(588.03,526.38) scale(0.66)"><path d="M0.9,0.7 C1.4,1.6 2.6,1.6 3.2,0.5 M0.9,0.7 L1.9,4.6"/></g><g transform="translate(590.33,526.38) scale(0.66)"><path d="M0.6,0.6 L2,4.6 L3.4,0.6"/></g></g><g stroke="#2a2433" stroke-width="1.1"><g transform="translate(580.13,526.38) scale(0.66)"><path d="M0.9,0.7 C1.4,1.6 2.6,1.6 3.2,0.5 M0.9,0.7 L1.9,4.6"/></g><g transform="translate(582.43,526.38) scale(0.66)"><path d="M0.6,4.6 L2,0.6 L3.4,4.6"/></g></g><g stroke="#2a2433" stroke-width="1.1"><g transform="translate(572.23,526.38) scale(0.66)"><path d="M0.9,0.7 C1.4,1.6 2.6,1.6 3.2,0.5 M0.9,0.7 L1.9,4.6"/></g><g transform="translate(574.53,526.38) scale(0.66)"><path d="M2.6,0.6 C0.8,0.6 0.8,2.6 2.6,2.2 M2.6,0.6 L2.6,4.6"/></g></g><g stroke="#2a2433" stroke-width="1.1"><g transform="translate(564.33,526.38) scale(0.66)"><path d="M0.6,0.8 L1.2,1.6 L1.9,0.7 L2.6,1.6 L3.4,0.5 M0.6,0.8 L1.6,4.6"/></g><g transform="translate(566.63,526.38) scale(0.66)"><circle cx="2" cy="3" r="0.75" fill="#2a2433" stroke="none"/></g></g><path d="M650.7,544.3 L650.2,547.5 M650.7,547.5 L650.2,544.3 M650.4,547.5 L647.9,547.5 C646.9,549.0 645.3,544.5 645.3,547.5 C644.3,549.0 642.5,544.5 642.5,547.5 C641.5,549.0 640.2,544.5 640.2,547.5 C639.7,545.0 638.3,545.0 637.8,547.5 C635.7,550.0 634.2,547.5 635.2,545.5" stroke="#e8609e" stroke-width="1.0" fill="none"/><g transform="translate(664.80,553.10) scale(0.85)" stroke="#2a2433" stroke-width="1.05"><path d="M0.6,3.8 C0.6,2 2,1.8 2.4,3 L3.4,1 L3.6,3.5 C3.8,4.4 5,4.2 5.4,2.6"/></g><g transform="translate(656.90,553.10) scale(0.85)" stroke="#2a2433" stroke-width="1.05"><path d="M1.2,3.2 C1.2,1.6 4.2,1.6 4.2,3.2 C4.2,4.4 1.2,4.4 1.2,3.2Z"/></g><g transform="translate(649.00,553.10) scale(0.85)" stroke="#2a2433" stroke-width="1.05"><path d="M2.2,2.2 L3,3.6"/></g><g transform="translate(641.10,553.10) scale(0.85)" stroke="#2a2433" stroke-width="1.05"><path d="M0.5,3.6 C0.8,1.6 2.8,1.6 2.9,3.4 C3.2,1.8 5,1.8 5.4,3.4"/></g><g transform="translate(633.20,553.10) scale(0.85)" stroke="#2a2433" stroke-width="1.05"><path d="M3.6,1.4 C1.4,1 0.6,2.6 1.8,3.2 C0.4,3.6 0.8,5 3.6,4.6"/></g><g transform="translate(625.30,553.10) scale(0.85)" stroke="#2a2433" stroke-width="1.05"><path d="M0.8,1.6 L2.2,4.2 L3.6,1.6"/></g><g transform="translate(617.40,553.10) scale(0.85)" stroke="#2a2433" stroke-width="1.05"><path d="M3.6,1.4 C1.4,1 0.6,2.6 1.8,3.2 C0.4,3.6 0.8,5 3.6,4.6"/></g><g stroke="#2a2433" stroke-width="1.1"><g transform="translate(626.58,562.98) scale(0.66)"><path d="M1.8,0.6 L2.2,4.6"/></g></g><g stroke="#9a62dc" stroke-width="1.1"><g transform="translate(618.68,562.98) scale(0.66)"><path d="M0.9,0.7 C1.4,1.6 2.6,1.6 3.2,0.5 M0.9,0.7 L1.9,4.6"/></g></g><g stroke="#2a2433" stroke-width="1.1"><g transform="translate(666.08,570.38) scale(0.66)"><path d="M0.6,0.8 L1.2,1.6 L1.9,0.7 L2.6,1.6 L3.4,0.5 M0.6,0.8 L1.6,4.6"/></g></g><g stroke="#2a2433" stroke-width="1.1"><g transform="translate(658.18,570.38) scale(0.66)"><path d="M3.3,0.6 C1.2,0.4 1.0,2.0 2.6,2.1 C0.6,2.2 0.8,4.2 3.4,3.9 M2.6,3.9 L2.8,4.6"/></g></g><g stroke="#2a2433" stroke-width="1.1"><g transform="translate(650.28,570.38) scale(0.66)"><path d="M2,0.6 C0.4,2.2 0.6,4.5 2,4.5 C3.4,4.5 3.6,2.2 2,0.6Z"/></g></g><g stroke="#2a2433" stroke-width="1.1"><g transform="translate(642.38,570.38) scale(0.66)"><path d="M0.8,0.8 C1.0,1.9 2.8,2.0 3.1,0.8 M3.1,0.8 L1.6,4.6"/></g></g><g stroke="#2a2433" stroke-width="1.1"><g transform="translate(634.48,570.38) scale(0.66)"><path d="M0.6,0.6 L2,4.6 L3.4,0.6"/></g></g><g stroke="#2a2433" stroke-width="1.1"><g transform="translate(626.58,570.38) scale(0.66)"><path d="M0.6,4.6 L2,0.6 L3.4,4.6"/></g></g><g stroke="#9a62dc" stroke-width="1.1"><g transform="translate(618.68,570.38) scale(0.66)"><path d="M2.6,0.6 C0.8,0.6 0.8,2.6 2.6,2.2 M2.6,0.6 L2.6,4.6"/></g></g><g stroke="#2a2433" stroke-width="1.1"><g transform="translate(664.93,577.58) scale(0.66)"><path d="M1.8,0.6 L2.2,4.6"/></g><g transform="translate(667.23,577.58) scale(0.66)"><circle cx="2" cy="3" r="0.75" fill="#2a2433" stroke="none"/></g></g><g stroke="#2a2433" stroke-width="1.1"><g transform="translate(657.03,577.58) scale(0.66)"><path d="M1.8,0.6 L2.2,4.6"/></g><g transform="translate(659.33,577.58) scale(0.66)"><path d="M1.8,0.6 L2.2,4.6"/></g></g><g stroke="#2a2433" stroke-width="1.1"><g transform="translate(649.13,577.58) scale(0.66)"><path d="M1.8,0.6 L2.2,4.6"/></g><g transform="translate(651.43,577.58) scale(0.66)"><path d="M0.9,0.7 C1.4,1.6 2.6,1.6 3.2,0.5 M0.9,0.7 L1.9,4.6"/></g></g><g stroke="#2a2433" stroke-width="1.1"><g transform="translate(641.23,577.58) scale(0.66)"><path d="M1.8,0.6 L2.2,4.6"/></g><g transform="translate(643.53,577.58) scale(0.66)"><path d="M0.6,0.8 L1.2,1.6 L1.9,0.7 L2.6,1.6 L3.4,0.5 M0.6,0.8 L1.6,4.6"/></g></g><g stroke="#2a2433" stroke-width="1.1"><g transform="translate(633.33,577.58) scale(0.66)"><path d="M1.8,0.6 L2.2,4.6"/></g><g transform="translate(635.63,577.58) scale(0.66)"><path d="M3.3,0.6 C1.2,0.4 1.0,2.0 2.6,2.1 C0.6,2.2 0.8,4.2 3.4,3.9 M2.6,3.9 L2.8,4.6"/></g></g><g stroke="#2a2433" stroke-width="1.1"><g transform="translate(625.43,577.58) scale(0.66)"><path d="M1.8,0.6 L2.2,4.6"/></g><g transform="translate(627.73,577.58) scale(0.66)"><path d="M2,0.6 C0.4,2.2 0.6,4.5 2,4.5 C3.4,4.5 3.6,2.2 2,0.6Z"/></g></g><g stroke="#9a62dc" stroke-width="1.1"><g transform="translate(617.53,577.58) scale(0.66)"><path d="M1.8,0.6 L2.2,4.6"/></g><g transform="translate(619.83,577.58) scale(0.66)"><path d="M0.8,0.8 C1.0,1.9 2.8,2.0 3.1,0.8 M3.1,0.8 L1.6,4.6"/></g></g><g stroke="#2a2433" stroke-width="1.1"><g transform="translate(664.93,584.78) scale(0.66)"><path d="M1.8,0.6 L2.2,4.6"/></g><g transform="translate(667.23,584.78) scale(0.66)"><path d="M0.6,0.6 L2,4.6 L3.4,0.6"/></g></g><g stroke="#2a2433" stroke-width="1.1"><g transform="translate(657.03,584.78) scale(0.66)"><path d="M1.8,0.6 L2.2,4.6"/></g><g transform="translate(659.33,584.78) scale(0.66)"><path d="M0.6,4.6 L2,0.6 L3.4,4.6"/></g></g><g stroke="#2a2433" stroke-width="1.1"><g transform="translate(649.13,584.78) scale(0.66)"><path d="M1.8,0.6 L2.2,4.6"/></g><g transform="translate(651.43,584.78) scale(0.66)"><path d="M2.6,0.6 C0.8,0.6 0.8,2.6 2.6,2.2 M2.6,0.6 L2.6,4.6"/></g></g><g stroke="#2a2433" stroke-width="1.1"><g transform="translate(641.23,584.78) scale(0.66)"><path d="M0.9,0.7 C1.4,1.6 2.6,1.6 3.2,0.5 M0.9,0.7 L1.9,4.6"/></g><g transform="translate(643.53,584.78) scale(0.66)"><circle cx="2" cy="3" r="0.75" fill="#2a2433" stroke="none"/></g></g><g stroke="#2a2433" stroke-width="1.1"><g transform="translate(633.33,584.78) scale(0.66)"><path d="M0.9,0.7 C1.4,1.6 2.6,1.6 3.2,0.5 M0.9,0.7 L1.9,4.6"/></g><g transform="translate(635.63,584.78) scale(0.66)"><path d="M1.8,0.6 L2.2,4.6"/></g></g><g stroke="#9a62dc" stroke-width="1.1"><g transform="translate(625.43,584.78) scale(0.66)"><path d="M0.9,0.7 C1.4,1.6 2.6,1.6 3.2,0.5 M0.9,0.7 L1.9,4.6"/></g><g transform="translate(627.73,584.78) scale(0.66)"><path d="M0.9,0.7 C1.4,1.6 2.6,1.6 3.2,0.5 M0.9,0.7 L1.9,4.6"/></g></g><g stroke="#9a62dc" stroke-width="1.1"><g transform="translate(617.53,584.78) scale(0.66)"><path d="M0.9,0.7 C1.4,1.6 2.6,1.6 3.2,0.5 M0.9,0.7 L1.9,4.6"/></g><g transform="translate(619.83,584.78) scale(0.66)"><path d="M0.6,0.8 L1.2,1.6 L1.9,0.7 L2.6,1.6 L3.4,0.5 M0.6,0.8 L1.6,4.6"/></g></g><g stroke="#2a2433" stroke-width="1.1"><g transform="translate(664.93,591.98) scale(0.66)"><path d="M0.9,0.7 C1.4,1.6 2.6,1.6 3.2,0.5 M0.9,0.7 L1.9,4.6"/></g><g transform="translate(667.23,591.98) scale(0.66)"><path d="M3.3,0.6 C1.2,0.4 1.0,2.0 2.6,2.1 C0.6,2.2 0.8,4.2 3.4,3.9 M2.6,3.9 L2.8,4.6"/></g></g><g stroke="#2a2433" stroke-width="1.1"><g transform="translate(657.03,591.98) scale(0.66)"><path d="M0.9,0.7 C1.4,1.6 2.6,1.6 3.2,0.5 M0.9,0.7 L1.9,4.6"/></g><g transform="translate(659.33,591.98) scale(0.66)"><path d="M2,0.6 C0.4,2.2 0.6,4.5 2,4.5 C3.4,4.5 3.6,2.2 2,0.6Z"/></g></g><g stroke="#2a2433" stroke-width="1.1"><g transform="translate(649.13,591.98) scale(0.66)"><path d="M0.9,0.7 C1.4,1.6 2.6,1.6 3.2,0.5 M0.9,0.7 L1.9,4.6"/></g><g transform="translate(651.43,591.98) scale(0.66)"><path d="M0.8,0.8 C1.0,1.9 2.8,2.0 3.1,0.8 M3.1,0.8 L1.6,4.6"/></g></g><g stroke="#2a2433" stroke-width="1.1"><g transform="translate(641.23,591.98) scale(0.66)"><path d="M0.9,0.7 C1.4,1.6 2.6,1.6 3.2,0.5 M0.9,0.7 L1.9,4.6"/></g><g transform="translate(643.53,591.98) scale(0.66)"><path d="M0.6,0.6 L2,4.6 L3.4,0.6"/></g></g><g stroke="#2a2433" stroke-width="1.1"><g transform="translate(633.33,591.98) scale(0.66)"><path d="M0.9,0.7 C1.4,1.6 2.6,1.6 3.2,0.5 M0.9,0.7 L1.9,4.6"/></g><g transform="translate(635.63,591.98) scale(0.66)"><path d="M0.6,4.6 L2,0.6 L3.4,4.6"/></g></g><g stroke="#2a2433" stroke-width="1.1"><g transform="translate(625.43,591.98) scale(0.66)"><path d="M0.9,0.7 C1.4,1.6 2.6,1.6 3.2,0.5 M0.9,0.7 L1.9,4.6"/></g><g transform="translate(627.73,591.98) scale(0.66)"><path d="M2.6,0.6 C0.8,0.6 0.8,2.6 2.6,2.2 M2.6,0.6 L2.6,4.6"/></g></g><g stroke="#9a62dc" stroke-width="1.1"><g transform="translate(617.53,591.98) scale(0.66)"><path d="M0.6,0.8 L1.2,1.6 L1.9,0.7 L2.6,1.6 L3.4,0.5 M0.6,0.8 L1.6,4.6"/></g><g transform="translate(619.83,591.98) scale(0.66)"><circle cx="2" cy="3" r="0.75" fill="#9a62dc" stroke="none"/></g></g><path d="M580.7,544.3 L580.2,547.5 M580.7,547.5 L580.2,544.3 M580.4,547.5 L577.9,547.5 Q576.2,546.0 574.4,547.5 L573.9,544.3 M574.1,547.5 L571.7,547.5 L571.2,544.3 M571.4,547.5 L568.8,547.5 C567.7,550.0 566.2,547.5 567.2,545.5" stroke="#e8609e" stroke-width="1.0" fill="none"/><g transform="translate(595.80,553.10) scale(0.85)" stroke="#2a2433" stroke-width="1.05"><path d="M0.6,3.8 C0.6,2 2,1.8 2.4,3 L3.4,1 L3.6,3.5 C3.8,4.4 5,4.2 5.4,2.6"/></g><g transform="translate(587.90,553.10) scale(0.85)" stroke="#2a2433" stroke-width="1.05"><path d="M1.2,3.2 C1.2,1.6 4.2,1.6 4.2,3.2 C4.2,4.4 1.2,4.4 1.2,3.2Z"/></g><g transform="translate(580.00,553.10) scale(0.85)" stroke="#2a2433" stroke-width="1.05"><path d="M2.2,2.2 L3,3.6"/></g><g transform="translate(572.10,553.10) scale(0.85)" stroke="#2a2433" stroke-width="1.05"><path d="M0.5,3.6 C0.8,1.6 2.8,1.6 2.9,3.4 C3.2,1.8 5,1.8 5.4,3.4"/></g><g transform="translate(564.20,553.10) scale(0.85)" stroke="#2a2433" stroke-width="1.05"><path d="M3.6,1.4 C1.4,1 0.6,2.6 1.8,3.2 C0.4,3.6 0.8,5 3.6,4.6"/></g><g transform="translate(556.30,553.10) scale(0.85)" stroke="#2a2433" stroke-width="1.05"><path d="M0.8,1.6 L2.2,4.2 L3.6,1.6"/></g><g transform="translate(548.40,553.10) scale(0.85)" stroke="#2a2433" stroke-width="1.05"><path d="M3.6,1.4 C1.4,1 0.6,2.6 1.8,3.2 C0.4,3.6 0.8,5 3.6,4.6"/></g><g stroke="#2a2433" stroke-width="1.1"><g transform="translate(597.08,562.98) scale(0.66)"><path d="M1.8,0.6 L2.2,4.6"/></g></g><g stroke="#2a2433" stroke-width="1.1"><g transform="translate(589.18,562.98) scale(0.66)"><path d="M0.9,0.7 C1.4,1.6 2.6,1.6 3.2,0.5 M0.9,0.7 L1.9,4.6"/></g></g><g stroke="#2a2433" stroke-width="1.1"><g transform="translate(581.28,562.98) scale(0.66)"><path d="M0.6,0.8 L1.2,1.6 L1.9,0.7 L2.6,1.6 L3.4,0.5 M0.6,0.8 L1.6,4.6"/></g></g><g stroke="#2a2433" stroke-width="1.1"><g transform="translate(573.38,562.98) scale(0.66)"><path d="M3.3,0.6 C1.2,0.4 1.0,2.0 2.6,2.1 C0.6,2.2 0.8,4.2 3.4,3.9 M2.6,3.9 L2.8,4.6"/></g></g><g stroke="#2a2433" stroke-width="1.1"><g transform="translate(565.48,562.98) scale(0.66)"><path d="M2,0.6 C0.4,2.2 0.6,4.5 2,4.5 C3.4,4.5 3.6,2.2 2,0.6Z"/></g></g><g stroke="#2a2433" stroke-width="1.1"><g transform="translate(557.58,562.98) scale(0.66)"><path d="M0.8,0.8 C1.0,1.9 2.8,2.0 3.1,0.8 M3.1,0.8 L1.6,4.6"/></g></g><g stroke="#9a62dc" stroke-width="1.1"><g transform="translate(549.68,562.98) scale(0.66)"><path d="M0.6,0.6 L2,4.6 L3.4,0.6"/></g></g><g stroke="#2a2433" stroke-width="1.1"><g transform="translate(597.08,570.38) scale(0.66)"><path d="M0.6,4.6 L2,0.6 L3.4,4.6"/></g></g><g stroke="#2a2433" stroke-width="1.1"><g transform="translate(589.18,570.38) scale(0.66)"><path d="M2.6,0.6 C0.8,0.6 0.8,2.6 2.6,2.2 M2.6,0.6 L2.6,4.6"/></g></g><g stroke="#2a2433" stroke-width="1.1"><g transform="translate(580.13,570.38) scale(0.66)"><path d="M1.8,0.6 L2.2,4.6"/></g><g transform="translate(582.43,570.38) scale(0.66)"><circle cx="2" cy="3" r="0.75" fill="#2a2433" stroke="none"/></g></g><g stroke="#2a2433" stroke-width="1.1"><g transform="translate(572.23,570.38) scale(0.66)"><path d="M1.8,0.6 L2.2,4.6"/></g><g transform="translate(574.53,570.38) scale(0.66)"><path d="M1.8,0.6 L2.2,4.6"/></g></g><g stroke="#2a2433" stroke-width="1.1"><g transform="translate(564.33,570.38) scale(0.66)"><path d="M1.8,0.6 L2.2,4.6"/></g><g transform="translate(566.63,570.38) scale(0.66)"><path d="M0.9,0.7 C1.4,1.6 2.6,1.6 3.2,0.5 M0.9,0.7 L1.9,4.6"/></g></g><g stroke="#2a2433" stroke-width="1.1"><g transform="translate(556.43,570.38) scale(0.66)"><path d="M1.8,0.6 L2.2,4.6"/></g><g transform="translate(558.73,570.38) scale(0.66)"><path d="M0.6,0.8 L1.2,1.6 L1.9,0.7 L2.6,1.6 L3.4,0.5 M0.6,0.8 L1.6,4.6"/></g></g><g stroke="#9a62dc" stroke-width="1.1"><g transform="translate(548.53,570.38) scale(0.66)"><path d="M1.8,0.6 L2.2,4.6"/></g><g transform="translate(550.83,570.38) scale(0.66)"><path d="M3.3,0.6 C1.2,0.4 1.0,2.0 2.6,2.1 C0.6,2.2 0.8,4.2 3.4,3.9 M2.6,3.9 L2.8,4.6"/></g></g><g stroke="#2a2433" stroke-width="1.1"><g transform="translate(595.93,577.58) scale(0.66)"><path d="M1.8,0.6 L2.2,4.6"/></g><g transform="translate(598.23,577.58) scale(0.66)"><path d="M2,0.6 C0.4,2.2 0.6,4.5 2,4.5 C3.4,4.5 3.6,2.2 2,0.6Z"/></g></g><g stroke="#2a2433" stroke-width="1.1"><g transform="translate(588.03,577.58) scale(0.66)"><path d="M1.8,0.6 L2.2,4.6"/></g><g transform="translate(590.33,577.58) scale(0.66)"><path d="M0.8,0.8 C1.0,1.9 2.8,2.0 3.1,0.8 M3.1,0.8 L1.6,4.6"/></g></g><g stroke="#2a2433" stroke-width="1.1"><g transform="translate(580.13,577.58) scale(0.66)"><path d="M1.8,0.6 L2.2,4.6"/></g><g transform="translate(582.43,577.58) scale(0.66)"><path d="M0.6,0.6 L2,4.6 L3.4,0.6"/></g></g><g stroke="#2a2433" stroke-width="1.1"><g transform="translate(572.23,577.58) scale(0.66)"><path d="M1.8,0.6 L2.2,4.6"/></g><g transform="translate(574.53,577.58) scale(0.66)"><path d="M0.6,4.6 L2,0.6 L3.4,4.6"/></g></g><g stroke="#2a2433" stroke-width="1.1"><g transform="translate(564.33,577.58) scale(0.66)"><path d="M1.8,0.6 L2.2,4.6"/></g><g transform="translate(566.63,577.58) scale(0.66)"><path d="M2.6,0.6 C0.8,0.6 0.8,2.6 2.6,2.2 M2.6,0.6 L2.6,4.6"/></g></g><g stroke="#9a62dc" stroke-width="1.1"><g transform="translate(556.43,577.58) scale(0.66)"><path d="M0.9,0.7 C1.4,1.6 2.6,1.6 3.2,0.5 M0.9,0.7 L1.9,4.6"/></g><g transform="translate(558.73,577.58) scale(0.66)"><circle cx="2" cy="3" r="0.75" fill="#9a62dc" stroke="none"/></g></g><g stroke="#9a62dc" stroke-width="1.1"><g transform="translate(548.53,577.58) scale(0.66)"><path d="M0.9,0.7 C1.4,1.6 2.6,1.6 3.2,0.5 M0.9,0.7 L1.9,4.6"/></g><g transform="translate(550.83,577.58) scale(0.66)"><path d="M1.8,0.6 L2.2,4.6"/></g></g><g stroke="#2a2433" stroke-width="1.1"><g transform="translate(595.93,584.78) scale(0.66)"><path d="M0.9,0.7 C1.4,1.6 2.6,1.6 3.2,0.5 M0.9,0.7 L1.9,4.6"/></g><g transform="translate(598.23,584.78) scale(0.66)"><path d="M0.9,0.7 C1.4,1.6 2.6,1.6 3.2,0.5 M0.9,0.7 L1.9,4.6"/></g></g><g stroke="#2a2433" stroke-width="1.1"><g transform="translate(588.03,584.78) scale(0.66)"><path d="M0.9,0.7 C1.4,1.6 2.6,1.6 3.2,0.5 M0.9,0.7 L1.9,4.6"/></g><g transform="translate(590.33,584.78) scale(0.66)"><path d="M0.6,0.8 L1.2,1.6 L1.9,0.7 L2.6,1.6 L3.4,0.5 M0.6,0.8 L1.6,4.6"/></g></g><g stroke="#2a2433" stroke-width="1.1"><g transform="translate(580.13,584.78) scale(0.66)"><path d="M0.9,0.7 C1.4,1.6 2.6,1.6 3.2,0.5 M0.9,0.7 L1.9,4.6"/></g><g transform="translate(582.43,584.78) scale(0.66)"><path d="M3.3,0.6 C1.2,0.4 1.0,2.0 2.6,2.1 C0.6,2.2 0.8,4.2 3.4,3.9 M2.6,3.9 L2.8,4.6"/></g></g><g stroke="#2a2433" stroke-width="1.1"><g transform="translate(572.23,584.78) scale(0.66)"><path d="M0.9,0.7 C1.4,1.6 2.6,1.6 3.2,0.5 M0.9,0.7 L1.9,4.6"/></g><g transform="translate(574.53,584.78) scale(0.66)"><path d="M2,0.6 C0.4,2.2 0.6,4.5 2,4.5 C3.4,4.5 3.6,2.2 2,0.6Z"/></g></g><g stroke="#2a2433" stroke-width="1.1"><g transform="translate(564.33,584.78) scale(0.66)"><path d="M0.9,0.7 C1.4,1.6 2.6,1.6 3.2,0.5 M0.9,0.7 L1.9,4.6"/></g><g transform="translate(566.63,584.78) scale(0.66)"><path d="M0.8,0.8 C1.0,1.9 2.8,2.0 3.1,0.8 M3.1,0.8 L1.6,4.6"/></g></g><g stroke="#2a2433" stroke-width="1.1"><g transform="translate(556.43,584.78) scale(0.66)"><path d="M0.9,0.7 C1.4,1.6 2.6,1.6 3.2,0.5 M0.9,0.7 L1.9,4.6"/></g><g transform="translate(558.73,584.78) scale(0.66)"><path d="M0.6,0.6 L2,4.6 L3.4,0.6"/></g></g><g stroke="#9a62dc" stroke-width="1.1"><g transform="translate(548.53,584.78) scale(0.66)"><path d="M0.9,0.7 C1.4,1.6 2.6,1.6 3.2,0.5 M0.9,0.7 L1.9,4.6"/></g><g transform="translate(550.83,584.78) scale(0.66)"><path d="M0.6,4.6 L2,0.6 L3.4,4.6"/></g></g><g stroke="#2a2433" stroke-width="1.1"><g transform="translate(595.93,591.98) scale(0.66)"><path d="M0.9,0.7 C1.4,1.6 2.6,1.6 3.2,0.5 M0.9,0.7 L1.9,4.6"/></g><g transform="translate(598.23,591.98) scale(0.66)"><path d="M2.6,0.6 C0.8,0.6 0.8,2.6 2.6,2.2 M2.6,0.6 L2.6,4.6"/></g></g></g></g></svg>
<div style="position:absolute;left:843px;top:93px;width:237px;height:472px;background:#535353;"></div><div style="position:absolute;left:843px;top:93px;width:2px;height:473px;background:#3c3c3c;"></div><div style="position:absolute;left:843px;top:562px;width:237px;height:3px;background:#3f3f3f;"></div><div style="position:absolute;left:1000px;top:563px;width:14px;height:1px;background:#5a5a5a;"></div><div style="position:absolute;left:845px;top:93px;width:235px;height:9px;background:#434343;"></div><div style="position:absolute;left:845px;top:102px;width:235px;height:20px;background:#494949;"></div><div style="position:absolute;left:891.0px;top:102px;width:1px;height:20px;background:#404040;"></div><div style="position:absolute;left:851.0px;top:107.5px;font-size:8px;line-height:10px;letter-spacing:-0.15px;-webkit-text-stroke:0.25px #c4c4c4;color:#c4c4c4;white-space:nowrap;">Properties</div><div style="position:absolute;left:933.5px;top:102px;width:1px;height:20px;background:#404040;"></div><div style="position:absolute;left:899.0px;top:107.5px;font-size:8px;line-height:10px;letter-spacing:-0.15px;-webkit-text-stroke:0.25px #c4c4c4;color:#c4c4c4;white-space:nowrap;">Libraries</div><div style="position:absolute;left:981.5px;top:102px;width:1px;height:20px;background:#404040;"></div><div style="position:absolute;left:940.6px;top:107.5px;font-size:8px;line-height:10px;letter-spacing:-0.15px;-webkit-text-stroke:0.25px #c4c4c4;color:#c4c4c4;white-space:nowrap;">Pathfinder</div><div style="position:absolute;left:1030.5px;top:102px;width:1px;height:20px;background:#404040;"></div><div style="position:absolute;left:990.0px;top:107.5px;font-size:8px;line-height:10px;letter-spacing:-0.15px;-webkit-text-stroke:0.25px #c4c4c4;color:#c4c4c4;white-space:nowrap;">Transform</div><div style="position:absolute;left:1061.5px;top:102px;width:1px;height:20px;background:#404040;"></div><div style="position:absolute;left:1037.0px;top:107.5px;font-size:8px;line-height:10px;letter-spacing:-0.15px;-webkit-text-stroke:0.25px #c4c4c4;color:#c4c4c4;white-space:nowrap;">Align</div><div style="position:absolute;left:1062px;top:102px;width:18px;height:20px;background:#535353;"></div><div style="position:absolute;left:1068px;top:107.5px;font-size:8px;line-height:10px;color:#f0f0f0;font-weight:bold;white-space:nowrap;">Layers</div><div style="position:absolute;left:848px;top:126px;width:232px;height:421px;border-left:1px solid #5c5c5c;border-bottom:1px solid #5c5c5c;box-sizing:border-box;"></div><div style="position:absolute;left:849px;top:127.0px;width:231px;height:14.9px;background:#4b6281;"></div><svg width="14" height="10" style="position:absolute;left:848.8px;top:129.4px" viewBox="0 0 14 10"><path d="M3,5 Q7,1 11,5 Q7,9 3,5Z" fill="none" stroke="#d8d8d8" stroke-width="1.7"/><circle cx="7" cy="5" r="1.3" fill="#777"/></svg><div style="position:absolute;left:879px;top:127.8px;width:3px;height:13.3px;background:#55d65e;"></div><svg width="10" height="8" style="position:absolute;left:884.5px;top:130.4px" viewBox="0 0 10 8"><path d="M2,2.5 L5,5.5 L8,2.5" fill="none" stroke="#e8e8e8" stroke-width="1.6"/></svg><svg width="13" height="13" style="position:absolute;left:900.0px;top:128.0px" viewBox="0 0 13 13"><rect x="0.5" y="0.5" width="12" height="12" rx="2" fill="#1e1e1e"/><rect x="1" y="1" width="11" height="11" fill="#f4eefc"/><rect x="1" y="1" width="4" height="11" fill="#e0703a"/><path d="M1,3 L5,2 L6,6 L3,9 L5,12 L1,12Z" fill="#d84880"/><rect x="6" y="4" width="6" height="8" fill="#f8f4fc"/><rect x="5" y="1" width="7" height="3" fill="#b070d0"/></svg><div style="position:absolute;left:916.0px;top:130.0px;font-size:8px;line-height:10px;letter-spacing:-0.3px;-webkit-text-stroke:0.25px #e8eef6;color:#e8eef6;white-space:nowrap;">PRINT</div><div style="position:absolute;left:849px;top:141.9px;width:231px;height:14.9px;background:#535353;"></div><div style="position:absolute;left:849px;top:156.0px;width:231px;height:1px;background:#5c5c5c;"></div><div style="position:absolute;left:864px;top:141.9px;width:1px;height:14.9px;background:#4f4f4f;"></div><svg width="14" height="10" style="position:absolute;left:848.8px;top:144.3px" viewBox="0 0 14 10"><path d="M3,5 Q7,1 11,5 Q7,9 3,5Z" fill="none" stroke="#d8d8d8" stroke-width="1.7"/><circle cx="7" cy="5" r="1.3" fill="#777"/></svg><div style="position:absolute;left:879px;top:142.7px;width:3px;height:13.3px;background:#55d65e;"></div><svg width="10" height="8" style="position:absolute;left:901.8px;top:145.3px" viewBox="0 0 10 8"><path d="M2,2.5 L5,5.5 L8,2.5" fill="none" stroke="#e8e8e8" stroke-width="1.6"/></svg><svg width="13" height="13" style="position:absolute;left:917.0px;top:142.9px" viewBox="0 0 13 13"><rect x="0.5" y="0.5" width="12" height="12" rx="2" fill="#1e1e1e"/><rect x="1" y="1" width="11" height="11" fill="#f4eefc"/><rect x="1" y="1" width="4" height="11" fill="#e0703a"/><path d="M1,3 L5,2 L6,6 L3,9 L5,12 L1,12Z" fill="#d84880"/><rect x="6" y="4" width="6" height="8" fill="#f8f4fc"/><rect x="5" y="1" width="7" height="3" fill="#b070d0"/></svg><div style="position:absolute;left:932.8px;top:144.9px;font-size:8px;line-height:10px;letter-spacing:-0.3px;-webkit-text-stroke:0.25px #d6d6d6;color:#d6d6d6;white-space:nowrap;">&lt;Clip Group&gt;</div><div style="position:absolute;left:849px;top:156.8px;width:231px;height:14.9px;background:#535353;"></div><div style="position:absolute;left:849px;top:170.9px;width:231px;height:1px;background:#5c5c5c;"></div><div style="position:absolute;left:864px;top:156.8px;width:1px;height:14.9px;background:#4f4f4f;"></div><svg width="14" height="10" style="position:absolute;left:848.8px;top:159.2px" viewBox="0 0 14 10"><path d="M3,5 Q7,1 11,5 Q7,9 3,5Z" fill="none" stroke="#d8d8d8" stroke-width="1.7"/><circle cx="7" cy="5" r="1.3" fill="#777"/></svg><div style="position:absolute;left:879px;top:157.6px;width:3px;height:13.3px;background:#55d65e;"></div><svg width="13" height="13" style="position:absolute;left:932.8px;top:157.8px" viewBox="0 0 13 13"><rect x="0.5" y="0.5" width="12" height="12" rx="2" fill="#1e1e1e"/><rect x="1" y="1" width="11" height="11" fill="#f4f4f4"/><rect x="2" y="1" width="1" height="11" fill="#999"/><rect x="10" y="1" width="1" height="11" fill="#999"/></svg><div style="position:absolute;left:948.5px;top:159.8px;font-size:8px;line-height:10px;letter-spacing:-0.3px;-webkit-text-stroke:0.25px #d6d6d6;color:#d6d6d6;white-space:nowrap;text-decoration:underline;">&lt;Rectangle&gt;</div><div style="position:absolute;left:849px;top:171.7px;width:231px;height:14.9px;background:#535353;"></div><div style="position:absolute;left:849px;top:185.8px;width:231px;height:1px;background:#5c5c5c;"></div><div style="position:absolute;left:864px;top:171.7px;width:1px;height:14.9px;background:#4f4f4f;"></div><svg width="14" height="10" style="position:absolute;left:848.8px;top:174.1px" viewBox="0 0 14 10"><path d="M3,5 Q7,1 11,5 Q7,9 3,5Z" fill="none" stroke="#d8d8d8" stroke-width="1.7"/><circle cx="7" cy="5" r="1.3" fill="#777"/></svg><div style="position:absolute;left:879px;top:172.5px;width:3px;height:13.3px;background:#55d65e;"></div><svg width="10" height="8" style="position:absolute;left:917.6px;top:175.1px" viewBox="0 0 10 8"><path d="M2,2.5 L5,5.5 L8,2.5" fill="none" stroke="#e8e8e8" stroke-width="1.6"/></svg><svg width="13" height="13" style="position:absolute;left:932.8px;top:172.7px" viewBox="0 0 13 13"><rect x="0.5" y="0.5" width="12" height="12" rx="2" fill="#1e1e1e"/><rect x="1" y="1" width="11" height="11" fill="#f4eefc"/><rect x="1" y="1" width="4" height="11" fill="#e0703a"/><path d="M1,3 L5,2 L6,6 L3,9 L5,12 L1,12Z" fill="#d84880"/><rect x="6" y="4" width="6" height="8" fill="#f8f4fc"/><rect x="5" y="1" width="7" height="3" fill="#b070d0"/></svg><div style="position:absolute;left:948.5px;top:174.7px;font-size:8px;line-height:10px;letter-spacing:-0.3px;-webkit-text-stroke:0.25px #d6d6d6;color:#d6d6d6;white-space:nowrap;">&lt;Group&gt;</div><div style="position:absolute;left:849px;top:186.6px;width:231px;height:14.9px;background:#535353;"></div><div style="position:absolute;left:849px;top:200.7px;width:231px;height:1px;background:#5c5c5c;"></div><div style="position:absolute;left:864px;top:186.6px;width:1px;height:14.9px;background:#4f4f4f;"></div><svg width="14" height="10" style="position:absolute;left:848.8px;top:189.0px" viewBox="0 0 14 10"><path d="M3,5 Q7,1 11,5 Q7,9 3,5Z" fill="none" stroke="#d8d8d8" stroke-width="1.7"/><circle cx="7" cy="5" r="1.3" fill="#777"/></svg><div style="position:absolute;left:879px;top:187.4px;width:3px;height:13.3px;background:#55d65e;"></div><svg width="13" height="13" style="position:absolute;left:948.5px;top:187.6px" viewBox="0 0 13 13"><rect x="0.5" y="0.5" width="12" height="12" rx="2" fill="#1e1e1e"/><rect x="1" y="1" width="11" height="11" fill="#fbfafc"/><path d="M2.5,6 L5,6.5 L7,5.5 L10,6" stroke="#9050c8" stroke-width="1.2" fill="none"/></svg><svg width="36" height="12" style="position:absolute;left:965.0px;top:188.1px" viewBox="0 0 36 12"><g fill="none" stroke="#d8d8d8" stroke-width="1.1" stroke-linecap="round"><path d="M2.5,3.5 C0.5,5 0.5,8.5 2.5,8.5 C4.5,8.5 4.5,5 2.5,3.5Z"/><circle cx="6.5" cy="7" r="0.8" fill="#d8d8d8" stroke="none"/><path d="M9.5,3 L10.5,9 M12.5,3.5 C10.5,3.5 10.5,5.5 12,5.5"/><path d="M15,3 L16,9"/><path d="M21,3 L21,8 C21,9.5 19,9.5 18.5,8.5"/><path d="M23.5,3 L23.5,8.5"/><path d="M25.5,6.5 C25.5,9 27.5,9 28,7 C28,9 30,9 30.5,7 C30.5,9 33,9 33.5,6 L33.5,9"/></g></svg><div style="position:absolute;left:849px;top:201.5px;width:231px;height:14.9px;background:#535353;"></div><div style="position:absolute;left:849px;top:215.6px;width:231px;height:1px;background:#5c5c5c;"></div><div style="position:absolute;left:864px;top:201.5px;width:1px;height:14.9px;background:#4f4f4f;"></div><svg width="14" height="10" style="position:absolute;left:848.8px;top:203.9px" viewBox="0 0 14 10"><path d="M3,5 Q7,1 11,5 Q7,9 3,5Z" fill="none" stroke="#d8d8d8" stroke-width="1.7"/><circle cx="7" cy="5" r="1.3" fill="#777"/></svg><div style="position:absolute;left:879px;top:202.3px;width:3px;height:13.3px;background:#55d65e;"></div><svg width="8" height="10" style="position:absolute;left:933.8px;top:203.9px" viewBox="0 0 8 10"><path d="M2.5,2 L5.5,5 L2.5,8" fill="none" stroke="#e8e8e8" stroke-width="1.6"/></svg><svg width="13" height="13" style="position:absolute;left:948.5px;top:202.5px" viewBox="0 0 13 13"><rect x="0.5" y="0.5" width="12" height="12" rx="2" fill="#1e1e1e"/><rect x="1" y="1" width="11" height="11" fill="#fbfafc"/><rect x="3" y="1.5" width="7" height="10" fill="#e8e0f8"/></svg><div style="position:absolute;left:965.0px;top:204.5px;font-size:8px;line-height:10px;letter-spacing:-0.3px;-webkit-text-stroke:0.25px #d6d6d6;color:#d6d6d6;white-space:nowrap;">&lt;Group&gt;</div><div style="position:absolute;left:849px;top:216.4px;width:231px;height:14.9px;background:#535353;"></div><div style="position:absolute;left:849px;top:230.5px;width:231px;height:1px;background:#5c5c5c;"></div><div style="position:absolute;left:864px;top:216.4px;width:1px;height:14.9px;background:#4f4f4f;"></div><svg width="14" height="10" style="position:absolute;left:848.8px;top:218.8px" viewBox="0 0 14 10"><path d="M3,5 Q7,1 11,5 Q7,9 3,5Z" fill="none" stroke="#d8d8d8" stroke-width="1.7"/><circle cx="7" cy="5" r="1.3" fill="#777"/></svg><div style="position:absolute;left:879px;top:217.2px;width:3px;height:13.3px;background:#55d65e;"></div><svg width="8" height="10" style="position:absolute;left:933.8px;top:218.8px" viewBox="0 0 8 10"><path d="M2.5,2 L5.5,5 L2.5,8" fill="none" stroke="#e8e8e8" stroke-width="1.6"/></svg><svg width="13" height="13" style="position:absolute;left:948.5px;top:217.4px" viewBox="0 0 13 13"><rect x="0.5" y="0.5" width="12" height="12" rx="2" fill="#1e1e1e"/><rect x="1" y="1" width="11" height="11" fill="#fcfcfc"/></svg><div style="position:absolute;left:965.0px;top:219.4px;font-size:8px;line-height:10px;letter-spacing:-0.3px;-webkit-text-stroke:0.25px #d6d6d6;color:#d6d6d6;white-space:nowrap;">&lt;Group&gt;</div><div style="position:absolute;left:849px;top:231.3px;width:231px;height:14.9px;background:#535353;"></div><div style="position:absolute;left:849px;top:245.4px;width:231px;height:1px;background:#5c5c5c;"></div><div style="position:absolute;left:864px;top:231.3px;width:1px;height:14.9px;background:#4f4f4f;"></div><svg width="14" height="10" style="position:absolute;left:848.8px;top:233.8px" viewBox="0 0 14 10"><path d="M3,5 Q7,1 11,5 Q7,9 3,5Z" fill="none" stroke="#d8d8d8" stroke-width="1.7"/><circle cx="7" cy="5" r="1.3" fill="#777"/></svg><div style="position:absolute;left:879px;top:232.1px;width:3px;height:13.3px;background:#55d65e;"></div><svg width="8" height="10" style="position:absolute;left:933.8px;top:233.8px" viewBox="0 0 8 10"><path d="M2.5,2 L5.5,5 L2.5,8" fill="none" stroke="#e8e8e8" stroke-width="1.6"/></svg><svg width="13" height="13" style="position:absolute;left:948.5px;top:232.3px" viewBox="0 0 13 13"><rect x="0.5" y="0.5" width="12" height="12" rx="2" fill="#1e1e1e"/><rect x="1" y="1" width="11" height="11" fill="#fcfcfc"/><path d="M1.5,2 L5,2 L4,6 L6,8 L3,12 L1.5,12Z" fill="#e07040"/><path d="M2,3 L4,3 L3,6Z" fill="#c04080"/><rect x="9" y="2" width="2" height="2" fill="#8050c0"/></svg><div style="position:absolute;left:965.0px;top:234.3px;font-size:8px;line-height:10px;letter-spacing:-0.3px;-webkit-text-stroke:0.25px #d6d6d6;color:#d6d6d6;white-space:nowrap;">&lt;Group&gt;</div><div style="position:absolute;left:849px;top:246.2px;width:231px;height:14.9px;background:#535353;"></div><div style="position:absolute;left:849px;top:260.3px;width:231px;height:1px;background:#5c5c5c;"></div><div style="position:absolute;left:864px;top:246.2px;width:1px;height:14.9px;background:#4f4f4f;"></div><svg width="14" height="10" style="position:absolute;left:848.8px;top:248.6px" viewBox="0 0 14 10"><path d="M3,5 Q7,1 11,5 Q7,9 3,5Z" fill="none" stroke="#d8d8d8" stroke-width="1.7"/><circle cx="7" cy="5" r="1.3" fill="#777"/></svg><div style="position:absolute;left:879px;top:247.0px;width:3px;height:13.3px;background:#55d65e;"></div><svg width="8" height="10" style="position:absolute;left:933.8px;top:248.6px" viewBox="0 0 8 10"><path d="M2.5,2 L5.5,5 L2.5,8" fill="none" stroke="#e8e8e8" stroke-width="1.6"/></svg><svg width="13" height="13" style="position:absolute;left:948.5px;top:247.2px" viewBox="0 0 13 13"><rect x="0.5" y="0.5" width="12" height="12" rx="2" fill="#1e1e1e"/><rect x="1" y="1" width="11" height="11" fill="#fcfcfc"/><path d="M5,3 L8,5 L7,9 L9,11 L5,10 L4,6Z" fill="#d03878"/></svg><div style="position:absolute;left:965.0px;top:249.2px;font-size:8px;line-height:10px;letter-spacing:-0.3px;-webkit-text-stroke:0.25px #d6d6d6;color:#d6d6d6;white-space:nowrap;">&lt;Group&gt;</div><div style="position:absolute;left:849px;top:261.1px;width:231px;height:14.9px;background:#535353;"></div><div style="position:absolute;left:849px;top:275.2px;width:231px;height:1px;background:#5c5c5c;"></div><div style="position:absolute;left:864px;top:261.1px;width:1px;height:14.9px;background:#4f4f4f;"></div><svg width="14" height="10" style="position:absolute;left:848.8px;top:263.6px" viewBox="0 0 14 10"><path d="M3,5 Q7,1 11,5 Q7,9 3,5Z" fill="none" stroke="#d8d8d8" stroke-width="1.7"/><circle cx="7" cy="5" r="1.3" fill="#777"/></svg><div style="position:absolute;left:879px;top:261.9px;width:3px;height:13.3px;background:#55d65e;"></div><svg width="8" height="10" style="position:absolute;left:933.8px;top:263.6px" viewBox="0 0 8 10"><path d="M2.5,2 L5.5,5 L2.5,8" fill="none" stroke="#e8e8e8" stroke-width="1.6"/></svg><svg width="13" height="13" style="position:absolute;left:948.5px;top:262.1px" viewBox="0 0 13 13"><rect x="0.5" y="0.5" width="12" height="12" rx="2" fill="#1e1e1e"/><rect x="1" y="1" width="11" height="11" fill="#fcfcfc"/><rect x="2" y="5" width="10" height="3" fill="#6a48b8"/></svg><div style="position:absolute;left:965.0px;top:264.2px;font-size:8px;line-height:10px;letter-spacing:-0.3px;-webkit-text-stroke:0.25px #d6d6d6;color:#d6d6d6;white-space:nowrap;">&lt;Group&gt;</div><div style="position:absolute;left:849px;top:276.0px;width:231px;height:14.9px;background:#535353;"></div><div style="position:absolute;left:849px;top:290.1px;width:231px;height:1px;background:#5c5c5c;"></div><div style="position:absolute;left:864px;top:276.0px;width:1px;height:14.9px;background:#4f4f4f;"></div><svg width="14" height="10" style="position:absolute;left:848.8px;top:278.4px" viewBox="0 0 14 10"><path d="M3,5 Q7,1 11,5 Q7,9 3,5Z" fill="none" stroke="#d8d8d8" stroke-width="1.7"/><circle cx="7" cy="5" r="1.3" fill="#777"/></svg><div style="position:absolute;left:879px;top:276.8px;width:3px;height:13.3px;background:#55d65e;"></div><svg width="8" height="10" style="position:absolute;left:933.8px;top:278.4px" viewBox="0 0 8 10"><path d="M2.5,2 L5.5,5 L2.5,8" fill="none" stroke="#e8e8e8" stroke-width="1.6"/></svg><svg width="13" height="13" style="position:absolute;left:948.5px;top:277.0px" viewBox="0 0 13 13"><rect x="0.5" y="0.5" width="12" height="12" rx="2" fill="#1e1e1e"/><rect x="1" y="1" width="11" height="11" fill="#fcfcfc"/><rect x="3" y="3" width="1.5" height="1.5" fill="#9a80d8"/><rect x="9" y="2" width="1.5" height="1.5" fill="#9a80d8"/><rect x="4" y="8" width="1.5" height="1.5" fill="#9a80d8"/></svg><div style="position:absolute;left:965.0px;top:279.1px;font-size:8px;line-height:10px;letter-spacing:-0.3px;-webkit-text-stroke:0.25px #d6d6d6;color:#d6d6d6;white-space:nowrap;">&lt;Group&gt;</div><div style="position:absolute;left:849px;top:290.9px;width:231px;height:14.9px;background:#535353;"></div><div style="position:absolute;left:849px;top:305.0px;width:231px;height:1px;background:#5c5c5c;"></div><div style="position:absolute;left:864px;top:290.9px;width:1px;height:14.9px;background:#4f4f4f;"></div><svg width="14" height="10" style="position:absolute;left:848.8px;top:293.3px" viewBox="0 0 14 10"><path d="M3,5 Q7,1 11,5 Q7,9 3,5Z" fill="none" stroke="#d8d8d8" stroke-width="1.7"/><circle cx="7" cy="5" r="1.3" fill="#777"/></svg><div style="position:absolute;left:879px;top:291.7px;width:3px;height:13.3px;background:#55d65e;"></div><svg width="13" height="13" style="position:absolute;left:948.5px;top:291.9px" viewBox="0 0 13 13"><rect x="0.5" y="0.5" width="12" height="12" rx="2" fill="#1e1e1e"/><rect x="1" y="1" width="11" height="11" fill="#fbfafc"/><rect x="2" y="2" width="9" height="9" fill="#d4c4f4"/></svg><div style="position:absolute;left:965.0px;top:293.9px;font-size:8px;line-height:10px;letter-spacing:-0.3px;-webkit-text-stroke:0.25px #d6d6d6;color:#d6d6d6;white-space:nowrap;">&lt;Rectangle&gt;</div><div style="position:absolute;left:849px;top:305.8px;width:231px;height:14.9px;background:#535353;"></div><div style="position:absolute;left:849px;top:319.9px;width:231px;height:1px;background:#5c5c5c;"></div><div style="position:absolute;left:864px;top:305.8px;width:1px;height:14.9px;background:#4f4f4f;"></div><svg width="14" height="10" style="position:absolute;left:848.8px;top:308.2px" viewBox="0 0 14 10"><path d="M3,5 Q7,1 11,5 Q7,9 3,5Z" fill="none" stroke="#d8d8d8" stroke-width="1.7"/><circle cx="7" cy="5" r="1.3" fill="#777"/></svg><div style="position:absolute;left:879px;top:306.6px;width:3px;height:13.3px;background:#55d65e;"></div><svg width="8" height="10" style="position:absolute;left:933.8px;top:308.2px" viewBox="0 0 8 10"><path d="M2.5,2 L5.5,5 L2.5,8" fill="none" stroke="#e8e8e8" stroke-width="1.6"/></svg><svg width="13" height="13" style="position:absolute;left:948.5px;top:306.8px" viewBox="0 0 13 13"><rect x="0.5" y="0.5" width="12" height="12" rx="2" fill="#1e1e1e"/><rect x="1" y="1" width="11" height="11" fill="#fcfcfc"/></svg><div style="position:absolute;left:965.0px;top:308.9px;font-size:8px;line-height:10px;letter-spacing:-0.3px;-webkit-text-stroke:0.25px #d6d6d6;color:#d6d6d6;white-space:nowrap;">BG</div><div style="position:absolute;left:849px;top:550.5px;font-size:8px;line-height:10px;color:#e0e0e0;letter-spacing:-0.3px;white-space:nowrap;">1 Layer</div><svg width="12" height="12" style="position:absolute;left:1049px;top:549.5px" viewBox="0 0 12 12"><path d="M5,2.5 H2 V10 H9.5 V7" fill="none" stroke="#e0e0e0" stroke-width="1.2"/><path d="M6,6 L10.5,1.5 M7,1.5 H10.5 V5" fill="none" stroke="#e0e0e0" stroke-width="1.2"/></svg><svg width="12" height="12" style="position:absolute;left:1067px;top:549.5px" viewBox="0 0 12 12"><circle cx="5" cy="5" r="3.3" fill="none" stroke="#7a7a7a" stroke-width="1.2"/><path d="M7.5,7.5 L11,11" stroke="#7a7a7a" stroke-width="1.3"/></svg>
</div>
</body></html>
